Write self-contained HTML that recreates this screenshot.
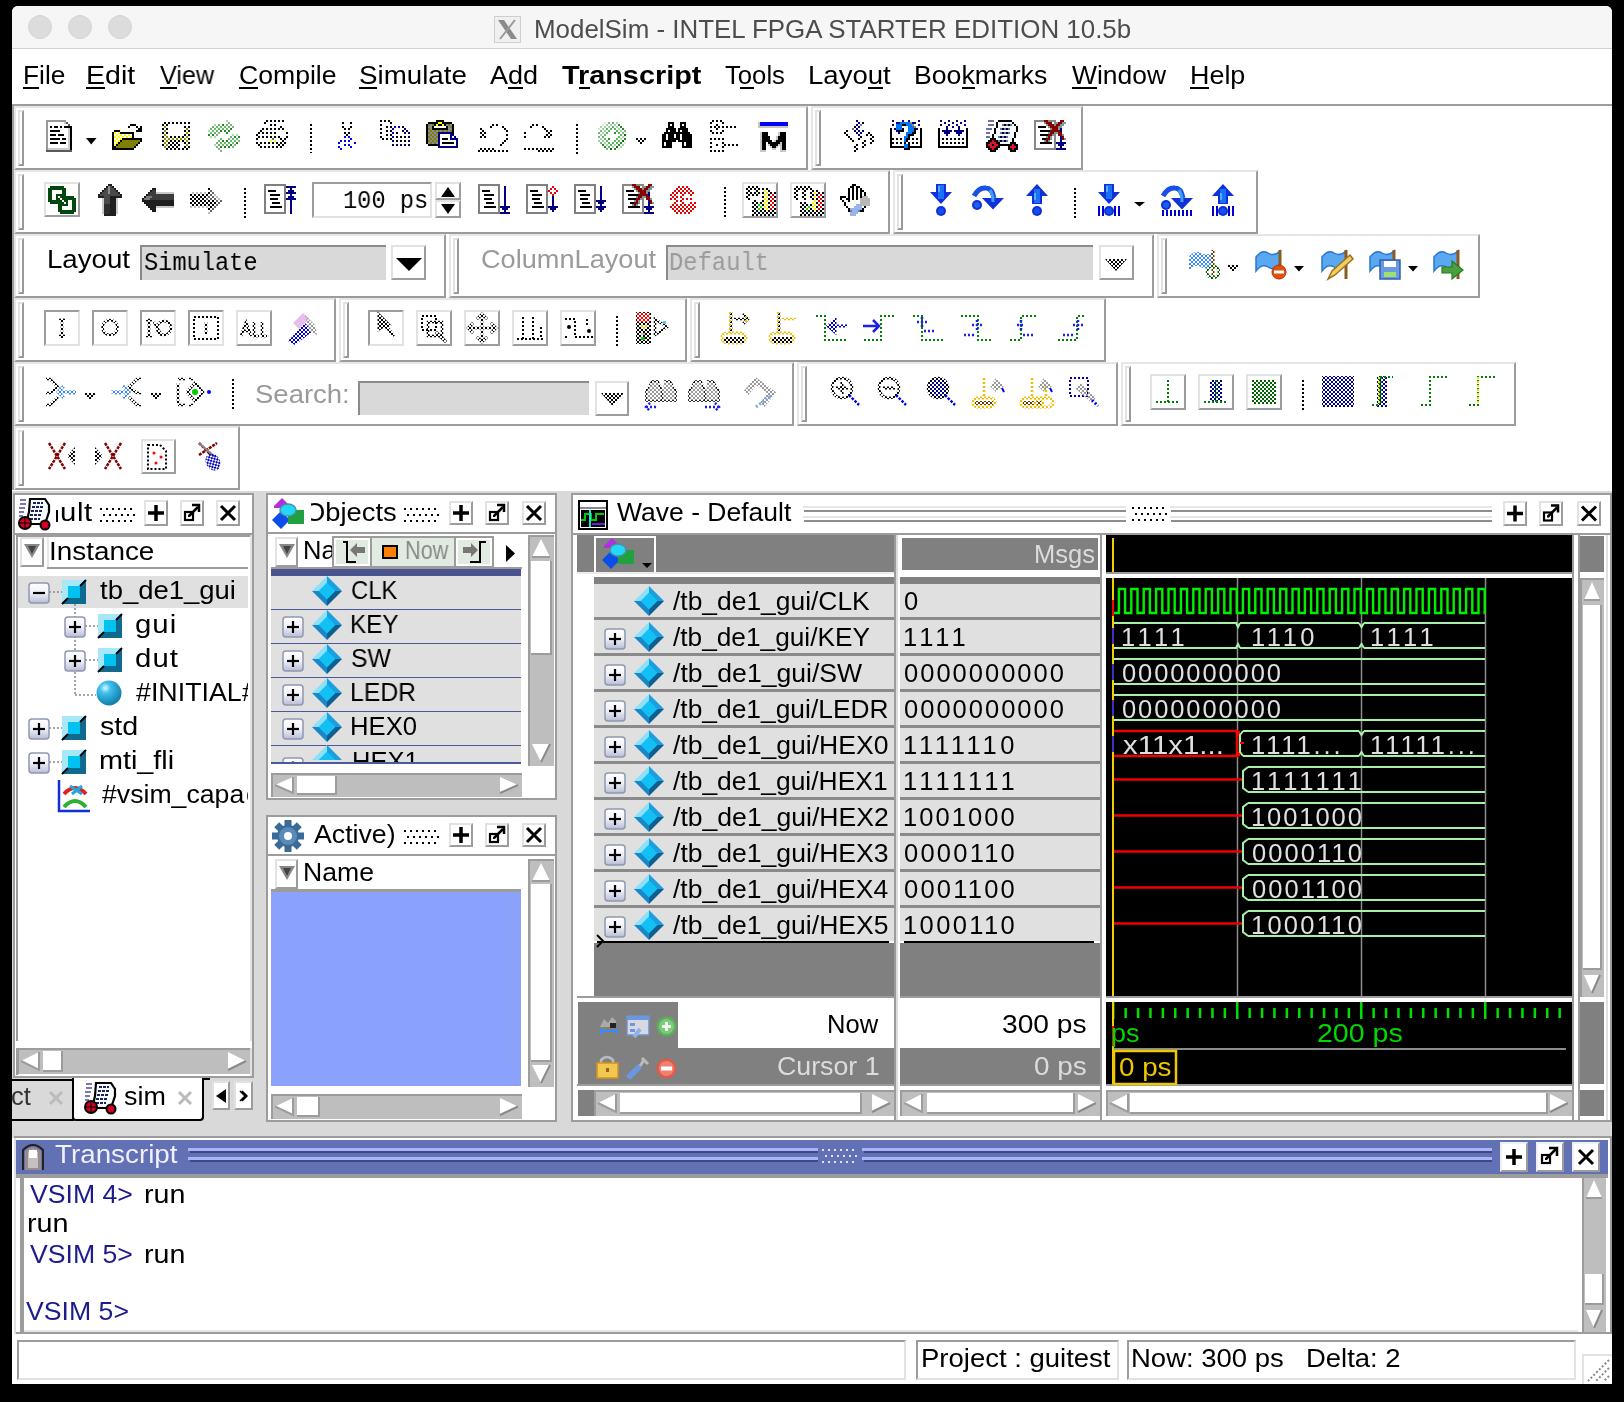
<!DOCTYPE html><html><head><meta charset="utf-8"><style>
*{margin:0;padding:0}
html,body{width:1624px;height:1402px;overflow:hidden;background:#000}
div,svg{position:absolute}
.t{white-space:pre;will-change:transform}
</style></head><body>
<div style="left:12px;top:6px;width:1600px;height:1378px;background:#fff;border-radius:6px 6px 0 0"></div>
<div style="left:12px;top:6px;width:1600px;height:42px;background:#f6f6f6;border-radius:6px 6px 0 0"></div>
<div style="left:12px;top:48px;width:1600px;height:1px;background:#d2d2d2"></div>
<div style="left:28px;top:15px;width:24px;height:24px;border-radius:50%;background:#dcdcdc;box-sizing:border-box;border:1px solid #d4d4d4"></div>
<div style="left:68px;top:15px;width:24px;height:24px;border-radius:50%;background:#dcdcdc;box-sizing:border-box;border:1px solid #d4d4d4"></div>
<div style="left:108px;top:15px;width:24px;height:24px;border-radius:50%;background:#dcdcdc;box-sizing:border-box;border:1px solid #d4d4d4"></div>
<div style="left:494px;top:16px;width:27px;height:27px;border:1px solid #cfcfcf;box-sizing:border-box;background:#f0f0f0"></div>
<svg style="left:494px;top:16px" width="27" height="27"><path d="M4 4 H10 L23 23 H17 Z" fill="#8a8a8a"/><path d="M21 4 L6 23" stroke="#999" stroke-width="2"/></svg>
<div class="t" style="left:533.87px;top:16.91px;font:25.5px/25.5px 'Liberation Sans', sans-serif;color:#4d4d4d;letter-spacing:0.000px;transform:scaleX(1.0163);transform-origin:0 0;">ModelSim - INTEL FPGA STARTER EDITION 10.5b</div>
<div style="left:22.85px;top:86.90px;width:16.04px;height:2px;background:#000"></div><div class="t" style="left:22.85px;top:62.81px;font:25.5px/25.5px 'Liberation Sans', sans-serif;color:#000;letter-spacing:0.000px;transform:scaleX(1.0299);transform-origin:0 0;">File</div>
<div style="left:85.66px;top:86.90px;width:19.02px;height:2px;background:#000"></div><div class="t" style="left:85.66px;top:62.81px;font:25.5px/25.5px 'Liberation Sans', sans-serif;color:#000;letter-spacing:-0.000px;transform:scaleX(1.1182);transform-origin:0 0;">Edit</div>
<div style="left:159.89px;top:86.90px;width:16.63px;height:2px;background:#000"></div><div class="t" style="left:159.89px;top:62.81px;font:25.5px/25.5px 'Liberation Sans', sans-serif;color:#000;letter-spacing:0.000px;transform:scaleX(0.9861);transform-origin:0 0;">View</div>
<div style="left:239.25px;top:86.90px;width:19.20px;height:2px;background:#000"></div><div class="t" style="left:239.25px;top:62.81px;font:25.5px/25.5px 'Liberation Sans', sans-serif;color:#000;letter-spacing:0.000px;transform:scaleX(1.0426);transform-origin:0 0;">Compile</div>
<div style="left:358.74px;top:86.90px;width:18.50px;height:2px;background:#000"></div><div class="t" style="left:358.74px;top:62.81px;font:25.5px/25.5px 'Liberation Sans', sans-serif;color:#000;letter-spacing:0.000px;transform:scaleX(1.0874);transform-origin:0 0;">Simulate</div>
<div style="left:507.98px;top:86.90px;width:15.03px;height:2px;background:#000"></div><div class="t" style="left:489.95px;top:62.81px;font:25.5px/25.5px 'Liberation Sans', sans-serif;color:#000;letter-spacing:0.000px;transform:scaleX(1.0599);transform-origin:0 0;">Add</div>
<div style="left:579.09px;top:86.90px;width:11.09px;height:2px;background:#000"></div><div class="t" style="left:561.68px;top:62.81px;font:bold 25.5px/25.5px 'Liberation Sans', sans-serif;color:#000;letter-spacing:0.000px;transform:scaleX(1.1303);transform-origin:0 0;">Transcript</div>
<div style="left:740.40px;top:86.90px;width:13.63px;height:2px;background:#000"></div><div class="t" style="left:725.42px;top:62.81px;font:25.5px/25.5px 'Liberation Sans', sans-serif;color:#000;letter-spacing:0.000px;transform:scaleX(1.0068);transform-origin:0 0;">Tools</div>
<div style="left:867.51px;top:86.90px;width:15.33px;height:2px;background:#000"></div><div class="t" style="left:807.74px;top:62.81px;font:25.5px/25.5px 'Liberation Sans', sans-serif;color:#000;letter-spacing:0.000px;transform:scaleX(1.0810);transform-origin:0 0;">Layout</div>
<div style="left:961.72px;top:86.90px;width:13.32px;height:2px;background:#000"></div><div class="t" style="left:914.31px;top:62.81px;font:25.5px/25.5px 'Liberation Sans', sans-serif;color:#000;letter-spacing:0.000px;transform:scaleX(1.0447);transform-origin:0 0;">Bookmarks</div>
<div style="left:1071.88px;top:86.90px;width:24.96px;height:2px;background:#000"></div><div class="t" style="left:1071.88px;top:62.81px;font:25.5px/25.5px 'Liberation Sans', sans-serif;color:#000;letter-spacing:0.000px;transform:scaleX(1.0369);transform-origin:0 0;">Window</div>
<div style="left:1189.79px;top:86.90px;width:19.43px;height:2px;background:#000"></div><div class="t" style="left:1189.79px;top:62.81px;font:25.5px/25.5px 'Liberation Sans', sans-serif;color:#000;letter-spacing:0.000px;transform:scaleX(1.0550);transform-origin:0 0;">Help</div>
<svg style="left:0;top:0" width="0" height="0"><defs>
<pattern id="pk" width="4" height="4" patternUnits="userSpaceOnUse"><rect width="2" height="2" fill="#000"/><rect x="2" y="2" width="2" height="2" fill="#000"/></pattern>
<pattern id="pg" width="4" height="4" patternUnits="userSpaceOnUse"><rect width="2" height="2" fill="#1a7a1a"/><rect x="2" y="2" width="2" height="2" fill="#8ccc8c"/></pattern>
<pattern id="pgd" width="4" height="4" patternUnits="userSpaceOnUse"><rect width="2" height="2" fill="#006400"/><rect x="2" y="2" width="2" height="2" fill="#006400"/></pattern>
<pattern id="pr" width="4" height="4" patternUnits="userSpaceOnUse"><rect width="2" height="2" fill="#f00"/><rect x="2" y="2" width="2" height="2" fill="#f00"/></pattern>
<pattern id="pb" width="4" height="4" patternUnits="userSpaceOnUse"><rect width="2" height="2" fill="#0000c0"/><rect x="2" y="2" width="2" height="2" fill="#0000c0"/></pattern>
<pattern id="pbn" width="4" height="4" patternUnits="userSpaceOnUse"><rect width="2" height="2" fill="#000080"/><rect x="2" y="2" width="2" height="2" fill="#000080"/></pattern>
<pattern id="pbl" width="4" height="4" patternUnits="userSpaceOnUse"><rect width="2" height="2" fill="#3c8cf0"/><rect x="2" y="2" width="2" height="2" fill="#3c8cf0"/></pattern>
<pattern id="py" width="4" height="4" patternUnits="userSpaceOnUse"><rect width="2" height="2" fill="#f0c000"/><rect x="2" y="2" width="2" height="2" fill="#f0c000"/></pattern>
<pattern id="pyy" width="4" height="4" patternUnits="userSpaceOnUse"><rect width="2" height="2" fill="#ff0"/><rect x="2" y="2" width="2" height="2" fill="#fff"/><rect x="2" width="2" height="2" fill="#ff0"/></pattern>
<pattern id="po" width="4" height="4" patternUnits="userSpaceOnUse"><rect width="2" height="2" fill="#7a6a00"/><rect x="2" y="2" width="2" height="2" fill="#7a6a00"/></pattern>
<pattern id="pgr" width="4" height="4" patternUnits="userSpaceOnUse"><rect width="2" height="2" fill="#999"/><rect x="2" y="2" width="2" height="2" fill="#999"/></pattern>
<pattern id="pbr" width="4" height="4" patternUnits="userSpaceOnUse"><rect width="2" height="2" fill="#6b3a00"/><rect x="2" y="2" width="2" height="2" fill="#6b3a00"/></pattern>
<pattern id="pk4" width="4" height="4" patternUnits="userSpaceOnUse"><rect width="2" height="2" fill="#000"/></pattern>
</defs></svg>
<div style="left:12px;top:104px;width:1600px;height:2px;background:#9c9c9c"></div>
<div style="left:12px;top:104px;width:2px;height:386px;background:#9c9c9c"></div>
<div style="left:14px;top:106px;width:794px;height:64px;border-style:solid;border-width:2px;border-color:#e6e6e6 #9c9c9c #9c9c9c #e6e6e6;box-sizing:border-box;"></div>
<div style="left:18px;top:110px;width:6px;height:56px;box-sizing:border-box;border:2px solid;border-color:#e2e2e2 #999 #999 #e2e2e2"></div>
<div style="left:811px;top:106px;width:272px;height:64px;border-style:solid;border-width:2px;border-color:#e6e6e6 #9c9c9c #9c9c9c #e6e6e6;box-sizing:border-box;"></div>
<div style="left:815px;top:110px;width:6px;height:56px;box-sizing:border-box;border:2px solid;border-color:#e2e2e2 #999 #999 #e2e2e2"></div>
<div style="left:14px;top:170px;width:876px;height:64px;border-style:solid;border-width:2px;border-color:#e6e6e6 #9c9c9c #9c9c9c #e6e6e6;box-sizing:border-box;"></div>
<div style="left:18px;top:174px;width:6px;height:56px;box-sizing:border-box;border:2px solid;border-color:#e2e2e2 #999 #999 #e2e2e2"></div>
<div style="left:893px;top:170px;width:365px;height:64px;border-style:solid;border-width:2px;border-color:#e6e6e6 #9c9c9c #9c9c9c #e6e6e6;box-sizing:border-box;"></div>
<div style="left:897px;top:174px;width:6px;height:56px;box-sizing:border-box;border:2px solid;border-color:#e2e2e2 #999 #999 #e2e2e2"></div>
<div style="left:14px;top:234px;width:432px;height:64px;border-style:solid;border-width:2px;border-color:#e6e6e6 #9c9c9c #9c9c9c #e6e6e6;box-sizing:border-box;"></div>
<div style="left:18px;top:238px;width:6px;height:56px;box-sizing:border-box;border:2px solid;border-color:#e2e2e2 #999 #999 #e2e2e2"></div>
<div style="left:449px;top:234px;width:705px;height:64px;border-style:solid;border-width:2px;border-color:#e6e6e6 #9c9c9c #9c9c9c #e6e6e6;box-sizing:border-box;"></div>
<div style="left:453px;top:238px;width:6px;height:56px;box-sizing:border-box;border:2px solid;border-color:#e2e2e2 #999 #999 #e2e2e2"></div>
<div style="left:1157px;top:234px;width:323px;height:64px;border-style:solid;border-width:2px;border-color:#e6e6e6 #9c9c9c #9c9c9c #e6e6e6;box-sizing:border-box;"></div>
<div style="left:1161px;top:238px;width:6px;height:56px;box-sizing:border-box;border:2px solid;border-color:#e2e2e2 #999 #999 #e2e2e2"></div>
<div style="left:14px;top:298px;width:322px;height:64px;border-style:solid;border-width:2px;border-color:#e6e6e6 #9c9c9c #9c9c9c #e6e6e6;box-sizing:border-box;"></div>
<div style="left:18px;top:302px;width:6px;height:56px;box-sizing:border-box;border:2px solid;border-color:#e2e2e2 #999 #999 #e2e2e2"></div>
<div style="left:339px;top:298px;width:348px;height:64px;border-style:solid;border-width:2px;border-color:#e6e6e6 #9c9c9c #9c9c9c #e6e6e6;box-sizing:border-box;"></div>
<div style="left:343px;top:302px;width:6px;height:56px;box-sizing:border-box;border:2px solid;border-color:#e2e2e2 #999 #999 #e2e2e2"></div>
<div style="left:690px;top:298px;width:416px;height:64px;border-style:solid;border-width:2px;border-color:#e6e6e6 #9c9c9c #9c9c9c #e6e6e6;box-sizing:border-box;"></div>
<div style="left:694px;top:302px;width:6px;height:56px;box-sizing:border-box;border:2px solid;border-color:#e2e2e2 #999 #999 #e2e2e2"></div>
<div style="left:14px;top:362px;width:780px;height:64px;border-style:solid;border-width:2px;border-color:#e6e6e6 #9c9c9c #9c9c9c #e6e6e6;box-sizing:border-box;"></div>
<div style="left:18px;top:366px;width:6px;height:56px;box-sizing:border-box;border:2px solid;border-color:#e2e2e2 #999 #999 #e2e2e2"></div>
<div style="left:797px;top:362px;width:321px;height:64px;border-style:solid;border-width:2px;border-color:#e6e6e6 #9c9c9c #9c9c9c #e6e6e6;box-sizing:border-box;"></div>
<div style="left:801px;top:366px;width:6px;height:56px;box-sizing:border-box;border:2px solid;border-color:#e2e2e2 #999 #999 #e2e2e2"></div>
<div style="left:1121px;top:362px;width:395px;height:64px;border-style:solid;border-width:2px;border-color:#e6e6e6 #9c9c9c #9c9c9c #e6e6e6;box-sizing:border-box;"></div>
<div style="left:1125px;top:366px;width:6px;height:56px;box-sizing:border-box;border:2px solid;border-color:#e2e2e2 #999 #999 #e2e2e2"></div>
<div style="left:14px;top:426px;width:226px;height:64px;border-style:solid;border-width:2px;border-color:#e6e6e6 #9c9c9c #9c9c9c #e6e6e6;box-sizing:border-box;"></div>
<div style="left:18px;top:430px;width:6px;height:56px;box-sizing:border-box;border:2px solid;border-color:#e2e2e2 #999 #999 #e2e2e2"></div>
<svg style="left:46px;top:120px;overflow:visible" width="26" height="32"><rect x="0" y="0" width="20" height="2" fill="#999"/><rect x="0" y="2" width="2" height="2" fill="#999"/><rect x="2" y="2" width="16" height="2" fill="#fff"/><rect x="18" y="2" width="2" height="2" fill="#ccc"/><rect x="20" y="2" width="2" height="2" fill="#5a5a5a"/><rect x="0" y="4" width="2" height="2" fill="#999"/><rect x="2" y="4" width="18" height="2" fill="#fff"/><rect x="22" y="4" width="2" height="2" fill="#5a5a5a"/><rect x="0" y="6" width="2" height="2" fill="#999"/><rect x="2" y="6" width="2" height="2" fill="#fff"/><rect x="4" y="6" width="2" height="2" fill="#000"/><rect x="6" y="6" width="2" height="2" fill="#fff"/><rect x="8" y="6" width="4" height="2" fill="#000"/><rect x="12" y="6" width="2" height="2" fill="#fff"/><rect x="14" y="6" width="2" height="2" fill="#000"/><rect x="16" y="6" width="2" height="2" fill="#fff"/><rect x="18" y="6" width="8" height="2" fill="#000"/><rect x="0" y="8" width="2" height="2" fill="#999"/><rect x="2" y="8" width="20" height="2" fill="#fff"/><rect x="22" y="8" width="2" height="2" fill="#ccc"/><rect x="24" y="8" width="2" height="2" fill="#000"/><rect x="0" y="10" width="2" height="2" fill="#999"/><rect x="2" y="10" width="2" height="2" fill="#fff"/><rect x="4" y="10" width="10" height="2" fill="#000"/><rect x="14" y="10" width="8" height="2" fill="#fff"/><rect x="22" y="10" width="2" height="2" fill="#ccc"/><rect x="24" y="10" width="2" height="2" fill="#000"/><rect x="0" y="12" width="2" height="2" fill="#999"/><rect x="2" y="12" width="20" height="2" fill="#fff"/><rect x="22" y="12" width="2" height="2" fill="#ccc"/><rect x="24" y="12" width="2" height="2" fill="#000"/><rect x="0" y="14" width="2" height="2" fill="#999"/><rect x="2" y="14" width="2" height="2" fill="#fff"/><rect x="4" y="14" width="6" height="2" fill="#000"/><rect x="10" y="14" width="2" height="2" fill="#fff"/><rect x="12" y="14" width="6" height="2" fill="#000"/><rect x="18" y="14" width="4" height="2" fill="#fff"/><rect x="22" y="14" width="2" height="2" fill="#ccc"/><rect x="24" y="14" width="2" height="2" fill="#000"/><rect x="0" y="16" width="2" height="2" fill="#999"/><rect x="2" y="16" width="20" height="2" fill="#fff"/><rect x="22" y="16" width="2" height="2" fill="#ccc"/><rect x="24" y="16" width="2" height="2" fill="#000"/><rect x="0" y="18" width="2" height="2" fill="#999"/><rect x="2" y="18" width="2" height="2" fill="#fff"/><rect x="4" y="18" width="10" height="2" fill="#000"/><rect x="14" y="18" width="2" height="2" fill="#fff"/><rect x="16" y="18" width="4" height="2" fill="#000"/><rect x="20" y="18" width="2" height="2" fill="#fff"/><rect x="22" y="18" width="2" height="2" fill="#ccc"/><rect x="24" y="18" width="2" height="2" fill="#000"/><rect x="0" y="20" width="2" height="2" fill="#999"/><rect x="2" y="20" width="20" height="2" fill="#fff"/><rect x="22" y="20" width="2" height="2" fill="#ccc"/><rect x="24" y="20" width="2" height="2" fill="#000"/><rect x="0" y="22" width="2" height="2" fill="#999"/><rect x="2" y="22" width="2" height="2" fill="#fff"/><rect x="4" y="22" width="8" height="2" fill="#000"/><rect x="12" y="22" width="2" height="2" fill="#fff"/><rect x="14" y="22" width="6" height="2" fill="#000"/><rect x="20" y="22" width="2" height="2" fill="#fff"/><rect x="22" y="22" width="2" height="2" fill="#ccc"/><rect x="24" y="22" width="2" height="2" fill="#000"/><rect x="0" y="24" width="2" height="2" fill="#999"/><rect x="2" y="24" width="20" height="2" fill="#fff"/><rect x="22" y="24" width="2" height="2" fill="#ccc"/><rect x="24" y="24" width="2" height="2" fill="#000"/><rect x="0" y="26" width="2" height="2" fill="#999"/><rect x="2" y="26" width="20" height="2" fill="#fff"/><rect x="22" y="26" width="2" height="2" fill="#ccc"/><rect x="24" y="26" width="2" height="2" fill="#000"/><rect x="0" y="28" width="2" height="2" fill="#999"/><rect x="2" y="28" width="22" height="2" fill="#ccc"/><rect x="24" y="28" width="2" height="2" fill="#000"/><rect x="0" y="30" width="26" height="2" fill="#5a5a5a"/></svg>
<svg style="left:85.5px;top:138px;overflow:visible" width="10.5" height="6.5"><path d="M0 0 H10.5 L5.25 6.5 Z" fill="#000"/></svg>
<svg style="left:112px;top:124px;overflow:visible" width="30" height="26"><rect x="18" y="0" width="6" height="2" fill="#000"/><rect x="16" y="2" width="2" height="2" fill="#000"/><rect x="24" y="2" width="2" height="2" fill="#000"/><rect x="28" y="2" width="2" height="2" fill="#000"/><rect x="26" y="4" width="4" height="2" fill="#000"/><rect x="2" y="6" width="6" height="2" fill="#000"/><rect x="24" y="6" width="6" height="2" fill="#000"/><rect x="0" y="8" width="2" height="2" fill="#000"/><rect x="2" y="8" width="2" height="2" fill="#ffff00"/><rect x="4" y="8" width="2" height="2" fill="#fff"/><rect x="6" y="8" width="2" height="2" fill="#ffff00"/><rect x="8" y="8" width="14" height="2" fill="#000"/><rect x="0" y="10" width="2" height="2" fill="#000"/><rect x="2" y="10" width="2" height="2" fill="#fff"/><rect x="4" y="10" width="2" height="2" fill="#ffff00"/><rect x="6" y="10" width="2" height="2" fill="#fff"/><rect x="8" y="10" width="2" height="2" fill="#ffff00"/><rect x="10" y="10" width="2" height="2" fill="#fff"/><rect x="12" y="10" width="2" height="2" fill="#ffff00"/><rect x="14" y="10" width="2" height="2" fill="#fff"/><rect x="16" y="10" width="2" height="2" fill="#ffff00"/><rect x="18" y="10" width="2" height="2" fill="#fff"/><rect x="20" y="10" width="2" height="2" fill="#000"/><rect x="0" y="12" width="2" height="2" fill="#000"/><rect x="2" y="12" width="2" height="2" fill="#ffff00"/><rect x="4" y="12" width="2" height="2" fill="#fff"/><rect x="6" y="12" width="2" height="2" fill="#ffff00"/><rect x="8" y="12" width="2" height="2" fill="#fff"/><rect x="10" y="12" width="2" height="2" fill="#ffff00"/><rect x="12" y="12" width="2" height="2" fill="#fff"/><rect x="14" y="12" width="2" height="2" fill="#ffff00"/><rect x="16" y="12" width="2" height="2" fill="#fff"/><rect x="18" y="12" width="2" height="2" fill="#ffff00"/><rect x="20" y="12" width="2" height="2" fill="#000"/><rect x="0" y="14" width="2" height="2" fill="#000"/><rect x="2" y="14" width="2" height="2" fill="#fff"/><rect x="4" y="14" width="2" height="2" fill="#ffff00"/><rect x="6" y="14" width="2" height="2" fill="#fff"/><rect x="8" y="14" width="2" height="2" fill="#ffff00"/><rect x="10" y="14" width="20" height="2" fill="#000"/><rect x="0" y="16" width="2" height="2" fill="#000"/><rect x="2" y="16" width="2" height="2" fill="#ffff00"/><rect x="4" y="16" width="2" height="2" fill="#fff"/><rect x="6" y="16" width="2" height="2" fill="#ffff00"/><rect x="8" y="16" width="2" height="2" fill="#000"/><rect x="10" y="16" width="18" height="2" fill="#808000"/><rect x="28" y="16" width="2" height="2" fill="#000"/><rect x="0" y="18" width="2" height="2" fill="#000"/><rect x="2" y="18" width="2" height="2" fill="#fff"/><rect x="4" y="18" width="2" height="2" fill="#ffff00"/><rect x="6" y="18" width="2" height="2" fill="#000"/><rect x="8" y="18" width="18" height="2" fill="#808000"/><rect x="26" y="18" width="2" height="2" fill="#000"/><rect x="0" y="20" width="2" height="2" fill="#000"/><rect x="2" y="20" width="2" height="2" fill="#ffff00"/><rect x="4" y="20" width="2" height="2" fill="#000"/><rect x="6" y="20" width="18" height="2" fill="#808000"/><rect x="24" y="20" width="2" height="2" fill="#000"/><rect x="0" y="22" width="4" height="2" fill="#000"/><rect x="4" y="22" width="18" height="2" fill="#808000"/><rect x="22" y="22" width="2" height="2" fill="#000"/><rect x="0" y="24" width="22" height="2" fill="#000"/></svg>
<svg style="left:162px;top:122px;overflow:visible" width="28" height="28"><rect x="2" y="0" width="2" height="2" fill="#000"/><rect x="6" y="0" width="2" height="2" fill="#000"/><rect x="10" y="0" width="2" height="2" fill="#000"/><rect x="14" y="0" width="2" height="2" fill="#000"/><rect x="18" y="0" width="2" height="2" fill="#000"/><rect x="22" y="0" width="2" height="2" fill="#000"/><rect x="26" y="0" width="2" height="2" fill="#000"/><rect x="0" y="2" width="2" height="2" fill="#000"/><rect x="4" y="2" width="2" height="2" fill="#000"/><rect x="2" y="4" width="2" height="2" fill="#8a8a00"/><rect x="22" y="4" width="2" height="2" fill="#000"/><rect x="26" y="4" width="2" height="2" fill="#000"/><rect x="0" y="6" width="2" height="2" fill="#000"/><rect x="4" y="6" width="2" height="2" fill="#000"/><rect x="24" y="6" width="2" height="2" fill="#8a8a00"/><rect x="2" y="8" width="2" height="2" fill="#8a8a00"/><rect x="22" y="8" width="2" height="2" fill="#000"/><rect x="26" y="8" width="2" height="2" fill="#000"/><rect x="0" y="10" width="2" height="2" fill="#000"/><rect x="4" y="10" width="2" height="2" fill="#000"/><rect x="24" y="10" width="2" height="2" fill="#8a8a00"/><rect x="2" y="12" width="2" height="2" fill="#8a8a00"/><rect x="22" y="12" width="2" height="2" fill="#000"/><rect x="26" y="12" width="2" height="2" fill="#000"/><rect x="0" y="14" width="2" height="2" fill="#000"/><rect x="4" y="14" width="2" height="2" fill="#8a8a00"/><rect x="8" y="14" width="2" height="2" fill="#000"/><rect x="12" y="14" width="2" height="2" fill="#000"/><rect x="16" y="14" width="2" height="2" fill="#000"/><rect x="20" y="14" width="2" height="2" fill="#000"/><rect x="24" y="14" width="2" height="2" fill="#8a8a00"/><rect x="2" y="16" width="2" height="2" fill="#8a8a00"/><rect x="6" y="16" width="2" height="2" fill="#8a8a00"/><rect x="10" y="16" width="2" height="2" fill="#8a8a00"/><rect x="14" y="16" width="2" height="2" fill="#8a8a00"/><rect x="18" y="16" width="2" height="2" fill="#8a8a00"/><rect x="22" y="16" width="2" height="2" fill="#8a8a00"/><rect x="26" y="16" width="2" height="2" fill="#000"/><rect x="0" y="18" width="2" height="2" fill="#000"/><rect x="4" y="18" width="2" height="2" fill="#8a8a00"/><rect x="8" y="18" width="2" height="2" fill="#000"/><rect x="12" y="18" width="2" height="2" fill="#000"/><rect x="16" y="18" width="2" height="2" fill="#000"/><rect x="20" y="18" width="2" height="2" fill="#000"/><rect x="24" y="18" width="2" height="2" fill="#8a8a00"/><rect x="2" y="20" width="2" height="2" fill="#8a8a00"/><rect x="6" y="20" width="2" height="2" fill="#000"/><rect x="10" y="20" width="2" height="2" fill="#000"/><rect x="14" y="20" width="2" height="2" fill="#000"/><rect x="22" y="20" width="2" height="2" fill="#000"/><rect x="26" y="20" width="2" height="2" fill="#000"/><rect x="0" y="22" width="2" height="2" fill="#000"/><rect x="4" y="22" width="2" height="2" fill="#8a8a00"/><rect x="8" y="22" width="2" height="2" fill="#000"/><rect x="12" y="22" width="2" height="2" fill="#000"/><rect x="16" y="22" width="2" height="2" fill="#000"/><rect x="24" y="22" width="2" height="2" fill="#8a8a00"/><rect x="2" y="24" width="2" height="2" fill="#8a8a00"/><rect x="6" y="24" width="2" height="2" fill="#000"/><rect x="10" y="24" width="2" height="2" fill="#000"/><rect x="14" y="24" width="2" height="2" fill="#000"/><rect x="22" y="24" width="2" height="2" fill="#000"/><rect x="26" y="24" width="2" height="2" fill="#000"/><rect x="4" y="26" width="2" height="2" fill="#000"/><rect x="8" y="26" width="2" height="2" fill="#000"/><rect x="12" y="26" width="2" height="2" fill="#000"/><rect x="16" y="26" width="2" height="2" fill="#000"/><rect x="20" y="26" width="2" height="2" fill="#000"/><rect x="24" y="26" width="2" height="2" fill="#000"/></svg>
<svg style="left:208px;top:120px;overflow:visible" width="32" height="32"><rect x="18" y="0" width="2" height="2" fill="#a8d8a8"/><rect x="20" y="2" width="2" height="2" fill="#88b088"/><rect x="6" y="4" width="2" height="2" fill="#a8d8a8"/><rect x="10" y="4" width="2" height="2" fill="#66bb66"/><rect x="14" y="4" width="2" height="2" fill="#1e8a1e"/><rect x="18" y="4" width="2" height="2" fill="#66bb66"/><rect x="22" y="4" width="2" height="2" fill="#88b088"/><rect x="4" y="6" width="2" height="2" fill="#66bb66"/><rect x="8" y="6" width="2" height="2" fill="#66bb66"/><rect x="12" y="6" width="2" height="2" fill="#66bb66"/><rect x="16" y="6" width="2" height="2" fill="#66bb66"/><rect x="20" y="6" width="2" height="2" fill="#66bb66"/><rect x="24" y="6" width="2" height="2" fill="#88b088"/><rect x="2" y="8" width="2" height="2" fill="#66bb66"/><rect x="6" y="8" width="2" height="2" fill="#66bb66"/><rect x="10" y="8" width="2" height="2" fill="#66bb66"/><rect x="14" y="8" width="2" height="2" fill="#66bb66"/><rect x="18" y="8" width="2" height="2" fill="#66bb66"/><rect x="22" y="8" width="2" height="2" fill="#1e8a1e"/><rect x="0" y="10" width="2" height="2" fill="#a8d8a8"/><rect x="4" y="10" width="2" height="2" fill="#66bb66"/><rect x="8" y="10" width="2" height="2" fill="#66bb66"/><rect x="12" y="10" width="2" height="2" fill="#1e8a1e"/><rect x="16" y="10" width="2" height="2" fill="#1e8a1e"/><rect x="20" y="10" width="2" height="2" fill="#1e8a1e"/><rect x="2" y="12" width="2" height="2" fill="#66bb66"/><rect x="6" y="12" width="2" height="2" fill="#66bb66"/><rect x="10" y="12" width="2" height="2" fill="#88b088"/><rect x="18" y="12" width="2" height="2" fill="#1e8a1e"/><rect x="0" y="14" width="2" height="2" fill="#1e8a1e"/><rect x="4" y="14" width="2" height="2" fill="#1e8a1e"/><rect x="8" y="14" width="2" height="2" fill="#88b088"/><rect x="24" y="14" width="2" height="2" fill="#a8d8a8"/><rect x="28" y="14" width="2" height="2" fill="#a8d8a8"/><rect x="2" y="16" width="2" height="2" fill="#a8d8a8"/><rect x="6" y="16" width="2" height="2" fill="#a8d8a8"/><rect x="22" y="16" width="2" height="2" fill="#66bb66"/><rect x="26" y="16" width="2" height="2" fill="#1e8a1e"/><rect x="30" y="16" width="2" height="2" fill="#1e8a1e"/><rect x="12" y="18" width="2" height="2" fill="#66bb66"/><rect x="20" y="18" width="2" height="2" fill="#88b088"/><rect x="24" y="18" width="2" height="2" fill="#66bb66"/><rect x="28" y="18" width="2" height="2" fill="#66bb66"/><rect x="10" y="20" width="2" height="2" fill="#66bb66"/><rect x="14" y="20" width="2" height="2" fill="#1e8a1e"/><rect x="18" y="20" width="2" height="2" fill="#1e8a1e"/><rect x="22" y="20" width="2" height="2" fill="#66bb66"/><rect x="26" y="20" width="2" height="2" fill="#66bb66"/><rect x="30" y="20" width="2" height="2" fill="#88b088"/><rect x="8" y="22" width="2" height="2" fill="#66bb66"/><rect x="12" y="22" width="2" height="2" fill="#66bb66"/><rect x="16" y="22" width="2" height="2" fill="#66bb66"/><rect x="20" y="22" width="2" height="2" fill="#66bb66"/><rect x="24" y="22" width="2" height="2" fill="#66bb66"/><rect x="28" y="22" width="2" height="2" fill="#1e8a1e"/><rect x="6" y="24" width="2" height="2" fill="#a8d8a8"/><rect x="10" y="24" width="2" height="2" fill="#66bb66"/><rect x="14" y="24" width="2" height="2" fill="#66bb66"/><rect x="18" y="24" width="2" height="2" fill="#66bb66"/><rect x="22" y="24" width="2" height="2" fill="#1e8a1e"/><rect x="26" y="24" width="2" height="2" fill="#88b088"/><rect x="8" y="26" width="2" height="2" fill="#88b088"/><rect x="12" y="26" width="2" height="2" fill="#1e8a1e"/><rect x="16" y="26" width="2" height="2" fill="#1e8a1e"/><rect x="20" y="26" width="2" height="2" fill="#1e8a1e"/><rect x="24" y="26" width="2" height="2" fill="#88b088"/><rect x="10" y="28" width="2" height="2" fill="#88b088"/><rect x="12" y="30" width="2" height="2" fill="#88b088"/></svg>
<svg style="left:256px;top:120px;overflow:visible" width="32" height="28"><rect x="10" y="0" width="2" height="2" fill="#000"/><rect x="14" y="0" width="2" height="2" fill="#000"/><rect x="18" y="0" width="2" height="2" fill="#000"/><rect x="22" y="0" width="2" height="2" fill="#000"/><rect x="26" y="0" width="2" height="2" fill="#000"/><rect x="8" y="2" width="2" height="2" fill="#000"/><rect x="14" y="4" width="2" height="2" fill="#000"/><rect x="18" y="4" width="2" height="2" fill="#000"/><rect x="24" y="6" width="2" height="2" fill="#000"/><rect x="6" y="8" width="2" height="2" fill="#000"/><rect x="10" y="8" width="2" height="2" fill="#000"/><rect x="14" y="8" width="2" height="2" fill="#000"/><rect x="18" y="8" width="2" height="2" fill="#000"/><rect x="22" y="8" width="2" height="2" fill="#000"/><rect x="26" y="8" width="2" height="2" fill="#000"/><rect x="4" y="10" width="2" height="2" fill="#000"/><rect x="2" y="12" width="2" height="2" fill="#000"/><rect x="6" y="12" width="2" height="2" fill="#000"/><rect x="10" y="12" width="2" height="2" fill="#000"/><rect x="14" y="12" width="2" height="2" fill="#000"/><rect x="18" y="12" width="2" height="2" fill="#000"/><rect x="30" y="12" width="2" height="2" fill="#000"/><rect x="0" y="14" width="2" height="2" fill="#000"/><rect x="2" y="16" width="2" height="2" fill="#000"/><rect x="6" y="16" width="2" height="2" fill="#000"/><rect x="10" y="16" width="2" height="2" fill="#000"/><rect x="14" y="16" width="2" height="2" fill="#000"/><rect x="18" y="16" width="2" height="2" fill="#000"/><rect x="22" y="16" width="2" height="2" fill="#000"/><rect x="30" y="16" width="2" height="2" fill="#000"/><rect x="0" y="18" width="2" height="2" fill="#000"/><rect x="16" y="18" width="2" height="2" fill="#707040"/><rect x="24" y="18" width="2" height="2" fill="#000"/><rect x="28" y="18" width="2" height="2" fill="#000"/><rect x="14" y="20" width="2" height="2" fill="#ffff00"/><rect x="18" y="20" width="2" height="2" fill="#ffff00"/><rect x="26" y="20" width="2" height="2" fill="#000"/><rect x="0" y="22" width="2" height="2" fill="#000"/><rect x="4" y="22" width="2" height="2" fill="#000"/><rect x="8" y="22" width="2" height="2" fill="#000"/><rect x="12" y="22" width="2" height="2" fill="#000"/><rect x="16" y="22" width="2" height="2" fill="#000"/><rect x="20" y="22" width="2" height="2" fill="#000"/><rect x="24" y="22" width="2" height="2" fill="#000"/><rect x="28" y="22" width="2" height="2" fill="#000"/><rect x="2" y="24" width="2" height="2" fill="#000"/><rect x="22" y="24" width="2" height="2" fill="#000"/><rect x="26" y="24" width="2" height="2" fill="#000"/><rect x="4" y="26" width="2" height="2" fill="#000"/><rect x="8" y="26" width="2" height="2" fill="#000"/><rect x="12" y="26" width="2" height="2" fill="#000"/><rect x="16" y="26" width="2" height="2" fill="#000"/><rect x="20" y="26" width="2" height="2" fill="#000"/><rect x="24" y="26" width="2" height="2" fill="#000"/></svg>
<svg style="left:310px;top:124px;overflow:visible" width="2" height="29"><line x1="1" y1="0" x2="1" y2="29" stroke="#000" stroke-width="2" stroke-dasharray="2 2"/></svg>
<svg style="left:338px;top:122px;overflow:visible" width="18" height="28"><rect x="4" y="0" width="2" height="2" fill="#000"/><rect x="12" y="0" width="2" height="2" fill="#000"/><rect x="4" y="4" width="2" height="2" fill="#000"/><rect x="12" y="4" width="2" height="2" fill="#000"/><rect x="6" y="6" width="2" height="2" fill="#000"/><rect x="10" y="6" width="2" height="2" fill="#000"/><rect x="6" y="10" width="2" height="2" fill="#000"/><rect x="10" y="10" width="2" height="2" fill="#000"/><rect x="8" y="12" width="2" height="2" fill="#000"/><rect x="6" y="14" width="2" height="2" fill="#0000f0"/><rect x="10" y="14" width="2" height="2" fill="#0000f0"/><rect x="12" y="16" width="2" height="2" fill="#0000f0"/><rect x="2" y="18" width="2" height="2" fill="#0000f0"/><rect x="6" y="18" width="2" height="2" fill="#0000f0"/><rect x="10" y="18" width="2" height="2" fill="#0000f0"/><rect x="0" y="20" width="2" height="2" fill="#0000f0"/><rect x="16" y="20" width="2" height="2" fill="#0000f0"/><rect x="6" y="22" width="2" height="2" fill="#0000f0"/><rect x="10" y="22" width="2" height="2" fill="#0000f0"/><rect x="0" y="24" width="2" height="2" fill="#0000f0"/><rect x="12" y="24" width="2" height="2" fill="#0000f0"/><rect x="2" y="26" width="2" height="2" fill="#0000f0"/></svg>
<svg style="left:380px;top:120px;overflow:visible" width="30" height="26"><rect x="0" y="0" width="2" height="2" fill="#000"/><rect x="4" y="0" width="2" height="2" fill="#000"/><rect x="8" y="0" width="2" height="2" fill="#000"/><rect x="10" y="2" width="2" height="2" fill="#000"/><rect x="0" y="4" width="2" height="2" fill="#000"/><rect x="6" y="6" width="2" height="2" fill="#000"/><rect x="10" y="6" width="2" height="2" fill="#000"/><rect x="14" y="6" width="2" height="2" fill="#0000c0"/><rect x="18" y="6" width="2" height="2" fill="#0000c0"/><rect x="22" y="6" width="2" height="2" fill="#000060"/><rect x="0" y="8" width="2" height="2" fill="#000"/><rect x="12" y="8" width="2" height="2" fill="#0000c0"/><rect x="24" y="8" width="2" height="2" fill="#000060"/><rect x="6" y="10" width="2" height="2" fill="#000"/><rect x="10" y="10" width="2" height="2" fill="#000"/><rect x="22" y="10" width="2" height="2" fill="#000060"/><rect x="26" y="10" width="2" height="2" fill="#000060"/><rect x="0" y="12" width="2" height="2" fill="#000"/><rect x="12" y="12" width="2" height="2" fill="#0000c0"/><rect x="16" y="12" width="2" height="2" fill="#000"/><rect x="24" y="12" width="2" height="2" fill="#000060"/><rect x="28" y="12" width="2" height="2" fill="#000060"/><rect x="6" y="14" width="2" height="2" fill="#000"/><rect x="10" y="14" width="2" height="2" fill="#000"/><rect x="0" y="16" width="2" height="2" fill="#000"/><rect x="12" y="16" width="2" height="2" fill="#0000c0"/><rect x="16" y="16" width="2" height="2" fill="#000"/><rect x="20" y="16" width="2" height="2" fill="#000"/><rect x="24" y="16" width="2" height="2" fill="#000"/><rect x="28" y="16" width="2" height="2" fill="#000060"/><rect x="2" y="18" width="2" height="2" fill="#000"/><rect x="6" y="18" width="2" height="2" fill="#000"/><rect x="10" y="18" width="2" height="2" fill="#000"/><rect x="12" y="20" width="2" height="2" fill="#000060"/><rect x="16" y="20" width="2" height="2" fill="#000"/><rect x="20" y="20" width="2" height="2" fill="#000"/><rect x="24" y="20" width="2" height="2" fill="#000"/><rect x="28" y="20" width="2" height="2" fill="#000060"/><rect x="12" y="24" width="2" height="2" fill="#000060"/><rect x="16" y="24" width="2" height="2" fill="#000060"/><rect x="20" y="24" width="2" height="2" fill="#000060"/><rect x="24" y="24" width="2" height="2" fill="#000060"/><rect x="28" y="24" width="2" height="2" fill="#000060"/></svg>
<svg style="left:426px;top:120px;overflow:visible" width="32" height="28"><rect x="10" y="0" width="8" height="2" fill="#000"/><rect x="2" y="2" width="10" height="2" fill="#000"/><rect x="12" y="2" width="4" height="2" fill="#ffff00"/><rect x="16" y="2" width="10" height="2" fill="#000"/><rect x="0" y="4" width="2" height="2" fill="#000"/><rect x="2" y="4" width="2" height="2" fill="#808000"/><rect x="4" y="4" width="2" height="2" fill="#8a8a9a"/><rect x="6" y="4" width="2" height="2" fill="#808000"/><rect x="8" y="4" width="2" height="2" fill="#000"/><rect x="10" y="4" width="2" height="2" fill="#ffff00"/><rect x="12" y="4" width="4" height="2" fill="#000"/><rect x="16" y="4" width="2" height="2" fill="#ffff00"/><rect x="18" y="4" width="2" height="2" fill="#000"/><rect x="20" y="4" width="2" height="2" fill="#8a8a9a"/><rect x="22" y="4" width="2" height="2" fill="#808000"/><rect x="24" y="4" width="2" height="2" fill="#8a8a9a"/><rect x="26" y="4" width="2" height="2" fill="#000"/><rect x="0" y="6" width="2" height="2" fill="#000"/><rect x="2" y="6" width="4" height="2" fill="#8a8a9a"/><rect x="6" y="6" width="2" height="2" fill="#000"/><rect x="8" y="6" width="12" height="2" fill="#fff"/><rect x="20" y="6" width="2" height="2" fill="#000"/><rect x="22" y="6" width="2" height="2" fill="#8a8a9a"/><rect x="24" y="6" width="2" height="2" fill="#808000"/><rect x="26" y="6" width="2" height="2" fill="#000"/><rect x="0" y="8" width="2" height="2" fill="#000"/><rect x="2" y="8" width="2" height="2" fill="#808000"/><rect x="4" y="8" width="2" height="2" fill="#8a8a9a"/><rect x="6" y="8" width="16" height="2" fill="#000"/><rect x="22" y="8" width="4" height="2" fill="#8a8a9a"/><rect x="26" y="8" width="2" height="2" fill="#000"/><rect x="0" y="10" width="2" height="2" fill="#000"/><rect x="2" y="10" width="2" height="2" fill="#8a8a9a"/><rect x="4" y="10" width="2" height="2" fill="#808000"/><rect x="6" y="10" width="2" height="2" fill="#8a8a9a"/><rect x="8" y="10" width="2" height="2" fill="#808000"/><rect x="10" y="10" width="2" height="2" fill="#8a8a9a"/><rect x="12" y="10" width="2" height="2" fill="#808000"/><rect x="14" y="10" width="2" height="2" fill="#8a8a9a"/><rect x="16" y="10" width="2" height="2" fill="#808000"/><rect x="18" y="10" width="2" height="2" fill="#8a8a9a"/><rect x="20" y="10" width="2" height="2" fill="#808000"/><rect x="22" y="10" width="2" height="2" fill="#8a8a9a"/><rect x="24" y="10" width="2" height="2" fill="#808000"/><rect x="26" y="10" width="2" height="2" fill="#000"/><rect x="0" y="12" width="2" height="2" fill="#000"/><rect x="2" y="12" width="2" height="2" fill="#808000"/><rect x="4" y="12" width="2" height="2" fill="#8a8a9a"/><rect x="6" y="12" width="2" height="2" fill="#808000"/><rect x="8" y="12" width="2" height="2" fill="#8a8a9a"/><rect x="10" y="12" width="2" height="2" fill="#808000"/><rect x="12" y="12" width="14" height="2" fill="#000080"/><rect x="26" y="12" width="2" height="2" fill="#000"/><rect x="0" y="14" width="2" height="2" fill="#000"/><rect x="2" y="14" width="2" height="2" fill="#8a8a9a"/><rect x="4" y="14" width="2" height="2" fill="#808000"/><rect x="6" y="14" width="2" height="2" fill="#8a8a9a"/><rect x="8" y="14" width="2" height="2" fill="#808000"/><rect x="10" y="14" width="2" height="2" fill="#8a8a9a"/><rect x="12" y="14" width="2" height="2" fill="#000080"/><rect x="14" y="14" width="10" height="2" fill="#fff"/><rect x="24" y="14" width="4" height="2" fill="#000080"/><rect x="0" y="16" width="2" height="2" fill="#000"/><rect x="2" y="16" width="2" height="2" fill="#808000"/><rect x="4" y="16" width="2" height="2" fill="#8a8a9a"/><rect x="6" y="16" width="2" height="2" fill="#808000"/><rect x="8" y="16" width="2" height="2" fill="#8a8a9a"/><rect x="10" y="16" width="2" height="2" fill="#808000"/><rect x="12" y="16" width="2" height="2" fill="#000080"/><rect x="14" y="16" width="10" height="2" fill="#fff"/><rect x="24" y="16" width="2" height="2" fill="#000080"/><rect x="26" y="16" width="2" height="2" fill="#fff"/><rect x="28" y="16" width="2" height="2" fill="#000080"/><rect x="0" y="18" width="2" height="2" fill="#000"/><rect x="2" y="18" width="2" height="2" fill="#8a8a9a"/><rect x="4" y="18" width="2" height="2" fill="#808000"/><rect x="6" y="18" width="2" height="2" fill="#8a8a9a"/><rect x="8" y="18" width="2" height="2" fill="#808000"/><rect x="10" y="18" width="2" height="2" fill="#8a8a9a"/><rect x="12" y="18" width="2" height="2" fill="#000080"/><rect x="14" y="18" width="2" height="2" fill="#fff"/><rect x="16" y="18" width="6" height="2" fill="#000"/><rect x="22" y="18" width="2" height="2" fill="#fff"/><rect x="24" y="18" width="8" height="2" fill="#000080"/><rect x="0" y="20" width="2" height="2" fill="#000"/><rect x="2" y="20" width="2" height="2" fill="#808000"/><rect x="4" y="20" width="2" height="2" fill="#8a8a9a"/><rect x="6" y="20" width="2" height="2" fill="#808000"/><rect x="8" y="20" width="2" height="2" fill="#8a8a9a"/><rect x="10" y="20" width="2" height="2" fill="#808000"/><rect x="12" y="20" width="2" height="2" fill="#000080"/><rect x="14" y="20" width="16" height="2" fill="#fff"/><rect x="30" y="20" width="2" height="2" fill="#000080"/><rect x="0" y="22" width="2" height="2" fill="#000"/><rect x="2" y="22" width="2" height="2" fill="#8a8a9a"/><rect x="4" y="22" width="2" height="2" fill="#808000"/><rect x="6" y="22" width="2" height="2" fill="#8a8a9a"/><rect x="8" y="22" width="2" height="2" fill="#808000"/><rect x="10" y="22" width="2" height="2" fill="#8a8a9a"/><rect x="12" y="22" width="2" height="2" fill="#000080"/><rect x="14" y="22" width="2" height="2" fill="#fff"/><rect x="16" y="22" width="12" height="2" fill="#000"/><rect x="28" y="22" width="2" height="2" fill="#fff"/><rect x="30" y="22" width="2" height="2" fill="#000080"/><rect x="2" y="24" width="10" height="2" fill="#000"/><rect x="12" y="24" width="2" height="2" fill="#000080"/><rect x="14" y="24" width="16" height="2" fill="#fff"/><rect x="30" y="24" width="2" height="2" fill="#000080"/><rect x="12" y="26" width="20" height="2" fill="#000080"/></svg>
<svg style="left:478px;top:124px;overflow:visible" width="30" height="28"><rect x="14" y="0" width="2" height="2" fill="#000"/><rect x="18" y="0" width="2" height="2" fill="#000"/><rect x="12" y="2" width="2" height="2" fill="#000"/><rect x="24" y="2" width="2" height="2" fill="#000"/><rect x="2" y="4" width="2" height="2" fill="#000"/><rect x="26" y="4" width="2" height="2" fill="#000"/><rect x="4" y="6" width="2" height="2" fill="#000"/><rect x="28" y="6" width="2" height="2" fill="#000"/><rect x="2" y="8" width="2" height="2" fill="#000"/><rect x="6" y="8" width="2" height="2" fill="#000"/><rect x="4" y="10" width="2" height="2" fill="#000"/><rect x="28" y="10" width="2" height="2" fill="#000"/><rect x="2" y="12" width="2" height="2" fill="#000"/><rect x="6" y="12" width="2" height="2" fill="#000"/><rect x="28" y="14" width="2" height="2" fill="#000"/><rect x="26" y="16" width="2" height="2" fill="#000"/><rect x="24" y="18" width="2" height="2" fill="#000"/><rect x="22" y="20" width="2" height="2" fill="#000"/><rect x="2" y="24" width="2" height="2" fill="#000"/><rect x="6" y="24" width="2" height="2" fill="#000"/><rect x="10" y="24" width="2" height="2" fill="#000"/><rect x="14" y="24" width="2" height="2" fill="#000"/><rect x="0" y="26" width="2" height="2" fill="#000"/><rect x="4" y="26" width="2" height="2" fill="#000"/><rect x="8" y="26" width="2" height="2" fill="#000"/><rect x="12" y="26" width="2" height="2" fill="#000"/><rect x="16" y="26" width="2" height="2" fill="#000"/><rect x="20" y="26" width="2" height="2" fill="#000"/><rect x="24" y="26" width="2" height="2" fill="#000"/><rect x="28" y="26" width="2" height="2" fill="#000"/></svg>
<svg style="left:524px;top:124px;overflow:visible" width="30" height="28"><rect x="8" y="0" width="2" height="2" fill="#000"/><rect x="12" y="0" width="2" height="2" fill="#000"/><rect x="6" y="2" width="2" height="2" fill="#000"/><rect x="18" y="2" width="2" height="2" fill="#000"/><rect x="20" y="4" width="2" height="2" fill="#000"/><rect x="22" y="6" width="2" height="2" fill="#000"/><rect x="26" y="6" width="2" height="2" fill="#000"/><rect x="0" y="8" width="2" height="2" fill="#000"/><rect x="24" y="8" width="2" height="2" fill="#000"/><rect x="22" y="10" width="2" height="2" fill="#000"/><rect x="26" y="10" width="2" height="2" fill="#000"/><rect x="0" y="12" width="2" height="2" fill="#000"/><rect x="20" y="12" width="2" height="2" fill="#000"/><rect x="24" y="12" width="2" height="2" fill="#000"/><rect x="0" y="24" width="2" height="2" fill="#000"/><rect x="4" y="24" width="2" height="2" fill="#000"/><rect x="8" y="24" width="2" height="2" fill="#000"/><rect x="12" y="24" width="2" height="2" fill="#000"/><rect x="16" y="24" width="2" height="2" fill="#000"/><rect x="20" y="24" width="2" height="2" fill="#000"/><rect x="24" y="24" width="2" height="2" fill="#000"/><rect x="28" y="24" width="2" height="2" fill="#000"/><rect x="14" y="26" width="2" height="2" fill="#000"/><rect x="18" y="26" width="2" height="2" fill="#000"/><rect x="22" y="26" width="2" height="2" fill="#000"/><rect x="26" y="26" width="2" height="2" fill="#000"/></svg>
<svg style="left:576px;top:124px;overflow:visible" width="2" height="30"><line x1="1" y1="0" x2="1" y2="30" stroke="#000" stroke-width="2" stroke-dasharray="2 2"/></svg>
<svg style="left:598px;top:122px;overflow:visible" width="28" height="28"><rect x="6" y="0" width="2" height="2" fill="#dcecdc"/><rect x="10" y="0" width="2" height="2" fill="#80b080"/><rect x="14" y="0" width="2" height="2" fill="#80b080"/><rect x="18" y="0" width="2" height="2" fill="#a4d4a4"/><rect x="4" y="2" width="2" height="2" fill="#dcecdc"/><rect x="8" y="2" width="2" height="2" fill="#a4d4a4"/><rect x="12" y="2" width="2" height="2" fill="#a4d4a4"/><rect x="16" y="2" width="2" height="2" fill="#a4d4a4"/><rect x="20" y="2" width="2" height="2" fill="#2a8a2a"/><rect x="2" y="4" width="2" height="2" fill="#a4d4a4"/><rect x="6" y="4" width="2" height="2" fill="#a4d4a4"/><rect x="10" y="4" width="2" height="2" fill="#a4d4a4"/><rect x="14" y="4" width="2" height="2" fill="#5cb85c"/><rect x="18" y="4" width="2" height="2" fill="#a4d4a4"/><rect x="22" y="4" width="2" height="2" fill="#2a8a2a"/><rect x="0" y="6" width="2" height="2" fill="#dcecdc"/><rect x="4" y="6" width="2" height="2" fill="#a4d4a4"/><rect x="8" y="6" width="2" height="2" fill="#5cb85c"/><rect x="12" y="6" width="2" height="2" fill="#5cb85c"/><rect x="16" y="6" width="2" height="2" fill="#5cb85c"/><rect x="20" y="6" width="2" height="2" fill="#a4d4a4"/><rect x="24" y="6" width="2" height="2" fill="#2a8a2a"/><rect x="2" y="8" width="2" height="2" fill="#80b080"/><rect x="6" y="8" width="2" height="2" fill="#a4d4a4"/><rect x="10" y="8" width="2" height="2" fill="#5cb85c"/><rect x="18" y="8" width="2" height="2" fill="#5cb85c"/><rect x="22" y="8" width="2" height="2" fill="#a4d4a4"/><rect x="26" y="8" width="2" height="2" fill="#80b080"/><rect x="0" y="10" width="2" height="2" fill="#80b080"/><rect x="4" y="10" width="2" height="2" fill="#a4d4a4"/><rect x="8" y="10" width="2" height="2" fill="#5cb85c"/><rect x="16" y="10" width="2" height="2" fill="#2a8a2a"/><rect x="20" y="10" width="2" height="2" fill="#5cb85c"/><rect x="24" y="10" width="2" height="2" fill="#80b080"/><rect x="2" y="12" width="2" height="2" fill="#a4d4a4"/><rect x="6" y="12" width="2" height="2" fill="#5cb85c"/><rect x="22" y="12" width="2" height="2" fill="#5cb85c"/><rect x="26" y="12" width="2" height="2" fill="#0a6a0a"/><rect x="0" y="14" width="2" height="2" fill="#80b080"/><rect x="4" y="14" width="2" height="2" fill="#5cb85c"/><rect x="20" y="14" width="2" height="2" fill="#5cb85c"/><rect x="24" y="14" width="2" height="2" fill="#a4d4a4"/><rect x="2" y="16" width="2" height="2" fill="#a4d4a4"/><rect x="6" y="16" width="2" height="2" fill="#5cb85c"/><rect x="10" y="16" width="2" height="2" fill="#2a8a2a"/><rect x="18" y="16" width="2" height="2" fill="#5cb85c"/><rect x="22" y="16" width="2" height="2" fill="#a4d4a4"/><rect x="26" y="16" width="2" height="2" fill="#2a8a2a"/><rect x="0" y="18" width="2" height="2" fill="#a4d4a4"/><rect x="4" y="18" width="2" height="2" fill="#a4d4a4"/><rect x="8" y="18" width="2" height="2" fill="#5cb85c"/><rect x="16" y="18" width="2" height="2" fill="#5cb85c"/><rect x="20" y="18" width="2" height="2" fill="#5cb85c"/><rect x="24" y="18" width="2" height="2" fill="#0a6a0a"/><rect x="2" y="20" width="2" height="2" fill="#80b080"/><rect x="6" y="20" width="2" height="2" fill="#a4d4a4"/><rect x="10" y="20" width="2" height="2" fill="#5cb85c"/><rect x="14" y="20" width="2" height="2" fill="#5cb85c"/><rect x="18" y="20" width="2" height="2" fill="#5cb85c"/><rect x="22" y="20" width="2" height="2" fill="#2a8a2a"/><rect x="26" y="20" width="2" height="2" fill="#dcecdc"/><rect x="4" y="22" width="2" height="2" fill="#2a8a2a"/><rect x="8" y="22" width="2" height="2" fill="#a4d4a4"/><rect x="12" y="22" width="2" height="2" fill="#5cb85c"/><rect x="16" y="22" width="2" height="2" fill="#a4d4a4"/><rect x="20" y="22" width="2" height="2" fill="#2a8a2a"/><rect x="24" y="22" width="2" height="2" fill="#a4d4a4"/><rect x="6" y="24" width="2" height="2" fill="#2a8a2a"/><rect x="10" y="24" width="2" height="2" fill="#5cb85c"/><rect x="14" y="24" width="2" height="2" fill="#a4d4a4"/><rect x="18" y="24" width="2" height="2" fill="#0a6a0a"/><rect x="22" y="24" width="2" height="2" fill="#a4d4a4"/><rect x="8" y="26" width="2" height="2" fill="#80b080"/><rect x="12" y="26" width="2" height="2" fill="#0a6a0a"/><rect x="16" y="26" width="2" height="2" fill="#2a8a2a"/><rect x="20" y="26" width="2" height="2" fill="#dcecdc"/></svg>
<svg style="left:636px;top:138px;overflow:visible" width="10" height="6"><rect x="0" y="0" width="2" height="2"/><rect x="4" y="0" width="2" height="2"/><rect x="8" y="0" width="2" height="2"/><rect x="2" y="2" width="2" height="2"/><rect x="6" y="2" width="2" height="2"/><rect x="4" y="4" width="2" height="2"/></svg>
<svg style="left:662px;top:122px;overflow:visible" width="30" height="26"><rect x="6" y="0" width="6" height="2" fill="#000"/><rect x="18" y="0" width="6" height="2" fill="#000"/><rect x="6" y="2" width="2" height="2" fill="#000"/><rect x="8" y="2" width="2" height="2" fill="#fff"/><rect x="10" y="2" width="2" height="2" fill="#000"/><rect x="18" y="2" width="2" height="2" fill="#000"/><rect x="20" y="2" width="2" height="2" fill="#fff"/><rect x="22" y="2" width="2" height="2" fill="#000"/><rect x="6" y="4" width="6" height="2" fill="#000"/><rect x="18" y="4" width="6" height="2" fill="#000"/><rect x="4" y="6" width="10" height="2" fill="#000"/><rect x="16" y="6" width="10" height="2" fill="#000"/><rect x="4" y="8" width="2" height="2" fill="#000"/><rect x="6" y="8" width="2" height="2" fill="#fff"/><rect x="8" y="8" width="6" height="2" fill="#000"/><rect x="16" y="8" width="2" height="2" fill="#000"/><rect x="18" y="8" width="2" height="2" fill="#fff"/><rect x="20" y="8" width="6" height="2" fill="#000"/><rect x="2" y="10" width="26" height="2" fill="#000"/><rect x="0" y="12" width="4" height="2" fill="#000"/><rect x="4" y="12" width="2" height="2" fill="#fff"/><rect x="6" y="12" width="6" height="2" fill="#000"/><rect x="12" y="12" width="2" height="2" fill="#fff"/><rect x="14" y="12" width="4" height="2" fill="#000"/><rect x="18" y="12" width="2" height="2" fill="#fff"/><rect x="20" y="12" width="10" height="2" fill="#000"/><rect x="0" y="14" width="4" height="2" fill="#000"/><rect x="4" y="14" width="2" height="2" fill="#fff"/><rect x="6" y="14" width="6" height="2" fill="#000"/><rect x="12" y="14" width="2" height="2" fill="#fff"/><rect x="14" y="14" width="4" height="2" fill="#000"/><rect x="18" y="14" width="2" height="2" fill="#fff"/><rect x="20" y="14" width="10" height="2" fill="#000"/><rect x="0" y="16" width="4" height="2" fill="#000"/><rect x="4" y="16" width="2" height="2" fill="#fff"/><rect x="6" y="16" width="12" height="2" fill="#000"/><rect x="18" y="16" width="2" height="2" fill="#fff"/><rect x="20" y="16" width="10" height="2" fill="#000"/><rect x="0" y="18" width="14" height="2" fill="#000"/><rect x="14" y="18" width="2" height="2" fill="#fff"/><rect x="16" y="18" width="14" height="2" fill="#000"/><rect x="0" y="20" width="2" height="2" fill="#000"/><rect x="2" y="20" width="2" height="2" fill="#fff"/><rect x="4" y="20" width="6" height="2" fill="#000"/><rect x="20" y="20" width="2" height="2" fill="#000"/><rect x="22" y="20" width="2" height="2" fill="#fff"/><rect x="24" y="20" width="6" height="2" fill="#000"/><rect x="0" y="22" width="2" height="2" fill="#000"/><rect x="2" y="22" width="2" height="2" fill="#fff"/><rect x="4" y="22" width="6" height="2" fill="#000"/><rect x="20" y="22" width="2" height="2" fill="#000"/><rect x="22" y="22" width="2" height="2" fill="#fff"/><rect x="24" y="22" width="6" height="2" fill="#000"/><rect x="0" y="24" width="10" height="2" fill="#000"/><rect x="20" y="24" width="10" height="2" fill="#000"/></svg>
<svg style="left:710px;top:120px;overflow:visible" width="28" height="32"><rect x="2" y="0" width="2" height="2" fill="#000"/><rect x="6" y="0" width="2" height="2" fill="#000"/><rect x="10" y="0" width="2" height="2" fill="#000"/><rect x="0" y="2" width="2" height="2" fill="#000"/><rect x="12" y="2" width="2" height="2" fill="#000"/><rect x="6" y="4" width="2" height="2" fill="#000"/><rect x="0" y="6" width="2" height="2" fill="#000"/><rect x="4" y="6" width="2" height="2" fill="#000"/><rect x="8" y="6" width="2" height="2" fill="#000"/><rect x="12" y="6" width="2" height="2" fill="#000"/><rect x="16" y="6" width="2" height="2" fill="#000"/><rect x="20" y="6" width="2" height="2" fill="#000"/><rect x="24" y="6" width="2" height="2" fill="#000"/><rect x="6" y="8" width="2" height="2" fill="#000"/><rect x="0" y="10" width="2" height="2" fill="#000"/><rect x="12" y="10" width="2" height="2" fill="#000"/><rect x="2" y="12" width="2" height="2" fill="#000"/><rect x="6" y="12" width="2" height="2" fill="#000"/><rect x="10" y="12" width="2" height="2" fill="#000"/><rect x="0" y="18" width="2" height="2" fill="#000"/><rect x="4" y="18" width="2" height="2" fill="#000"/><rect x="8" y="18" width="2" height="2" fill="#000"/><rect x="12" y="18" width="2" height="2" fill="#000"/><rect x="0" y="22" width="2" height="2" fill="#000"/><rect x="12" y="22" width="2" height="2" fill="#000"/><rect x="6" y="24" width="2" height="2" fill="#000"/><rect x="14" y="24" width="2" height="2" fill="#000"/><rect x="18" y="24" width="2" height="2" fill="#000"/><rect x="22" y="24" width="2" height="2" fill="#000"/><rect x="26" y="24" width="2" height="2" fill="#000"/><rect x="0" y="26" width="2" height="2" fill="#000"/><rect x="12" y="26" width="2" height="2" fill="#000"/><rect x="0" y="30" width="2" height="2" fill="#000"/><rect x="4" y="30" width="2" height="2" fill="#000"/><rect x="8" y="30" width="2" height="2" fill="#000"/><rect x="12" y="30" width="2" height="2" fill="#000"/></svg>
<svg style="left:758px;top:122px;overflow:visible" width="30" height="30"><rect x="0" y="0" width="2" height="2" fill="#c8c8b4"/><rect x="2" y="0" width="28" height="2" fill="#0000ff"/><rect x="0" y="2" width="2" height="2" fill="#c8c8b4"/><rect x="2" y="2" width="28" height="2" fill="#0000ff"/><rect x="0" y="4" width="30" height="2" fill="#c8c8b4"/><rect x="2" y="10" width="2" height="2" fill="#c8c8c8"/><rect x="4" y="10" width="6" height="2" fill="#000"/><rect x="20" y="10" width="2" height="2" fill="#c8c8c8"/><rect x="22" y="10" width="6" height="2" fill="#000"/><rect x="2" y="12" width="2" height="2" fill="#c8c8c8"/><rect x="4" y="12" width="6" height="2" fill="#000"/><rect x="20" y="12" width="2" height="2" fill="#c8c8c8"/><rect x="22" y="12" width="6" height="2" fill="#000"/><rect x="2" y="14" width="2" height="2" fill="#c8c8c8"/><rect x="4" y="14" width="8" height="2" fill="#000"/><rect x="18" y="14" width="2" height="2" fill="#c8c8c8"/><rect x="20" y="14" width="8" height="2" fill="#000"/><rect x="2" y="16" width="2" height="2" fill="#c8c8c8"/><rect x="4" y="16" width="8" height="2" fill="#000"/><rect x="18" y="16" width="2" height="2" fill="#c8c8c8"/><rect x="20" y="16" width="8" height="2" fill="#000"/><rect x="2" y="18" width="2" height="2" fill="#c8c8c8"/><rect x="4" y="18" width="10" height="2" fill="#000"/><rect x="16" y="18" width="2" height="2" fill="#c8c8c8"/><rect x="18" y="18" width="10" height="2" fill="#000"/><rect x="2" y="20" width="2" height="2" fill="#c8c8c8"/><rect x="4" y="20" width="4" height="2" fill="#000"/><rect x="10" y="20" width="12" height="2" fill="#000"/><rect x="22" y="20" width="2" height="2" fill="#c8c8c8"/><rect x="24" y="20" width="4" height="2" fill="#000"/><rect x="2" y="22" width="2" height="2" fill="#c8c8c8"/><rect x="4" y="22" width="4" height="2" fill="#000"/><rect x="10" y="22" width="2" height="2" fill="#c8c8c8"/><rect x="12" y="22" width="8" height="2" fill="#000"/><rect x="20" y="22" width="4" height="2" fill="#c8c8c8"/><rect x="24" y="22" width="4" height="2" fill="#000"/><rect x="2" y="24" width="2" height="2" fill="#c8c8c8"/><rect x="4" y="24" width="4" height="2" fill="#000"/><rect x="12" y="24" width="2" height="2" fill="#c8c8c8"/><rect x="14" y="24" width="4" height="2" fill="#000"/><rect x="18" y="24" width="2" height="2" fill="#c8c8c8"/><rect x="22" y="24" width="2" height="2" fill="#c8c8c8"/><rect x="24" y="24" width="4" height="2" fill="#000"/><rect x="2" y="26" width="2" height="2" fill="#c8c8c8"/><rect x="4" y="26" width="4" height="2" fill="#000"/><rect x="14" y="26" width="4" height="2" fill="#c8c8c8"/><rect x="22" y="26" width="2" height="2" fill="#c8c8c8"/><rect x="24" y="26" width="4" height="2" fill="#000"/><rect x="2" y="28" width="6" height="2" fill="#c8c8c8"/><rect x="22" y="28" width="6" height="2" fill="#c8c8c8"/></svg>
<svg style="left:844px;top:120px;overflow:visible" width="30" height="32"><rect x="12" y="0" width="2" height="2" fill="#000080"/><rect x="14" y="2" width="2" height="2" fill="#000080"/><rect x="18" y="2" width="2" height="2" fill="#000"/><rect x="12" y="4" width="2" height="2" fill="#000080"/><rect x="16" y="4" width="2" height="2" fill="#777"/><rect x="10" y="6" width="2" height="2" fill="#000"/><rect x="14" y="6" width="2" height="2" fill="#000080"/><rect x="8" y="8" width="2" height="2" fill="#777"/><rect x="12" y="8" width="2" height="2" fill="#000080"/><rect x="2" y="10" width="2" height="2" fill="#000"/><rect x="10" y="10" width="2" height="2" fill="#000080"/><rect x="14" y="10" width="2" height="2" fill="#000080"/><rect x="18" y="10" width="2" height="2" fill="#000080"/><rect x="0" y="12" width="2" height="2" fill="#000"/><rect x="12" y="12" width="2" height="2" fill="#000080"/><rect x="16" y="12" width="2" height="2" fill="#000080"/><rect x="24" y="12" width="2" height="2" fill="#000"/><rect x="2" y="14" width="2" height="2" fill="#000"/><rect x="14" y="14" width="2" height="2" fill="#000080"/><rect x="22" y="14" width="2" height="2" fill="#000"/><rect x="26" y="14" width="2" height="2" fill="#000"/><rect x="4" y="16" width="2" height="2" fill="#000"/><rect x="16" y="16" width="2" height="2" fill="#000"/><rect x="28" y="16" width="2" height="2" fill="#000"/><rect x="6" y="18" width="2" height="2" fill="#000"/><rect x="14" y="18" width="2" height="2" fill="#000"/><rect x="26" y="18" width="2" height="2" fill="#000"/><rect x="8" y="20" width="2" height="2" fill="#000"/><rect x="20" y="20" width="2" height="2" fill="#000"/><rect x="28" y="20" width="2" height="2" fill="#000"/><rect x="18" y="22" width="2" height="2" fill="#000"/><rect x="26" y="22" width="2" height="2" fill="#000"/><rect x="12" y="24" width="2" height="2" fill="#000"/><rect x="20" y="24" width="2" height="2" fill="#000"/><rect x="10" y="26" width="2" height="2" fill="#000"/><rect x="18" y="26" width="2" height="2" fill="#000"/><rect x="12" y="28" width="2" height="2" fill="#000"/><rect x="10" y="30" width="2" height="2" fill="#000"/></svg>
<svg style="left:890px;top:120px;overflow:visible" width="32" height="30"><rect x="2" y="0" width="2" height="2" fill="#000080"/><rect x="12" y="0" width="2" height="2" fill="#000080"/><rect x="18" y="0" width="2" height="2" fill="#000080"/><rect x="28" y="0" width="2" height="2" fill="#000080"/><rect x="6" y="2" width="4" height="2" fill="#000080"/><rect x="10" y="2" width="10" height="2" fill="#0078f8"/><rect x="20" y="2" width="2" height="2" fill="#a08850"/><rect x="22" y="2" width="4" height="2" fill="#000080"/><rect x="2" y="4" width="2" height="2" fill="#000080"/><rect x="6" y="4" width="6" height="2" fill="#0078f8"/><rect x="12" y="4" width="4" height="2" fill="#000"/><rect x="16" y="4" width="6" height="2" fill="#0078f8"/><rect x="22" y="4" width="2" height="2" fill="#a08850"/><rect x="28" y="4" width="2" height="2" fill="#000080"/><rect x="6" y="6" width="6" height="2" fill="#0078f8"/><rect x="18" y="6" width="6" height="2" fill="#0078f8"/><rect x="24" y="6" width="2" height="2" fill="#a08850"/><rect x="0" y="8" width="2" height="2" fill="#000"/><rect x="4" y="8" width="2" height="2" fill="#000080"/><rect x="6" y="8" width="6" height="2" fill="#0078f8"/><rect x="12" y="8" width="2" height="2" fill="#000"/><rect x="18" y="8" width="6" height="2" fill="#0078f8"/><rect x="24" y="8" width="2" height="2" fill="#000"/><rect x="26" y="8" width="2" height="2" fill="#000080"/><rect x="30" y="8" width="2" height="2" fill="#000"/><rect x="0" y="10" width="2" height="2" fill="#000"/><rect x="6" y="10" width="2" height="2" fill="#000080"/><rect x="8" y="10" width="6" height="2" fill="#000"/><rect x="18" y="10" width="6" height="2" fill="#0078f8"/><rect x="24" y="10" width="2" height="2" fill="#000"/><rect x="30" y="10" width="2" height="2" fill="#000"/><rect x="0" y="12" width="2" height="2" fill="#000"/><rect x="8" y="12" width="2" height="2" fill="#000080"/><rect x="16" y="12" width="6" height="2" fill="#0078f8"/><rect x="22" y="12" width="4" height="2" fill="#000"/><rect x="30" y="12" width="2" height="2" fill="#000"/><rect x="0" y="14" width="2" height="2" fill="#000"/><rect x="16" y="14" width="2" height="2" fill="#0078f8"/><rect x="18" y="14" width="6" height="2" fill="#000"/><rect x="30" y="14" width="2" height="2" fill="#000"/><rect x="0" y="16" width="2" height="2" fill="#000"/><rect x="14" y="16" width="4" height="2" fill="#0078f8"/><rect x="18" y="16" width="2" height="2" fill="#000"/><rect x="30" y="16" width="2" height="2" fill="#000"/><rect x="0" y="18" width="4" height="2" fill="#000"/><rect x="6" y="18" width="2" height="2" fill="#000"/><rect x="10" y="18" width="2" height="2" fill="#000"/><rect x="14" y="18" width="2" height="2" fill="#0078f8"/><rect x="16" y="18" width="4" height="2" fill="#000"/><rect x="22" y="18" width="2" height="2" fill="#000"/><rect x="26" y="18" width="2" height="2" fill="#000"/><rect x="30" y="18" width="2" height="2" fill="#000"/><rect x="0" y="20" width="2" height="2" fill="#000"/><rect x="14" y="20" width="2" height="2" fill="#0078f8"/><rect x="16" y="20" width="2" height="2" fill="#000"/><rect x="30" y="20" width="2" height="2" fill="#000"/><rect x="0" y="22" width="4" height="2" fill="#000"/><rect x="6" y="22" width="2" height="2" fill="#000"/><rect x="10" y="22" width="2" height="2" fill="#000"/><rect x="14" y="22" width="2" height="2" fill="#000"/><rect x="16" y="22" width="2" height="2" fill="#fff"/><rect x="18" y="22" width="2" height="2" fill="#000"/><rect x="22" y="22" width="2" height="2" fill="#000"/><rect x="26" y="22" width="2" height="2" fill="#000"/><rect x="30" y="22" width="2" height="2" fill="#000"/><rect x="0" y="24" width="2" height="2" fill="#000"/><rect x="14" y="24" width="4" height="2" fill="#0078f8"/><rect x="18" y="24" width="2" height="2" fill="#000"/><rect x="30" y="24" width="2" height="2" fill="#000"/><rect x="0" y="26" width="14" height="2" fill="#000"/><rect x="14" y="26" width="4" height="2" fill="#0078f8"/><rect x="18" y="26" width="14" height="2" fill="#000"/><rect x="14" y="28" width="6" height="2" fill="#000"/></svg>
<svg style="left:938px;top:120px;overflow:visible" width="30" height="28"><rect x="2" y="0" width="2" height="2" fill="#000080"/><rect x="10" y="0" width="2" height="2" fill="#000080"/><rect x="18" y="0" width="2" height="2" fill="#000080"/><rect x="26" y="0" width="2" height="2" fill="#000080"/><rect x="6" y="2" width="2" height="2" fill="#000080"/><rect x="14" y="2" width="2" height="2" fill="#000080"/><rect x="22" y="2" width="2" height="2" fill="#000080"/><rect x="2" y="4" width="2" height="2" fill="#000080"/><rect x="10" y="4" width="2" height="2" fill="#000080"/><rect x="18" y="4" width="2" height="2" fill="#000080"/><rect x="26" y="4" width="2" height="2" fill="#000080"/><rect x="8" y="6" width="2" height="2" fill="#000080"/><rect x="14" y="6" width="2" height="2" fill="#000080"/><rect x="20" y="6" width="2" height="2" fill="#000080"/><rect x="0" y="8" width="2" height="2" fill="#000"/><rect x="8" y="8" width="2" height="2" fill="#000080"/><rect x="20" y="8" width="2" height="2" fill="#000080"/><rect x="28" y="8" width="2" height="2" fill="#000"/><rect x="0" y="10" width="2" height="2" fill="#000"/><rect x="4" y="10" width="10" height="2" fill="#000080"/><rect x="16" y="10" width="10" height="2" fill="#000080"/><rect x="28" y="10" width="2" height="2" fill="#000"/><rect x="0" y="12" width="2" height="2" fill="#000"/><rect x="6" y="12" width="6" height="2" fill="#000080"/><rect x="18" y="12" width="6" height="2" fill="#000080"/><rect x="28" y="12" width="2" height="2" fill="#000"/><rect x="0" y="14" width="2" height="2" fill="#000"/><rect x="8" y="14" width="2" height="2" fill="#000080"/><rect x="20" y="14" width="2" height="2" fill="#000080"/><rect x="28" y="14" width="2" height="2" fill="#000"/><rect x="0" y="16" width="2" height="2" fill="#000"/><rect x="28" y="16" width="2" height="2" fill="#000"/><rect x="0" y="18" width="2" height="2" fill="#000"/><rect x="4" y="18" width="2" height="2" fill="#000"/><rect x="8" y="18" width="2" height="2" fill="#000"/><rect x="12" y="18" width="2" height="2" fill="#000"/><rect x="16" y="18" width="2" height="2" fill="#000"/><rect x="20" y="18" width="2" height="2" fill="#000"/><rect x="24" y="18" width="2" height="2" fill="#000"/><rect x="28" y="18" width="2" height="2" fill="#000"/><rect x="0" y="20" width="2" height="2" fill="#000"/><rect x="28" y="20" width="2" height="2" fill="#000"/><rect x="0" y="22" width="2" height="2" fill="#000"/><rect x="4" y="22" width="2" height="2" fill="#000"/><rect x="8" y="22" width="2" height="2" fill="#000"/><rect x="12" y="22" width="2" height="2" fill="#000"/><rect x="16" y="22" width="2" height="2" fill="#000"/><rect x="20" y="22" width="2" height="2" fill="#000"/><rect x="24" y="22" width="2" height="2" fill="#000"/><rect x="28" y="22" width="2" height="2" fill="#000"/><rect x="0" y="24" width="2" height="2" fill="#000"/><rect x="28" y="24" width="2" height="2" fill="#000"/><rect x="0" y="26" width="30" height="2" fill="#000"/></svg>
<svg style="left:986px;top:120px;overflow:visible" width="32" height="32"><rect x="2" y="0" width="6" height="2" fill="#7070a8"/><rect x="12" y="0" width="14" height="2" fill="#000"/><rect x="10" y="2" width="2" height="2" fill="#000"/><rect x="12" y="2" width="14" height="2" fill="#f4fcfc"/><rect x="26" y="2" width="2" height="2" fill="#000"/><rect x="2" y="4" width="6" height="2" fill="#7070a8"/><rect x="10" y="4" width="2" height="2" fill="#000"/><rect x="12" y="4" width="4" height="2" fill="#f4fcfc"/><rect x="16" y="4" width="2" height="2" fill="#7070a8"/><rect x="18" y="4" width="2" height="2" fill="#000030"/><rect x="20" y="4" width="2" height="2" fill="#7070a8"/><rect x="22" y="4" width="2" height="2" fill="#000030"/><rect x="24" y="4" width="2" height="2" fill="#7070a8"/><rect x="26" y="4" width="2" height="2" fill="#f4fcfc"/><rect x="28" y="4" width="2" height="2" fill="#000"/><rect x="10" y="6" width="2" height="2" fill="#000"/><rect x="12" y="6" width="18" height="2" fill="#f4fcfc"/><rect x="30" y="6" width="2" height="2" fill="#000"/><rect x="0" y="8" width="6" height="2" fill="#7070a8"/><rect x="8" y="8" width="2" height="2" fill="#000"/><rect x="10" y="8" width="4" height="2" fill="#f4fcfc"/><rect x="14" y="8" width="2" height="2" fill="#7070a8"/><rect x="16" y="8" width="2" height="2" fill="#000030"/><rect x="18" y="8" width="2" height="2" fill="#7070a8"/><rect x="20" y="8" width="2" height="2" fill="#000030"/><rect x="22" y="8" width="2" height="2" fill="#7070a8"/><rect x="24" y="8" width="6" height="2" fill="#f4fcfc"/><rect x="30" y="8" width="2" height="2" fill="#000"/><rect x="8" y="10" width="2" height="2" fill="#000"/><rect x="10" y="10" width="20" height="2" fill="#f4fcfc"/><rect x="30" y="10" width="2" height="2" fill="#000"/><rect x="0" y="12" width="4" height="2" fill="#7070a8"/><rect x="8" y="12" width="2" height="2" fill="#000"/><rect x="10" y="12" width="4" height="2" fill="#f4fcfc"/><rect x="14" y="12" width="2" height="2" fill="#7070a8"/><rect x="16" y="12" width="2" height="2" fill="#000030"/><rect x="18" y="12" width="2" height="2" fill="#7070a8"/><rect x="20" y="12" width="2" height="2" fill="#000030"/><rect x="22" y="12" width="2" height="2" fill="#7070a8"/><rect x="24" y="12" width="4" height="2" fill="#f4fcfc"/><rect x="28" y="12" width="2" height="2" fill="#000"/><rect x="6" y="14" width="2" height="2" fill="#000"/><rect x="8" y="14" width="20" height="2" fill="#f4fcfc"/><rect x="28" y="14" width="2" height="2" fill="#000"/><rect x="0" y="16" width="4" height="2" fill="#7070a8"/><rect x="6" y="16" width="2" height="2" fill="#000"/><rect x="8" y="16" width="4" height="2" fill="#f4fcfc"/><rect x="12" y="16" width="2" height="2" fill="#7070a8"/><rect x="14" y="16" width="2" height="2" fill="#000030"/><rect x="16" y="16" width="2" height="2" fill="#7070a8"/><rect x="18" y="16" width="2" height="2" fill="#000030"/><rect x="20" y="16" width="2" height="2" fill="#7070a8"/><rect x="22" y="16" width="6" height="2" fill="#f4fcfc"/><rect x="28" y="16" width="2" height="2" fill="#000"/><rect x="4" y="18" width="6" height="2" fill="#000"/><rect x="10" y="18" width="16" height="2" fill="#f4fcfc"/><rect x="26" y="18" width="2" height="2" fill="#000"/><rect x="2" y="20" width="4" height="2" fill="#000"/><rect x="6" y="20" width="2" height="2" fill="#e01030"/><rect x="8" y="20" width="4" height="2" fill="#000"/><rect x="12" y="20" width="2" height="2" fill="#7070a8"/><rect x="14" y="20" width="2" height="2" fill="#000030"/><rect x="16" y="20" width="2" height="2" fill="#7070a8"/><rect x="18" y="20" width="2" height="2" fill="#000030"/><rect x="20" y="20" width="2" height="2" fill="#7070a8"/><rect x="22" y="20" width="4" height="2" fill="#f4fcfc"/><rect x="26" y="20" width="2" height="2" fill="#000"/><rect x="0" y="22" width="4" height="2" fill="#000"/><rect x="4" y="22" width="6" height="2" fill="#e01030"/><rect x="10" y="22" width="4" height="2" fill="#000"/><rect x="14" y="22" width="10" height="2" fill="#f4fcfc"/><rect x="24" y="22" width="6" height="2" fill="#000"/><rect x="0" y="24" width="2" height="2" fill="#000"/><rect x="2" y="24" width="4" height="2" fill="#e01030"/><rect x="6" y="24" width="2" height="2" fill="#000"/><rect x="8" y="24" width="4" height="2" fill="#e01030"/><rect x="12" y="24" width="14" height="2" fill="#000"/><rect x="26" y="24" width="2" height="2" fill="#e01030"/><rect x="28" y="24" width="4" height="2" fill="#000"/><rect x="0" y="26" width="4" height="2" fill="#000"/><rect x="4" y="26" width="6" height="2" fill="#e01030"/><rect x="10" y="26" width="4" height="2" fill="#000"/><rect x="22" y="26" width="2" height="2" fill="#000"/><rect x="24" y="26" width="6" height="2" fill="#e01030"/><rect x="30" y="26" width="2" height="2" fill="#000"/><rect x="2" y="28" width="4" height="2" fill="#000"/><rect x="6" y="28" width="2" height="2" fill="#e01030"/><rect x="8" y="28" width="4" height="2" fill="#000"/><rect x="22" y="28" width="4" height="2" fill="#000"/><rect x="26" y="28" width="2" height="2" fill="#e01030"/><rect x="28" y="28" width="4" height="2" fill="#000"/><rect x="4" y="30" width="6" height="2" fill="#000"/><rect x="24" y="30" width="6" height="2" fill="#000"/></svg>
<svg style="left:1034px;top:120px;overflow:visible" width="32" height="30"><rect x="0" y="0" width="10" height="2" fill="#888"/><rect x="10" y="0" width="4" height="2" fill="#880000"/><rect x="14" y="0" width="8" height="2" fill="#888"/><rect x="26" y="0" width="4" height="2" fill="#880000"/><rect x="0" y="2" width="2" height="2" fill="#888"/><rect x="2" y="2" width="8" height="2" fill="#fff"/><rect x="10" y="2" width="2" height="2" fill="#7a9a9a"/><rect x="12" y="2" width="6" height="2" fill="#880000"/><rect x="18" y="2" width="2" height="2" fill="#fff"/><rect x="20" y="2" width="2" height="2" fill="#888"/><rect x="22" y="2" width="2" height="2" fill="#7a9a9a"/><rect x="24" y="2" width="4" height="2" fill="#880000"/><rect x="28" y="2" width="4" height="2" fill="#7a9a9a"/><rect x="0" y="4" width="2" height="2" fill="#888"/><rect x="2" y="4" width="10" height="2" fill="#fff"/><rect x="12" y="4" width="2" height="2" fill="#7a9a9a"/><rect x="14" y="4" width="6" height="2" fill="#880000"/><rect x="20" y="4" width="2" height="2" fill="#7a9a9a"/><rect x="22" y="4" width="4" height="2" fill="#880000"/><rect x="26" y="4" width="4" height="2" fill="#7a9a9a"/><rect x="0" y="6" width="2" height="2" fill="#888"/><rect x="2" y="6" width="2" height="2" fill="#fff"/><rect x="4" y="6" width="8" height="2" fill="#000"/><rect x="12" y="6" width="2" height="2" fill="#fff"/><rect x="14" y="6" width="2" height="2" fill="#7a9a9a"/><rect x="16" y="6" width="8" height="2" fill="#880000"/><rect x="24" y="6" width="4" height="2" fill="#7a9a9a"/><rect x="0" y="8" width="2" height="2" fill="#888"/><rect x="2" y="8" width="14" height="2" fill="#fff"/><rect x="16" y="8" width="2" height="2" fill="#7a9a9a"/><rect x="18" y="8" width="6" height="2" fill="#880000"/><rect x="24" y="8" width="2" height="2" fill="#7a9a9a"/><rect x="26" y="8" width="2" height="2" fill="#000080"/><rect x="0" y="10" width="2" height="2" fill="#888"/><rect x="2" y="10" width="4" height="2" fill="#fff"/><rect x="6" y="10" width="10" height="2" fill="#000"/><rect x="16" y="10" width="10" height="2" fill="#880000"/><rect x="26" y="10" width="2" height="2" fill="#000080"/><rect x="0" y="12" width="2" height="2" fill="#888"/><rect x="2" y="12" width="12" height="2" fill="#fff"/><rect x="14" y="12" width="2" height="2" fill="#7a9a9a"/><rect x="16" y="12" width="4" height="2" fill="#880000"/><rect x="20" y="12" width="4" height="2" fill="#7a9a9a"/><rect x="24" y="12" width="4" height="2" fill="#880000"/><rect x="0" y="14" width="2" height="2" fill="#888"/><rect x="2" y="14" width="4" height="2" fill="#fff"/><rect x="6" y="14" width="8" height="2" fill="#000"/><rect x="14" y="14" width="4" height="2" fill="#880000"/><rect x="18" y="14" width="2" height="2" fill="#7a9a9a"/><rect x="20" y="14" width="2" height="2" fill="#888"/><rect x="22" y="14" width="2" height="2" fill="#fff"/><rect x="24" y="14" width="4" height="2" fill="#880000"/><rect x="28" y="14" width="2" height="2" fill="#7a9a9a"/><rect x="0" y="16" width="2" height="2" fill="#888"/><rect x="2" y="16" width="10" height="2" fill="#fff"/><rect x="12" y="16" width="2" height="2" fill="#7a9a9a"/><rect x="14" y="16" width="2" height="2" fill="#880000"/><rect x="16" y="16" width="2" height="2" fill="#7a9a9a"/><rect x="18" y="16" width="2" height="2" fill="#fff"/><rect x="20" y="16" width="2" height="2" fill="#888"/><rect x="22" y="16" width="4" height="2" fill="#fff"/><rect x="26" y="16" width="2" height="2" fill="#000080"/><rect x="28" y="16" width="2" height="2" fill="#880000"/><rect x="0" y="18" width="2" height="2" fill="#888"/><rect x="2" y="18" width="6" height="2" fill="#fff"/><rect x="8" y="18" width="4" height="2" fill="#000"/><rect x="12" y="18" width="4" height="2" fill="#880000"/><rect x="16" y="18" width="2" height="2" fill="#7a9a9a"/><rect x="18" y="18" width="2" height="2" fill="#fff"/><rect x="20" y="18" width="2" height="2" fill="#888"/><rect x="22" y="18" width="4" height="2" fill="#fff"/><rect x="26" y="18" width="2" height="2" fill="#000080"/><rect x="28" y="18" width="2" height="2" fill="#880000"/><rect x="30" y="18" width="2" height="2" fill="#7a9a9a"/><rect x="0" y="20" width="2" height="2" fill="#888"/><rect x="2" y="20" width="8" height="2" fill="#fff"/><rect x="10" y="20" width="2" height="2" fill="#7a9a9a"/><rect x="12" y="20" width="2" height="2" fill="#880000"/><rect x="14" y="20" width="2" height="2" fill="#7a9a9a"/><rect x="16" y="20" width="4" height="2" fill="#fff"/><rect x="20" y="20" width="2" height="2" fill="#888"/><rect x="26" y="20" width="2" height="2" fill="#000080"/><rect x="0" y="22" width="2" height="2" fill="#888"/><rect x="2" y="22" width="4" height="2" fill="#fff"/><rect x="6" y="22" width="12" height="2" fill="#000"/><rect x="18" y="22" width="2" height="2" fill="#fff"/><rect x="20" y="22" width="2" height="2" fill="#888"/><rect x="22" y="22" width="10" height="2" fill="#000080"/><rect x="0" y="24" width="2" height="2" fill="#888"/><rect x="2" y="24" width="18" height="2" fill="#fff"/><rect x="20" y="24" width="2" height="2" fill="#888"/><rect x="24" y="24" width="6" height="2" fill="#000080"/><rect x="0" y="26" width="2" height="2" fill="#888"/><rect x="2" y="26" width="18" height="2" fill="#fff"/><rect x="20" y="26" width="2" height="2" fill="#888"/><rect x="26" y="26" width="2" height="2" fill="#000080"/><rect x="0" y="28" width="22" height="2" fill="#888"/><rect x="22" y="28" width="10" height="2" fill="#000080"/></svg>
<div style="left:44px;top:182px;width:36px;height:35px;box-sizing:border-box;border:2px solid;border-color:#e2e2e2 #9c9c9c #9c9c9c #e2e2e2"></div>
<svg style="left:48px;top:186px;overflow:visible" width="28" height="28"><rect x="2" y="0" width="14" height="2" fill="#004810"/><rect x="0" y="2" width="18" height="2" fill="#004810"/><rect x="0" y="4" width="4" height="2" fill="#004810"/><rect x="14" y="4" width="4" height="2" fill="#004810"/><rect x="0" y="6" width="4" height="2" fill="#004810"/><rect x="14" y="6" width="4" height="2" fill="#004810"/><rect x="0" y="8" width="4" height="2" fill="#004810"/><rect x="8" y="8" width="10" height="2" fill="#004810"/><rect x="0" y="10" width="4" height="2" fill="#004810"/><rect x="8" y="10" width="2" height="2" fill="#004810"/><rect x="12" y="10" width="14" height="2" fill="#004810"/><rect x="0" y="12" width="4" height="2" fill="#004810"/><rect x="8" y="12" width="4" height="2" fill="#004810"/><rect x="14" y="12" width="14" height="2" fill="#004810"/><rect x="0" y="14" width="14" height="2" fill="#004810"/><rect x="16" y="14" width="4" height="2" fill="#004810"/><rect x="24" y="14" width="4" height="2" fill="#004810"/><rect x="2" y="16" width="14" height="2" fill="#004810"/><rect x="18" y="16" width="2" height="2" fill="#004810"/><rect x="24" y="16" width="4" height="2" fill="#004810"/><rect x="10" y="18" width="10" height="2" fill="#004810"/><rect x="24" y="18" width="4" height="2" fill="#004810"/><rect x="10" y="20" width="4" height="2" fill="#004810"/><rect x="24" y="20" width="4" height="2" fill="#004810"/><rect x="10" y="22" width="4" height="2" fill="#004810"/><rect x="24" y="22" width="4" height="2" fill="#004810"/><rect x="10" y="24" width="18" height="2" fill="#004810"/><rect x="12" y="26" width="14" height="2" fill="#004810"/></svg>
<svg style="left:98px;top:184px;overflow:visible" width="24" height="32"><rect x="10" y="0" width="4" height="2" fill="#1e1e1e"/><rect x="8" y="2" width="2" height="2" fill="#1e1e1e"/><rect x="10" y="2" width="2" height="2" fill="#909090"/><rect x="12" y="2" width="2" height="2" fill="#4a4a4a"/><rect x="14" y="2" width="2" height="2" fill="#1e1e1e"/><rect x="6" y="4" width="2" height="2" fill="#1e1e1e"/><rect x="8" y="4" width="2" height="2" fill="#4a4a4a"/><rect x="10" y="4" width="2" height="2" fill="#909090"/><rect x="12" y="4" width="4" height="2" fill="#4a4a4a"/><rect x="16" y="4" width="2" height="2" fill="#1e1e1e"/><rect x="4" y="6" width="2" height="2" fill="#1e1e1e"/><rect x="6" y="6" width="4" height="2" fill="#4a4a4a"/><rect x="10" y="6" width="2" height="2" fill="#909090"/><rect x="12" y="6" width="6" height="2" fill="#4a4a4a"/><rect x="18" y="6" width="2" height="2" fill="#1e1e1e"/><rect x="2" y="8" width="2" height="2" fill="#1e1e1e"/><rect x="4" y="8" width="6" height="2" fill="#4a4a4a"/><rect x="10" y="8" width="2" height="2" fill="#909090"/><rect x="12" y="8" width="8" height="2" fill="#4a4a4a"/><rect x="20" y="8" width="2" height="2" fill="#1e1e1e"/><rect x="0" y="10" width="2" height="2" fill="#1e1e1e"/><rect x="2" y="10" width="20" height="2" fill="#4a4a4a"/><rect x="22" y="10" width="2" height="2" fill="#1e1e1e"/><rect x="0" y="12" width="6" height="2" fill="#1e1e1e"/><rect x="6" y="12" width="6" height="2" fill="#4a4a4a"/><rect x="12" y="12" width="12" height="2" fill="#1e1e1e"/><rect x="4" y="14" width="2" height="2" fill="#cccccc"/><rect x="6" y="14" width="6" height="2" fill="#4a4a4a"/><rect x="12" y="14" width="6" height="2" fill="#1e1e1e"/><rect x="18" y="14" width="2" height="2" fill="#cccccc"/><rect x="4" y="16" width="2" height="2" fill="#cccccc"/><rect x="6" y="16" width="6" height="2" fill="#4a4a4a"/><rect x="12" y="16" width="6" height="2" fill="#1e1e1e"/><rect x="18" y="16" width="2" height="2" fill="#cccccc"/><rect x="4" y="18" width="2" height="2" fill="#cccccc"/><rect x="6" y="18" width="6" height="2" fill="#4a4a4a"/><rect x="12" y="18" width="6" height="2" fill="#1e1e1e"/><rect x="18" y="18" width="2" height="2" fill="#cccccc"/><rect x="4" y="20" width="2" height="2" fill="#cccccc"/><rect x="6" y="20" width="6" height="2" fill="#2e2e2e"/><rect x="12" y="20" width="6" height="2" fill="#1e1e1e"/><rect x="18" y="20" width="2" height="2" fill="#cccccc"/><rect x="4" y="22" width="2" height="2" fill="#cccccc"/><rect x="6" y="22" width="6" height="2" fill="#2e2e2e"/><rect x="12" y="22" width="6" height="2" fill="#1e1e1e"/><rect x="18" y="22" width="2" height="2" fill="#cccccc"/><rect x="4" y="24" width="2" height="2" fill="#cccccc"/><rect x="6" y="24" width="6" height="2" fill="#2e2e2e"/><rect x="12" y="24" width="6" height="2" fill="#1e1e1e"/><rect x="18" y="24" width="2" height="2" fill="#cccccc"/><rect x="4" y="26" width="2" height="2" fill="#cccccc"/><rect x="6" y="26" width="6" height="2" fill="#2e2e2e"/><rect x="12" y="26" width="6" height="2" fill="#1e1e1e"/><rect x="18" y="26" width="2" height="2" fill="#cccccc"/><rect x="4" y="28" width="2" height="2" fill="#cccccc"/><rect x="6" y="28" width="6" height="2" fill="#2e2e2e"/><rect x="12" y="28" width="6" height="2" fill="#1e1e1e"/><rect x="18" y="28" width="2" height="2" fill="#cccccc"/><rect x="6" y="30" width="12" height="2" fill="#1e1e1e"/></svg>
<svg style="left:142px;top:188px;overflow:visible" width="32" height="24"><rect x="10" y="0" width="4" height="2" fill="#1a1a1a"/><rect x="8" y="2" width="2" height="2" fill="#1a1a1a"/><rect x="10" y="2" width="4" height="2" fill="#3c3c3c"/><rect x="6" y="4" width="2" height="2" fill="#1a1a1a"/><rect x="8" y="4" width="6" height="2" fill="#3c3c3c"/><rect x="14" y="4" width="18" height="2" fill="#c8c8c8"/><rect x="4" y="6" width="2" height="2" fill="#1a1a1a"/><rect x="6" y="6" width="26" height="2" fill="#3c3c3c"/><rect x="2" y="8" width="2" height="2" fill="#1a1a1a"/><rect x="4" y="8" width="6" height="2" fill="#7a7a7a"/><rect x="10" y="8" width="22" height="2" fill="#3c3c3c"/><rect x="0" y="10" width="2" height="2" fill="#1a1a1a"/><rect x="2" y="10" width="6" height="2" fill="#7a7a7a"/><rect x="8" y="10" width="24" height="2" fill="#3c3c3c"/><rect x="0" y="12" width="2" height="2" fill="#1a1a1a"/><rect x="2" y="12" width="30" height="2" fill="#1e1e1e"/><rect x="2" y="14" width="2" height="2" fill="#1a1a1a"/><rect x="4" y="14" width="28" height="2" fill="#1e1e1e"/><rect x="4" y="16" width="2" height="2" fill="#1a1a1a"/><rect x="6" y="16" width="26" height="2" fill="#1e1e1e"/><rect x="6" y="18" width="2" height="2" fill="#1a1a1a"/><rect x="8" y="18" width="6" height="2" fill="#1e1e1e"/><rect x="14" y="18" width="18" height="2" fill="#c8c8c8"/><rect x="8" y="20" width="2" height="2" fill="#1a1a1a"/><rect x="10" y="20" width="4" height="2" fill="#1e1e1e"/><rect x="10" y="22" width="4" height="2" fill="#1a1a1a"/></svg>
<svg style="left:190px;top:188px;overflow:visible" width="32" height="26"><rect x="18" y="0" width="2" height="2" fill="#000"/><rect x="20" y="2" width="2" height="2" fill="#666"/><rect x="2" y="4" width="2" height="2" fill="#bbb"/><rect x="6" y="4" width="2" height="2" fill="#bbb"/><rect x="10" y="4" width="2" height="2" fill="#bbb"/><rect x="14" y="4" width="2" height="2" fill="#bbb"/><rect x="18" y="4" width="2" height="2" fill="#000"/><rect x="22" y="4" width="2" height="2" fill="#666"/><rect x="0" y="6" width="2" height="2" fill="#000"/><rect x="4" y="6" width="2" height="2" fill="#000"/><rect x="8" y="6" width="2" height="2" fill="#000"/><rect x="12" y="6" width="2" height="2" fill="#000"/><rect x="16" y="6" width="2" height="2" fill="#000"/><rect x="20" y="6" width="2" height="2" fill="#666"/><rect x="24" y="6" width="2" height="2" fill="#bbb"/><rect x="2" y="8" width="2" height="2" fill="#000"/><rect x="6" y="8" width="2" height="2" fill="#000"/><rect x="10" y="8" width="2" height="2" fill="#000"/><rect x="14" y="8" width="2" height="2" fill="#000"/><rect x="18" y="8" width="2" height="2" fill="#666"/><rect x="22" y="8" width="2" height="2" fill="#666"/><rect x="26" y="8" width="2" height="2" fill="#bbb"/><rect x="0" y="10" width="2" height="2" fill="#000"/><rect x="4" y="10" width="2" height="2" fill="#000"/><rect x="8" y="10" width="2" height="2" fill="#000"/><rect x="12" y="10" width="2" height="2" fill="#000"/><rect x="16" y="10" width="2" height="2" fill="#666"/><rect x="20" y="10" width="2" height="2" fill="#666"/><rect x="24" y="10" width="2" height="2" fill="#666"/><rect x="28" y="10" width="2" height="2" fill="#bbb"/><rect x="2" y="12" width="2" height="2" fill="#000"/><rect x="6" y="12" width="2" height="2" fill="#000"/><rect x="10" y="12" width="2" height="2" fill="#000"/><rect x="14" y="12" width="2" height="2" fill="#000"/><rect x="18" y="12" width="2" height="2" fill="#000"/><rect x="22" y="12" width="2" height="2" fill="#000"/><rect x="26" y="12" width="2" height="2" fill="#666"/><rect x="30" y="12" width="2" height="2" fill="#666"/><rect x="0" y="14" width="2" height="2" fill="#000"/><rect x="4" y="14" width="2" height="2" fill="#000"/><rect x="8" y="14" width="2" height="2" fill="#000"/><rect x="12" y="14" width="2" height="2" fill="#000"/><rect x="16" y="14" width="2" height="2" fill="#000"/><rect x="20" y="14" width="2" height="2" fill="#000"/><rect x="24" y="14" width="2" height="2" fill="#000"/><rect x="28" y="14" width="2" height="2" fill="#666"/><rect x="2" y="16" width="2" height="2" fill="#000"/><rect x="6" y="16" width="2" height="2" fill="#000"/><rect x="10" y="16" width="2" height="2" fill="#000"/><rect x="14" y="16" width="2" height="2" fill="#000"/><rect x="18" y="16" width="2" height="2" fill="#000"/><rect x="22" y="16" width="2" height="2" fill="#000"/><rect x="26" y="16" width="2" height="2" fill="#666"/><rect x="0" y="18" width="2" height="2" fill="#bbb"/><rect x="4" y="18" width="2" height="2" fill="#bbb"/><rect x="8" y="18" width="2" height="2" fill="#bbb"/><rect x="12" y="18" width="2" height="2" fill="#bbb"/><rect x="16" y="18" width="2" height="2" fill="#bbb"/><rect x="20" y="18" width="2" height="2" fill="#000"/><rect x="24" y="18" width="2" height="2" fill="#666"/><rect x="18" y="20" width="2" height="2" fill="#000"/><rect x="22" y="20" width="2" height="2" fill="#666"/><rect x="20" y="22" width="2" height="2" fill="#666"/><rect x="18" y="24" width="2" height="2" fill="#bbb"/></svg>
<svg style="left:244px;top:188px;overflow:visible" width="2" height="30"><line x1="1" y1="0" x2="1" y2="30" stroke="#000" stroke-width="2" stroke-dasharray="2 2"/></svg>
<svg style="left:264px;top:184px;overflow:visible" width="32" height="30"><rect x="0" y="0" width="22" height="2" fill="#808080"/><rect x="0" y="2" width="2" height="2" fill="#808080"/><rect x="20" y="2" width="2" height="2" fill="#808080"/><rect x="22" y="2" width="10" height="2" fill="#000080"/><rect x="0" y="4" width="2" height="2" fill="#808080"/><rect x="20" y="4" width="2" height="2" fill="#808080"/><rect x="26" y="4" width="2" height="2" fill="#000080"/><rect x="0" y="6" width="2" height="2" fill="#808080"/><rect x="4" y="6" width="8" height="2" fill="#000"/><rect x="20" y="6" width="2" height="2" fill="#808080"/><rect x="24" y="6" width="6" height="2" fill="#000080"/><rect x="0" y="8" width="2" height="2" fill="#808080"/><rect x="20" y="8" width="2" height="2" fill="#808080"/><rect x="22" y="8" width="10" height="2" fill="#000080"/><rect x="0" y="10" width="2" height="2" fill="#808080"/><rect x="6" y="10" width="10" height="2" fill="#000"/><rect x="20" y="10" width="2" height="2" fill="#808080"/><rect x="26" y="10" width="2" height="2" fill="#000080"/><rect x="0" y="12" width="2" height="2" fill="#808080"/><rect x="20" y="12" width="2" height="2" fill="#808080"/><rect x="24" y="12" width="6" height="2" fill="#000080"/><rect x="0" y="14" width="2" height="2" fill="#808080"/><rect x="6" y="14" width="8" height="2" fill="#000"/><rect x="20" y="14" width="2" height="2" fill="#808080"/><rect x="22" y="14" width="10" height="2" fill="#000080"/><rect x="0" y="16" width="2" height="2" fill="#808080"/><rect x="20" y="16" width="2" height="2" fill="#808080"/><rect x="26" y="16" width="2" height="2" fill="#000080"/><rect x="0" y="18" width="2" height="2" fill="#808080"/><rect x="8" y="18" width="8" height="2" fill="#000"/><rect x="20" y="18" width="2" height="2" fill="#808080"/><rect x="26" y="18" width="2" height="2" fill="#000080"/><rect x="0" y="20" width="2" height="2" fill="#808080"/><rect x="20" y="20" width="2" height="2" fill="#808080"/><rect x="26" y="20" width="2" height="2" fill="#000080"/><rect x="0" y="22" width="2" height="2" fill="#808080"/><rect x="6" y="22" width="12" height="2" fill="#000"/><rect x="20" y="22" width="2" height="2" fill="#808080"/><rect x="26" y="22" width="2" height="2" fill="#000080"/><rect x="0" y="24" width="2" height="2" fill="#808080"/><rect x="20" y="24" width="2" height="2" fill="#808080"/><rect x="26" y="24" width="2" height="2" fill="#000080"/><rect x="0" y="26" width="2" height="2" fill="#808080"/><rect x="20" y="26" width="2" height="2" fill="#808080"/><rect x="26" y="26" width="2" height="2" fill="#000080"/><rect x="0" y="28" width="22" height="2" fill="#808080"/><rect x="26" y="28" width="2" height="2" fill="#000080"/></svg>
<div style="left:312px;top:182px;width:120px;height:36px;box-sizing:border-box;border:2px solid;border-color:#9c9c9c #e2e2e2 #e2e2e2 #9c9c9c;background:#fff"></div>
<div class="t" style="left:343.29px;top:187.58px;font:26px/26px 'Liberation Mono', monospace;color:#000;letter-spacing:0.000px;transform:scaleX(0.9096);transform-origin:0 0;">100 ps</div>
<div style="left:435px;top:182px;width:26px;height:18px;box-sizing:border-box;border:2px solid;border-color:#e2e2e2 #9c9c9c #9c9c9c #e2e2e2"></div>
<div style="left:435px;top:200px;width:26px;height:18px;box-sizing:border-box;border:2px solid;border-color:#e2e2e2 #9c9c9c #9c9c9c #e2e2e2"></div>
<svg style="left:441px;top:187px;overflow:visible" width="14" height="10"><path d="M0 10 L7 0 L14 10 Z" fill="#000"/></svg>
<svg style="left:441px;top:204px;overflow:visible" width="14" height="10"><path d="M0 0 L7 10 L14 0 Z" fill="#000"/></svg>
<svg style="left:478px;top:184px;overflow:visible" width="32" height="30"><rect x="0" y="0" width="22" height="2" fill="#808080"/><rect x="0" y="2" width="2" height="2" fill="#808080"/><rect x="20" y="2" width="2" height="2" fill="#808080"/><rect x="26" y="2" width="2" height="2" fill="#000080"/><rect x="0" y="4" width="2" height="2" fill="#808080"/><rect x="20" y="4" width="2" height="2" fill="#808080"/><rect x="26" y="4" width="2" height="2" fill="#000080"/><rect x="0" y="6" width="2" height="2" fill="#808080"/><rect x="4" y="6" width="8" height="2" fill="#000"/><rect x="20" y="6" width="2" height="2" fill="#808080"/><rect x="26" y="6" width="2" height="2" fill="#000080"/><rect x="0" y="8" width="2" height="2" fill="#808080"/><rect x="20" y="8" width="2" height="2" fill="#808080"/><rect x="26" y="8" width="2" height="2" fill="#000080"/><rect x="0" y="10" width="2" height="2" fill="#808080"/><rect x="6" y="10" width="10" height="2" fill="#000"/><rect x="20" y="10" width="2" height="2" fill="#808080"/><rect x="26" y="10" width="2" height="2" fill="#000080"/><rect x="0" y="12" width="2" height="2" fill="#808080"/><rect x="20" y="12" width="2" height="2" fill="#808080"/><rect x="26" y="12" width="2" height="2" fill="#000080"/><rect x="0" y="14" width="2" height="2" fill="#808080"/><rect x="6" y="14" width="8" height="2" fill="#000"/><rect x="20" y="14" width="2" height="2" fill="#808080"/><rect x="26" y="14" width="2" height="2" fill="#000080"/><rect x="0" y="16" width="2" height="2" fill="#808080"/><rect x="20" y="16" width="2" height="2" fill="#808080"/><rect x="26" y="16" width="2" height="2" fill="#000080"/><rect x="0" y="18" width="2" height="2" fill="#808080"/><rect x="8" y="18" width="8" height="2" fill="#000"/><rect x="20" y="18" width="2" height="2" fill="#808080"/><rect x="26" y="18" width="2" height="2" fill="#000080"/><rect x="0" y="20" width="2" height="2" fill="#808080"/><rect x="20" y="20" width="2" height="2" fill="#808080"/><rect x="26" y="20" width="2" height="2" fill="#000080"/><rect x="0" y="22" width="2" height="2" fill="#808080"/><rect x="6" y="22" width="12" height="2" fill="#000"/><rect x="20" y="22" width="2" height="2" fill="#808080"/><rect x="22" y="22" width="10" height="2" fill="#000080"/><rect x="0" y="24" width="2" height="2" fill="#808080"/><rect x="20" y="24" width="2" height="2" fill="#808080"/><rect x="24" y="24" width="6" height="2" fill="#000080"/><rect x="0" y="26" width="2" height="2" fill="#808080"/><rect x="20" y="26" width="2" height="2" fill="#808080"/><rect x="26" y="26" width="2" height="2" fill="#000080"/><rect x="0" y="28" width="22" height="2" fill="#808080"/><rect x="22" y="28" width="10" height="2" fill="#000080"/></svg>
<svg style="left:526px;top:184px;overflow:visible" width="32" height="30"><rect x="0" y="0" width="22" height="2" fill="#808080"/><rect x="0" y="2" width="2" height="2" fill="#808080"/><rect x="20" y="2" width="2" height="2" fill="#808080"/><rect x="26" y="2" width="2" height="2" fill="#f00000"/><rect x="0" y="4" width="2" height="2" fill="#808080"/><rect x="20" y="4" width="2" height="2" fill="#808080"/><rect x="24" y="4" width="2" height="2" fill="#f00000"/><rect x="28" y="4" width="2" height="2" fill="#f00000"/><rect x="0" y="6" width="2" height="2" fill="#808080"/><rect x="4" y="6" width="8" height="2" fill="#000"/><rect x="20" y="6" width="2" height="2" fill="#808080"/><rect x="22" y="6" width="2" height="2" fill="#f00000"/><rect x="30" y="6" width="2" height="2" fill="#f00000"/><rect x="0" y="8" width="2" height="2" fill="#808080"/><rect x="20" y="8" width="2" height="2" fill="#808080"/><rect x="24" y="8" width="2" height="2" fill="#f00000"/><rect x="28" y="8" width="2" height="2" fill="#f00000"/><rect x="0" y="10" width="2" height="2" fill="#808080"/><rect x="6" y="10" width="10" height="2" fill="#000"/><rect x="20" y="10" width="2" height="2" fill="#808080"/><rect x="26" y="10" width="2" height="2" fill="#f00000"/><rect x="0" y="12" width="2" height="2" fill="#808080"/><rect x="20" y="12" width="2" height="2" fill="#808080"/><rect x="26" y="12" width="2" height="2" fill="#000080"/><rect x="0" y="14" width="2" height="2" fill="#808080"/><rect x="6" y="14" width="8" height="2" fill="#000"/><rect x="20" y="14" width="2" height="2" fill="#808080"/><rect x="26" y="14" width="2" height="2" fill="#000080"/><rect x="0" y="16" width="2" height="2" fill="#808080"/><rect x="20" y="16" width="2" height="2" fill="#808080"/><rect x="26" y="16" width="2" height="2" fill="#000080"/><rect x="0" y="18" width="2" height="2" fill="#808080"/><rect x="8" y="18" width="8" height="2" fill="#000"/><rect x="20" y="18" width="2" height="2" fill="#808080"/><rect x="26" y="18" width="2" height="2" fill="#000080"/><rect x="0" y="20" width="2" height="2" fill="#808080"/><rect x="20" y="20" width="2" height="2" fill="#808080"/><rect x="26" y="20" width="2" height="2" fill="#000080"/><rect x="0" y="22" width="2" height="2" fill="#808080"/><rect x="6" y="22" width="12" height="2" fill="#000"/><rect x="20" y="22" width="2" height="2" fill="#808080"/><rect x="22" y="22" width="10" height="2" fill="#000080"/><rect x="0" y="24" width="2" height="2" fill="#808080"/><rect x="20" y="24" width="2" height="2" fill="#808080"/><rect x="24" y="24" width="6" height="2" fill="#000080"/><rect x="0" y="26" width="2" height="2" fill="#808080"/><rect x="20" y="26" width="2" height="2" fill="#808080"/><rect x="26" y="26" width="2" height="2" fill="#000080"/><rect x="0" y="28" width="22" height="2" fill="#808080"/></svg>
<svg style="left:574px;top:184px;overflow:visible" width="32" height="30"><rect x="0" y="0" width="22" height="2" fill="#808080"/><rect x="0" y="2" width="2" height="2" fill="#808080"/><rect x="20" y="2" width="2" height="2" fill="#808080"/><rect x="26" y="2" width="2" height="2" fill="#000080"/><rect x="0" y="4" width="2" height="2" fill="#808080"/><rect x="20" y="4" width="2" height="2" fill="#808080"/><rect x="26" y="4" width="2" height="2" fill="#000080"/><rect x="0" y="6" width="2" height="2" fill="#808080"/><rect x="4" y="6" width="8" height="2" fill="#000"/><rect x="20" y="6" width="2" height="2" fill="#808080"/><rect x="26" y="6" width="2" height="2" fill="#000080"/><rect x="0" y="8" width="2" height="2" fill="#808080"/><rect x="20" y="8" width="2" height="2" fill="#808080"/><rect x="26" y="8" width="2" height="2" fill="#000080"/><rect x="0" y="10" width="2" height="2" fill="#808080"/><rect x="6" y="10" width="10" height="2" fill="#000"/><rect x="20" y="10" width="2" height="2" fill="#808080"/><rect x="26" y="10" width="2" height="2" fill="#000080"/><rect x="0" y="12" width="2" height="2" fill="#808080"/><rect x="20" y="12" width="2" height="2" fill="#808080"/><rect x="26" y="12" width="2" height="2" fill="#000080"/><rect x="0" y="14" width="2" height="2" fill="#808080"/><rect x="6" y="14" width="8" height="2" fill="#000"/><rect x="20" y="14" width="2" height="2" fill="#808080"/><rect x="26" y="14" width="2" height="2" fill="#000080"/><rect x="0" y="16" width="2" height="2" fill="#808080"/><rect x="20" y="16" width="2" height="2" fill="#808080"/><rect x="22" y="16" width="10" height="2" fill="#000080"/><rect x="0" y="18" width="2" height="2" fill="#808080"/><rect x="8" y="18" width="8" height="2" fill="#000"/><rect x="20" y="18" width="2" height="2" fill="#808080"/><rect x="24" y="18" width="6" height="2" fill="#000080"/><rect x="0" y="20" width="2" height="2" fill="#808080"/><rect x="20" y="20" width="2" height="2" fill="#808080"/><rect x="26" y="20" width="2" height="2" fill="#000080"/><rect x="0" y="22" width="2" height="2" fill="#808080"/><rect x="6" y="22" width="12" height="2" fill="#000"/><rect x="20" y="22" width="2" height="2" fill="#808080"/><rect x="22" y="22" width="10" height="2" fill="#000080"/><rect x="0" y="24" width="2" height="2" fill="#808080"/><rect x="20" y="24" width="2" height="2" fill="#808080"/><rect x="24" y="24" width="6" height="2" fill="#000080"/><rect x="0" y="26" width="2" height="2" fill="#808080"/><rect x="20" y="26" width="2" height="2" fill="#808080"/><rect x="26" y="26" width="2" height="2" fill="#000080"/><rect x="0" y="28" width="22" height="2" fill="#808080"/></svg>
<svg style="left:622px;top:184px;overflow:visible" width="32" height="30"><rect x="0" y="0" width="10" height="2" fill="#888"/><rect x="10" y="0" width="4" height="2" fill="#880000"/><rect x="14" y="0" width="8" height="2" fill="#888"/><rect x="26" y="0" width="4" height="2" fill="#880000"/><rect x="0" y="2" width="2" height="2" fill="#888"/><rect x="10" y="2" width="2" height="2" fill="#7a9a9a"/><rect x="12" y="2" width="6" height="2" fill="#880000"/><rect x="20" y="2" width="2" height="2" fill="#888"/><rect x="22" y="2" width="2" height="2" fill="#7a9a9a"/><rect x="24" y="2" width="4" height="2" fill="#880000"/><rect x="28" y="2" width="4" height="2" fill="#7a9a9a"/><rect x="0" y="4" width="2" height="2" fill="#888"/><rect x="12" y="4" width="2" height="2" fill="#7a9a9a"/><rect x="14" y="4" width="6" height="2" fill="#880000"/><rect x="20" y="4" width="2" height="2" fill="#7a9a9a"/><rect x="22" y="4" width="4" height="2" fill="#880000"/><rect x="26" y="4" width="4" height="2" fill="#7a9a9a"/><rect x="0" y="6" width="2" height="2" fill="#888"/><rect x="4" y="6" width="8" height="2" fill="#000"/><rect x="14" y="6" width="2" height="2" fill="#7a9a9a"/><rect x="16" y="6" width="8" height="2" fill="#880000"/><rect x="24" y="6" width="4" height="2" fill="#7a9a9a"/><rect x="0" y="8" width="2" height="2" fill="#888"/><rect x="16" y="8" width="2" height="2" fill="#7a9a9a"/><rect x="18" y="8" width="6" height="2" fill="#880000"/><rect x="24" y="8" width="2" height="2" fill="#7a9a9a"/><rect x="26" y="8" width="2" height="2" fill="#000080"/><rect x="0" y="10" width="2" height="2" fill="#888"/><rect x="6" y="10" width="10" height="2" fill="#000"/><rect x="16" y="10" width="10" height="2" fill="#880000"/><rect x="26" y="10" width="2" height="2" fill="#000080"/><rect x="0" y="12" width="2" height="2" fill="#888"/><rect x="14" y="12" width="2" height="2" fill="#7a9a9a"/><rect x="16" y="12" width="4" height="2" fill="#880000"/><rect x="20" y="12" width="4" height="2" fill="#7a9a9a"/><rect x="24" y="12" width="4" height="2" fill="#880000"/><rect x="0" y="14" width="2" height="2" fill="#888"/><rect x="6" y="14" width="8" height="2" fill="#000"/><rect x="14" y="14" width="4" height="2" fill="#880000"/><rect x="18" y="14" width="2" height="2" fill="#7a9a9a"/><rect x="20" y="14" width="2" height="2" fill="#888"/><rect x="24" y="14" width="4" height="2" fill="#880000"/><rect x="28" y="14" width="2" height="2" fill="#7a9a9a"/><rect x="0" y="16" width="2" height="2" fill="#888"/><rect x="12" y="16" width="2" height="2" fill="#7a9a9a"/><rect x="14" y="16" width="2" height="2" fill="#880000"/><rect x="16" y="16" width="2" height="2" fill="#7a9a9a"/><rect x="20" y="16" width="2" height="2" fill="#888"/><rect x="26" y="16" width="2" height="2" fill="#000080"/><rect x="28" y="16" width="2" height="2" fill="#880000"/><rect x="0" y="18" width="2" height="2" fill="#888"/><rect x="8" y="18" width="4" height="2" fill="#000"/><rect x="12" y="18" width="4" height="2" fill="#880000"/><rect x="16" y="18" width="2" height="2" fill="#7a9a9a"/><rect x="20" y="18" width="2" height="2" fill="#888"/><rect x="26" y="18" width="2" height="2" fill="#000080"/><rect x="28" y="18" width="2" height="2" fill="#880000"/><rect x="30" y="18" width="2" height="2" fill="#7a9a9a"/><rect x="0" y="20" width="2" height="2" fill="#888"/><rect x="10" y="20" width="2" height="2" fill="#7a9a9a"/><rect x="12" y="20" width="2" height="2" fill="#880000"/><rect x="14" y="20" width="2" height="2" fill="#7a9a9a"/><rect x="20" y="20" width="2" height="2" fill="#888"/><rect x="26" y="20" width="2" height="2" fill="#000080"/><rect x="0" y="22" width="2" height="2" fill="#888"/><rect x="6" y="22" width="12" height="2" fill="#000"/><rect x="20" y="22" width="2" height="2" fill="#888"/><rect x="22" y="22" width="10" height="2" fill="#000080"/><rect x="0" y="24" width="2" height="2" fill="#888"/><rect x="20" y="24" width="2" height="2" fill="#888"/><rect x="24" y="24" width="6" height="2" fill="#000080"/><rect x="0" y="26" width="2" height="2" fill="#888"/><rect x="20" y="26" width="2" height="2" fill="#888"/><rect x="26" y="26" width="2" height="2" fill="#000080"/><rect x="0" y="28" width="22" height="2" fill="#888"/><rect x="22" y="28" width="10" height="2" fill="#000080"/></svg>
<svg style="left:670px;top:186px;overflow:visible" width="28" height="28"><rect x="8" y="0" width="2" height="2" fill="#e00000"/><rect x="12" y="0" width="2" height="2" fill="#e00000"/><rect x="16" y="0" width="2" height="2" fill="#e00000"/><rect x="6" y="2" width="2" height="2" fill="#e00000"/><rect x="10" y="2" width="2" height="2" fill="#e00000"/><rect x="14" y="2" width="2" height="2" fill="#e00000"/><rect x="18" y="2" width="2" height="2" fill="#e00000"/><rect x="4" y="4" width="2" height="2" fill="#e00000"/><rect x="8" y="4" width="2" height="2" fill="#e00000"/><rect x="12" y="4" width="2" height="2" fill="#e00000"/><rect x="16" y="4" width="2" height="2" fill="#e00000"/><rect x="20" y="4" width="2" height="2" fill="#e00000"/><rect x="2" y="6" width="2" height="2" fill="#e00000"/><rect x="6" y="6" width="2" height="2" fill="#e00000"/><rect x="10" y="6" width="2" height="2" fill="#e00000"/><rect x="14" y="6" width="2" height="2" fill="#e00000"/><rect x="18" y="6" width="2" height="2" fill="#e00000"/><rect x="22" y="6" width="2" height="2" fill="#e00000"/><rect x="0" y="8" width="2" height="2" fill="#e00000"/><rect x="4" y="8" width="2" height="2" fill="#e00000"/><rect x="12" y="8" width="2" height="2" fill="#e00000"/><rect x="20" y="8" width="2" height="2" fill="#e00000"/><rect x="2" y="10" width="2" height="2" fill="#e00000"/><rect x="6" y="10" width="2" height="2" fill="#e00000"/><rect x="10" y="10" width="2" height="2" fill="#e00000"/><rect x="0" y="12" width="2" height="2" fill="#e00000"/><rect x="4" y="12" width="2" height="2" fill="#e00000"/><rect x="12" y="12" width="2" height="2" fill="#e00000"/><rect x="16" y="12" width="2" height="2" fill="#e00000"/><rect x="20" y="12" width="2" height="2" fill="#e00000"/><rect x="6" y="14" width="2" height="2" fill="#e00000"/><rect x="10" y="14" width="2" height="2" fill="#e00000"/><rect x="4" y="16" width="2" height="2" fill="#e00000"/><rect x="12" y="16" width="2" height="2" fill="#e00000"/><rect x="20" y="16" width="2" height="2" fill="#e00000"/><rect x="24" y="16" width="2" height="2" fill="#e00000"/><rect x="2" y="18" width="2" height="2" fill="#e00000"/><rect x="6" y="18" width="2" height="2" fill="#e00000"/><rect x="10" y="18" width="2" height="2" fill="#e00000"/><rect x="14" y="18" width="2" height="2" fill="#e00000"/><rect x="18" y="18" width="2" height="2" fill="#e00000"/><rect x="22" y="18" width="2" height="2" fill="#e00000"/><rect x="0" y="20" width="2" height="2" fill="#e00000"/><rect x="4" y="20" width="2" height="2" fill="#e00000"/><rect x="8" y="20" width="2" height="2" fill="#e00000"/><rect x="12" y="20" width="2" height="2" fill="#e00000"/><rect x="16" y="20" width="2" height="2" fill="#e00000"/><rect x="20" y="20" width="2" height="2" fill="#e00000"/><rect x="24" y="20" width="2" height="2" fill="#e00000"/><rect x="2" y="22" width="2" height="2" fill="#e00000"/><rect x="6" y="22" width="2" height="2" fill="#e00000"/><rect x="10" y="22" width="2" height="2" fill="#e00000"/><rect x="14" y="22" width="2" height="2" fill="#e00000"/><rect x="18" y="22" width="2" height="2" fill="#e00000"/><rect x="22" y="22" width="2" height="2" fill="#e00000"/><rect x="4" y="24" width="2" height="2" fill="#e00000"/><rect x="8" y="24" width="2" height="2" fill="#e00000"/><rect x="12" y="24" width="2" height="2" fill="#e00000"/><rect x="16" y="24" width="2" height="2" fill="#e00000"/><rect x="20" y="24" width="2" height="2" fill="#e00000"/><rect x="6" y="26" width="2" height="2" fill="#e00000"/><rect x="10" y="26" width="2" height="2" fill="#e00000"/><rect x="14" y="26" width="2" height="2" fill="#e00000"/><rect x="18" y="26" width="2" height="2" fill="#e00000"/></svg>
<svg style="left:724px;top:187px;overflow:visible" width="2" height="31"><line x1="1" y1="0" x2="1" y2="31" stroke="#000" stroke-width="2" stroke-dasharray="2 2"/></svg>
<div style="left:742px;top:182px;width:36px;height:36px;box-sizing:border-box;border:2px solid;border-color:#e2e2e2 #9c9c9c #9c9c9c #e2e2e2"></div>
<div style="left:790px;top:182px;width:36px;height:36px;box-sizing:border-box;border:2px solid;border-color:#e2e2e2 #9c9c9c #9c9c9c #e2e2e2"></div>
<svg style="left:746px;top:186px;overflow:visible" width="30" height="30"><rect x="2" y="0" width="2" height="2" fill="#000"/><rect x="6" y="0" width="2" height="2" fill="#000"/><rect x="10" y="0" width="2" height="2" fill="#000"/><rect x="0" y="2" width="2" height="2" fill="#000"/><rect x="4" y="2" width="2" height="2" fill="#000"/><rect x="8" y="2" width="2" height="2" fill="#000"/><rect x="12" y="2" width="2" height="2" fill="#000"/><rect x="16" y="2" width="2" height="2" fill="#000"/><rect x="20" y="2" width="2" height="2" fill="#000"/><rect x="2" y="4" width="2" height="2" fill="#000"/><rect x="10" y="4" width="2" height="2" fill="#000"/><rect x="18" y="4" width="2" height="2" fill="#f0f000"/><rect x="22" y="4" width="2" height="2" fill="#000"/><rect x="0" y="6" width="2" height="2" fill="#000"/><rect x="4" y="6" width="2" height="2" fill="#000"/><rect x="8" y="6" width="2" height="2" fill="#000"/><rect x="12" y="6" width="2" height="2" fill="#000"/><rect x="16" y="6" width="2" height="2" fill="#000"/><rect x="20" y="6" width="2" height="2" fill="#f0f000"/><rect x="24" y="6" width="2" height="2" fill="#000"/><rect x="28" y="6" width="2" height="2" fill="#000"/><rect x="2" y="8" width="2" height="2" fill="#000"/><rect x="6" y="8" width="2" height="2" fill="#000"/><rect x="10" y="8" width="2" height="2" fill="#000"/><rect x="18" y="8" width="2" height="2" fill="#f0f000"/><rect x="22" y="8" width="2" height="2" fill="#000"/><rect x="26" y="8" width="2" height="2" fill="#f00000"/><rect x="0" y="10" width="2" height="2" fill="#000"/><rect x="16" y="10" width="2" height="2" fill="#000"/><rect x="20" y="10" width="2" height="2" fill="#f0f000"/><rect x="24" y="10" width="2" height="2" fill="#f00000"/><rect x="28" y="10" width="2" height="2" fill="#000"/><rect x="2" y="12" width="2" height="2" fill="#000"/><rect x="18" y="12" width="2" height="2" fill="#f0f000"/><rect x="22" y="12" width="2" height="2" fill="#000"/><rect x="26" y="12" width="2" height="2" fill="#f00000"/><rect x="8" y="14" width="2" height="2" fill="#000"/><rect x="16" y="14" width="2" height="2" fill="#000"/><rect x="20" y="14" width="2" height="2" fill="#f0f000"/><rect x="24" y="14" width="2" height="2" fill="#f00000"/><rect x="28" y="14" width="2" height="2" fill="#000"/><rect x="6" y="16" width="2" height="2" fill="#000"/><rect x="10" y="16" width="2" height="2" fill="#000"/><rect x="14" y="16" width="2" height="2" fill="#000"/><rect x="18" y="16" width="2" height="2" fill="#f0f000"/><rect x="22" y="16" width="2" height="2" fill="#000"/><rect x="26" y="16" width="2" height="2" fill="#f00000"/><rect x="8" y="18" width="2" height="2" fill="#000"/><rect x="12" y="18" width="2" height="2" fill="#00e000"/><rect x="16" y="18" width="2" height="2" fill="#000"/><rect x="20" y="18" width="2" height="2" fill="#f0f000"/><rect x="24" y="18" width="2" height="2" fill="#f00000"/><rect x="28" y="18" width="2" height="2" fill="#000"/><rect x="6" y="20" width="2" height="2" fill="#000"/><rect x="10" y="20" width="2" height="2" fill="#000"/><rect x="14" y="20" width="2" height="2" fill="#00e000"/><rect x="18" y="20" width="2" height="2" fill="#f0f000"/><rect x="22" y="20" width="2" height="2" fill="#000"/><rect x="26" y="20" width="2" height="2" fill="#f00000"/><rect x="8" y="22" width="2" height="2" fill="#000"/><rect x="12" y="22" width="2" height="2" fill="#00e000"/><rect x="16" y="22" width="2" height="2" fill="#000"/><rect x="20" y="22" width="2" height="2" fill="#f0f000"/><rect x="24" y="22" width="2" height="2" fill="#f00000"/><rect x="28" y="22" width="2" height="2" fill="#000"/><rect x="6" y="24" width="2" height="2" fill="#000"/><rect x="10" y="24" width="2" height="2" fill="#000"/><rect x="14" y="24" width="2" height="2" fill="#000"/><rect x="18" y="24" width="2" height="2" fill="#000"/><rect x="22" y="24" width="2" height="2" fill="#000"/><rect x="26" y="24" width="2" height="2" fill="#000"/><rect x="8" y="26" width="2" height="2" fill="#000"/><rect x="12" y="26" width="2" height="2" fill="#000"/><rect x="16" y="26" width="2" height="2" fill="#000"/><rect x="20" y="26" width="2" height="2" fill="#000"/><rect x="24" y="26" width="2" height="2" fill="#000"/><rect x="28" y="26" width="2" height="2" fill="#000"/><rect x="6" y="28" width="2" height="2" fill="#000"/><rect x="10" y="28" width="2" height="2" fill="#000"/><rect x="14" y="28" width="2" height="2" fill="#000"/><rect x="18" y="28" width="2" height="2" fill="#000"/><rect x="22" y="28" width="2" height="2" fill="#000"/><rect x="26" y="28" width="2" height="2" fill="#000"/></svg>
<svg style="left:794px;top:186px;overflow:visible" width="30" height="30"><rect x="2" y="0" width="2" height="2" fill="#000"/><rect x="6" y="0" width="2" height="2" fill="#000"/><rect x="10" y="0" width="2" height="2" fill="#000"/><rect x="14" y="0" width="2" height="2" fill="#000"/><rect x="0" y="2" width="2" height="2" fill="#000"/><rect x="4" y="2" width="2" height="2" fill="#000"/><rect x="8" y="2" width="2" height="2" fill="#000"/><rect x="12" y="2" width="2" height="2" fill="#000"/><rect x="16" y="2" width="2" height="2" fill="#000"/><rect x="2" y="4" width="2" height="2" fill="#000"/><rect x="10" y="4" width="2" height="2" fill="#000"/><rect x="18" y="4" width="2" height="2" fill="#000"/><rect x="22" y="4" width="2" height="2" fill="#000"/><rect x="0" y="6" width="2" height="2" fill="#000"/><rect x="8" y="6" width="2" height="2" fill="#000"/><rect x="16" y="6" width="2" height="2" fill="#000"/><rect x="20" y="6" width="2" height="2" fill="#f0f000"/><rect x="24" y="6" width="2" height="2" fill="#000"/><rect x="28" y="6" width="2" height="2" fill="#000"/><rect x="2" y="8" width="2" height="2" fill="#000"/><rect x="10" y="8" width="2" height="2" fill="#000"/><rect x="18" y="8" width="2" height="2" fill="#000"/><rect x="22" y="8" width="2" height="2" fill="#000"/><rect x="26" y="8" width="2" height="2" fill="#f00000"/><rect x="0" y="10" width="2" height="2" fill="#000"/><rect x="8" y="10" width="2" height="2" fill="#000"/><rect x="16" y="10" width="2" height="2" fill="#000"/><rect x="20" y="10" width="2" height="2" fill="#f0f000"/><rect x="24" y="10" width="2" height="2" fill="#f00000"/><rect x="28" y="10" width="2" height="2" fill="#000"/><rect x="2" y="12" width="2" height="2" fill="#000"/><rect x="10" y="12" width="2" height="2" fill="#000"/><rect x="18" y="12" width="2" height="2" fill="#000"/><rect x="22" y="12" width="2" height="2" fill="#000"/><rect x="26" y="12" width="2" height="2" fill="#f00000"/><rect x="20" y="14" width="2" height="2" fill="#f0f000"/><rect x="24" y="14" width="2" height="2" fill="#f00000"/><rect x="28" y="14" width="2" height="2" fill="#000"/><rect x="6" y="16" width="2" height="2" fill="#000"/><rect x="10" y="16" width="2" height="2" fill="#000"/><rect x="18" y="16" width="2" height="2" fill="#f0f000"/><rect x="22" y="16" width="2" height="2" fill="#000"/><rect x="26" y="16" width="2" height="2" fill="#f00000"/><rect x="8" y="18" width="2" height="2" fill="#000"/><rect x="12" y="18" width="2" height="2" fill="#000"/><rect x="16" y="18" width="2" height="2" fill="#000"/><rect x="20" y="18" width="2" height="2" fill="#f0f000"/><rect x="24" y="18" width="2" height="2" fill="#f00000"/><rect x="28" y="18" width="2" height="2" fill="#000"/><rect x="6" y="20" width="2" height="2" fill="#000"/><rect x="10" y="20" width="2" height="2" fill="#000"/><rect x="14" y="20" width="2" height="2" fill="#00e000"/><rect x="18" y="20" width="2" height="2" fill="#f0f000"/><rect x="22" y="20" width="2" height="2" fill="#000"/><rect x="26" y="20" width="2" height="2" fill="#f00000"/><rect x="8" y="22" width="2" height="2" fill="#000"/><rect x="12" y="22" width="2" height="2" fill="#00e000"/><rect x="16" y="22" width="2" height="2" fill="#000"/><rect x="20" y="22" width="2" height="2" fill="#f0f000"/><rect x="24" y="22" width="2" height="2" fill="#f00000"/><rect x="28" y="22" width="2" height="2" fill="#000"/><rect x="6" y="24" width="2" height="2" fill="#000"/><rect x="10" y="24" width="2" height="2" fill="#000"/><rect x="14" y="24" width="2" height="2" fill="#000"/><rect x="18" y="24" width="2" height="2" fill="#000"/><rect x="22" y="24" width="2" height="2" fill="#000"/><rect x="26" y="24" width="2" height="2" fill="#000"/><rect x="8" y="26" width="2" height="2" fill="#000"/><rect x="12" y="26" width="2" height="2" fill="#000"/><rect x="16" y="26" width="2" height="2" fill="#000"/><rect x="20" y="26" width="2" height="2" fill="#000"/><rect x="24" y="26" width="2" height="2" fill="#000"/><rect x="28" y="26" width="2" height="2" fill="#000"/><rect x="6" y="28" width="2" height="2" fill="#000"/><rect x="10" y="28" width="2" height="2" fill="#000"/><rect x="14" y="28" width="2" height="2" fill="#000"/><rect x="18" y="28" width="2" height="2" fill="#000"/><rect x="22" y="28" width="2" height="2" fill="#000"/><rect x="26" y="28" width="2" height="2" fill="#000"/></svg>
<svg style="left:840px;top:184px;overflow:visible" width="30" height="32"><rect x="12" y="0" width="4" height="2" fill="#000"/><rect x="10" y="2" width="4" height="2" fill="#000"/><rect x="16" y="2" width="4" height="2" fill="#000"/><rect x="8" y="4" width="2" height="2" fill="#000"/><rect x="12" y="4" width="2" height="2" fill="#000"/><rect x="16" y="4" width="2" height="2" fill="#000"/><rect x="20" y="4" width="2" height="2" fill="#000"/><rect x="8" y="6" width="2" height="2" fill="#000"/><rect x="12" y="6" width="2" height="2" fill="#000"/><rect x="16" y="6" width="2" height="2" fill="#000"/><rect x="20" y="6" width="4" height="2" fill="#000"/><rect x="8" y="8" width="2" height="2" fill="#000"/><rect x="12" y="8" width="2" height="2" fill="#000"/><rect x="16" y="8" width="2" height="2" fill="#000"/><rect x="20" y="8" width="2" height="2" fill="#000"/><rect x="24" y="8" width="2" height="2" fill="#000"/><rect x="8" y="10" width="2" height="2" fill="#000"/><rect x="12" y="10" width="2" height="2" fill="#000"/><rect x="16" y="10" width="2" height="2" fill="#000"/><rect x="20" y="10" width="2" height="2" fill="#000"/><rect x="24" y="10" width="2" height="2" fill="#000"/><rect x="0" y="12" width="6" height="2" fill="#000"/><rect x="8" y="12" width="2" height="2" fill="#000"/><rect x="12" y="12" width="2" height="2" fill="#000"/><rect x="16" y="12" width="2" height="2" fill="#000"/><rect x="20" y="12" width="2" height="2" fill="#000"/><rect x="22" y="12" width="6" height="2" fill="#b8b8b8"/><rect x="0" y="14" width="2" height="2" fill="#000"/><rect x="6" y="14" width="4" height="2" fill="#000"/><rect x="12" y="14" width="2" height="2" fill="#000"/><rect x="16" y="14" width="2" height="2" fill="#000"/><rect x="20" y="14" width="10" height="2" fill="#b8b8b8"/><rect x="2" y="16" width="2" height="2" fill="#000"/><rect x="8" y="16" width="2" height="2" fill="#000"/><rect x="20" y="16" width="10" height="2" fill="#b8b8b8"/><rect x="4" y="18" width="2" height="2" fill="#000"/><rect x="20" y="18" width="10" height="2" fill="#b8b8b8"/><rect x="4" y="20" width="2" height="2" fill="#000"/><rect x="16" y="20" width="4" height="2" fill="#98b4e8"/><rect x="20" y="20" width="10" height="2" fill="#b8b8b8"/><rect x="6" y="22" width="2" height="2" fill="#000"/><rect x="14" y="22" width="8" height="2" fill="#98b4e8"/><rect x="24" y="22" width="2" height="2" fill="#000"/><rect x="8" y="24" width="2" height="2" fill="#000"/><rect x="10" y="24" width="12" height="2" fill="#98b4e8"/><rect x="22" y="24" width="2" height="2" fill="#000"/><rect x="8" y="26" width="2" height="2" fill="#000"/><rect x="10" y="26" width="2" height="2" fill="#6080c0"/><rect x="12" y="26" width="6" height="2" fill="#98b4e8"/><rect x="18" y="26" width="2" height="2" fill="#6080c0"/><rect x="20" y="26" width="4" height="2" fill="#000"/><rect x="10" y="28" width="8" height="2" fill="#98b4e8"/><rect x="10" y="30" width="6" height="2" fill="#98b4e8"/></svg>
<svg style="left:930px;top:184px;overflow:visible" width="28" height="33"><path d="M11 0 V10" stroke="#1030d8" stroke-width="10"/><path d="M0 8 H22 L11 20 Z" fill="#1030d8"/><path d="M11 1 V15" stroke="#1a70f8" stroke-width="6"/><path d="M9 2 V8" stroke="#50b0f8" stroke-width="2"/><circle cx="11" cy="27" r="5" fill="#1030d8"/><circle cx="11" cy="27" r="3" fill="#1050f0"/></svg>
<svg style="left:971px;top:186px;overflow:visible" width="34" height="25"><path d="M3 10 Q8 1 15 2 Q21 2 23 12" fill="none" stroke="#1a50e8" stroke-width="5"/><path d="M11 12 H33 L22 23.5 Z" fill="#1030d8"/><path d="M19 4 Q22 8 22 16" stroke="#40a0f8" stroke-width="3" fill="none"/><circle cx="6" cy="19" r="5" fill="#1030d8"/><circle cx="6" cy="19" r="3" fill="#1a60f0"/></svg>
<svg style="left:1026px;top:184px;overflow:visible" width="28" height="33"><path d="M11 10 V20" stroke="#1030d8" stroke-width="10"/><path d="M0 12 H22 L11 0 Z" fill="#1030d8"/><path d="M11 5 V19" stroke="#1a70f8" stroke-width="6"/><path d="M9 9 V16" stroke="#50b0f8" stroke-width="2"/><circle cx="11" cy="27" r="5" fill="#1030d8"/><circle cx="11" cy="27" r="3" fill="#1050f0"/></svg>
<svg style="left:1074px;top:188px;overflow:visible" width="2" height="30"><line x1="1" y1="0" x2="1" y2="30" stroke="#000" stroke-width="2" stroke-dasharray="2 2"/></svg>
<svg style="left:1098px;top:184px;overflow:visible" width="28" height="33"><path d="M11 0 V10" stroke="#1030d8" stroke-width="10"/><path d="M0 8 H22 L11 20 Z" fill="#1030d8"/><path d="M11 1 V15" stroke="#1a70f8" stroke-width="6"/><path d="M9 2 V8" stroke="#50b0f8" stroke-width="2"/><circle cx="11" cy="27" r="5" fill="#1030d8"/><circle cx="11" cy="27" r="3" fill="#1050f0"/><path d="M1 22 V32 M5 22 V32 M17 22 V32 M21 22 V32" stroke="#0000d0" stroke-width="2"/></svg>
<svg style="left:1134px;top:201.5px;overflow:visible" width="11" height="4.5"><path d="M0 0 H11 L5.5 4.5 Z" fill="#000"/></svg>
<svg style="left:1160px;top:186px;overflow:visible" width="34" height="31"><path d="M3 10 Q8 1 15 2 Q21 2 23 12" fill="none" stroke="#1a50e8" stroke-width="5"/><path d="M11 12 H33 L22 23.5 Z" fill="#1030d8"/><path d="M19 4 Q22 8 22 16" stroke="#40a0f8" stroke-width="3" fill="none"/><circle cx="6" cy="19" r="5" fill="#1030d8"/><circle cx="6" cy="19" r="3" fill="#1a60f0"/><path d="M3 24 V30 M7 24 V30 M11 24 V30 M15 24 V30 M19 24 V30 M23 24 V30 M27 24 V30 M31 24 V30" stroke="#0000d0" stroke-width="2"/></svg>
<svg style="left:1212px;top:184px;overflow:visible" width="28" height="33"><path d="M11 10 V20" stroke="#1030d8" stroke-width="10"/><path d="M0 12 H22 L11 0 Z" fill="#1030d8"/><path d="M11 5 V19" stroke="#1a70f8" stroke-width="6"/><path d="M9 9 V16" stroke="#50b0f8" stroke-width="2"/><circle cx="11" cy="27" r="5" fill="#1030d8"/><circle cx="11" cy="27" r="3" fill="#1050f0"/><path d="M1 22 V32 M5 22 V32 M17 22 V32 M21 22 V32" stroke="#0000d0" stroke-width="2"/></svg>
<div class="t" style="left:47.03px;top:246.91px;font:25.5px/25.5px 'Liberation Sans', sans-serif;color:#000;letter-spacing:0.000px;transform:scaleX(1.0837);transform-origin:0 0;">Layout</div>
<div style="left:140px;top:245px;width:246px;height:35px;box-sizing:border-box;border-style:solid;border-width:2px 0 0 2px;border-color:#8a8a8a;background:#d9d9d9"></div>
<div class="t" style="left:143.79px;top:249.58px;font:26px/26px 'Liberation Mono', monospace;color:#000;letter-spacing:0.000px;transform:scaleX(0.9098);transform-origin:0 0;">Simulate</div>
<div style="left:391px;top:245px;width:35px;height:35px;box-sizing:border-box;border:2px solid;border-color:#e2e2e2 #9c9c9c #9c9c9c #e2e2e2"></div>
<svg style="left:396px;top:258px;overflow:visible" width="26" height="13"><path d="M0 0 H26 L13.0 13 Z" fill="#000"/></svg>
<div class="t" style="left:481.12px;top:246.91px;font:25.5px/25.5px 'Liberation Sans', sans-serif;color:#9a9a9a;letter-spacing:0.000px;transform:scaleX(1.0647);transform-origin:0 0;">ColumnLayout</div>
<div style="left:666px;top:245px;width:427px;height:35px;box-sizing:border-box;border-style:solid;border-width:2px 0 0 2px;border-color:#8a8a8a;background:#d9d9d9"></div>
<div class="t" style="left:669.02px;top:249.58px;font:26px/26px 'Liberation Mono', monospace;color:#9a9a9a;letter-spacing:0.000px;transform:scaleX(0.9151);transform-origin:0 0;">Default</div>
<div style="left:1099px;top:245px;width:35px;height:35px;box-sizing:border-box;border:2px solid;border-color:#e2e2e2 #9c9c9c #9c9c9c #e2e2e2"></div>
<svg style="left:1105px;top:259px;overflow:visible" width="22" height="12"><path d="M0 0 H22 L11 12 Z" fill="url(#pk)"/></svg>
<svg style="left:1187px;top:249px;overflow:visible" width="32" height="31"><path d="M2 8 Q8 0 14 4 Q20 8 26 2 V16 Q20 22 14 18 Q8 14 2 22 Z" fill="url(#pbl)" stroke="none" stroke-width="1.5"/><path d="M26 1 V30" stroke="url(#pbr)" stroke-width="3"/><circle cx="26" cy="23" r="6" fill="none" stroke="url(#pgd)" stroke-width="2.5"/></svg>
<svg style="left:1228px;top:265px;overflow:visible" width="10" height="6"><rect x="0" y="0" width="2" height="2"/><rect x="4" y="0" width="2" height="2"/><rect x="8" y="0" width="2" height="2"/><rect x="2" y="2" width="2" height="2"/><rect x="6" y="2" width="2" height="2"/><rect x="4" y="4" width="2" height="2"/></svg>
<svg style="left:1254px;top:249px;overflow:visible" width="32" height="31"><path d="M2 8 Q8 0 14 4 Q20 8 26 2 V16 Q20 22 14 18 Q8 14 2 22 Z" fill="#5aa8f0" stroke="#2a78d0" stroke-width="1.5"/><path d="M26 1 V30" stroke="#8a5a20" stroke-width="3"/><circle cx="25" cy="23" r="7" fill="#e05010" stroke="#c03000" stroke-width="1"/><rect x="20" y="21.5" width="10" height="3" fill="#fff"/></svg>
<svg style="left:1294px;top:266px;overflow:visible" width="10" height="5.5"><path d="M0 0 H10 L5.0 5.5 Z" fill="#000"/></svg>
<svg style="left:1320px;top:249px;overflow:visible" width="32" height="31"><path d="M2 8 Q8 0 14 4 Q20 8 26 2 V16 Q20 22 14 18 Q8 14 2 22 Z" fill="#5aa8f0" stroke="#2a78d0" stroke-width="1.5"/><path d="M26 1 V30" stroke="#8a5a20" stroke-width="3"/><path d="M8 30 L12 22 L30 6 L33 10 L15 26 Z" fill="#f0d060" stroke="#a07020" stroke-width="1.5"/></svg>
<svg style="left:1368px;top:249px;overflow:visible" width="32" height="31"><path d="M2 8 Q8 0 14 4 Q20 8 26 2 V16 Q20 22 14 18 Q8 14 2 22 Z" fill="#5aa8f0" stroke="#2a78d0" stroke-width="1.5"/><path d="M26 1 V30" stroke="#8a5a20" stroke-width="3"/><rect x="12" y="11" width="20" height="19" fill="#6a9ae0" stroke="#3060b0" stroke-width="1.5"/><rect x="16" y="12" width="12" height="6" fill="#fff"/><rect x="16" y="23" width="12" height="5" fill="#a0e070"/></svg>
<svg style="left:1408px;top:266px;overflow:visible" width="10" height="5.5"><path d="M0 0 H10 L5.0 5.5 Z" fill="#000"/></svg>
<svg style="left:1432px;top:249px;overflow:visible" width="32" height="31"><path d="M2 8 Q8 0 14 4 Q20 8 26 2 V16 Q20 22 14 18 Q8 14 2 22 Z" fill="#5aa8f0" stroke="#2a78d0" stroke-width="1.5"/><path d="M26 1 V30" stroke="#8a5a20" stroke-width="3"/><path d="M10 18 H20 V12 L31 21 L20 30 V24 H10 Z" fill="#4aa040" stroke="#2a7a20" stroke-width="1.2"/></svg>
<div style="left:44px;top:310px;width:36px;height:36px;border-style:solid;border-width:2px;border-color:#9c9c9c #e2e2e2 #e2e2e2 #9c9c9c;box-sizing:border-box;"></div>
<div style="left:92px;top:310px;width:36px;height:36px;border-style:solid;border-width:2px;border-color:#9c9c9c #e2e2e2 #e2e2e2 #9c9c9c;box-sizing:border-box;"></div>
<div style="left:140px;top:310px;width:36px;height:36px;border-style:solid;border-width:2px;border-color:#9c9c9c #e2e2e2 #e2e2e2 #9c9c9c;box-sizing:border-box;"></div>
<div style="left:188px;top:310px;width:36px;height:36px;border-style:solid;border-width:2px;border-color:#9c9c9c #e2e2e2 #e2e2e2 #9c9c9c;box-sizing:border-box;"></div>
<div style="left:236px;top:310px;width:36px;height:36px;box-sizing:border-box;border:2px solid;border-color:#e2e2e2 #9c9c9c #9c9c9c #e2e2e2"></div>
<svg style="left:59px;top:318px;overflow:visible" width="6" height="20"><path d="M3 0 V20 M0 2 H6 M0 18 H6" stroke="url(#pk)" stroke-width="2.5"/></svg>
<svg style="left:101px;top:318px;overflow:visible" width="18" height="19"><circle cx="9" cy="9.5" r="7.5" fill="none" stroke="url(#pk)" stroke-width="2.5"/></svg>
<svg style="left:144px;top:318px;overflow:visible" width="29" height="19"><path d="M2 2 H8 M5 2 V18 M2 18 H8 M18 18 L10 4" stroke="url(#pk)" stroke-width="2.5"/><circle cx="20" cy="10" r="7" fill="none" stroke="url(#pk)" stroke-width="2.5"/></svg>
<svg style="left:193px;top:316px;overflow:visible" width="27" height="25"><rect x="1" y="1" width="24" height="22" fill="none" stroke="#000" stroke-width="2" stroke-dasharray="2 2"/><path d="M13 6 V18" stroke="url(#pk)" stroke-width="2.5"/></svg>
<svg style="left:240px;top:321px;overflow:visible" width="28" height="16"><path d="M1 15 L6 1 L11 15 M3 10 H9 M14 1 V15 H19 M22 1 V15 H27" fill="none" stroke="url(#pk)" stroke-width="2.5"/></svg>
<svg style="left:285px;top:311px;overflow:visible" width="34" height="34"><path d="M3 30 L20 12 L28 20 L10 34 Z" fill="url(#pb)"/><path d="M8 12 L18 2 L24 8 L14 18 Z" fill="#e0b0e8" opacity="0.8"/><path d="M20 4 L30 14 L32 24 L24 20 Z" fill="url(#pgr)"/></svg>
<div style="left:368px;top:310px;width:36px;height:36px;border-style:solid;border-width:2px;border-color:#9c9c9c #e2e2e2 #e2e2e2 #9c9c9c;box-sizing:border-box;"></div>
<div style="left:416px;top:310px;width:36px;height:36px;box-sizing:border-box;border:2px solid;border-color:#e2e2e2 #9c9c9c #9c9c9c #e2e2e2"></div>
<div style="left:464px;top:310px;width:36px;height:36px;box-sizing:border-box;border:2px solid;border-color:#e2e2e2 #9c9c9c #9c9c9c #e2e2e2"></div>
<div style="left:512px;top:310px;width:36px;height:36px;box-sizing:border-box;border:2px solid;border-color:#e2e2e2 #9c9c9c #9c9c9c #e2e2e2"></div>
<div style="left:560px;top:310px;width:36px;height:36px;box-sizing:border-box;border:2px solid;border-color:#e2e2e2 #9c9c9c #9c9c9c #e2e2e2"></div>
<svg style="left:377px;top:315px;overflow:visible" width="22" height="24"><path d="M2 0 L10 8 L8 10 L2 14 Z M2 0 L12 10 L8 12 Z" fill="url(#pk)" stroke="url(#pk)" stroke-width="3"/><path d="M8 10 L17 21" stroke="url(#pk)" stroke-width="3"/></svg>
<svg style="left:420px;top:314px;overflow:visible" width="28" height="30"><rect x="2" y="2" width="14" height="14" fill="none" stroke="#000" stroke-width="2" stroke-dasharray="2 2"/><rect x="8" y="8" width="14" height="14" fill="none" stroke="url(#pk)" stroke-width="2.5"/><path d="M16 18 L26 28" stroke="url(#pk)" stroke-width="3"/></svg>
<svg style="left:467px;top:313px;overflow:visible" width="30" height="30"><path d="M15 1 V29 M1 15 H29 M10 6 L15 1 L20 6 M10 24 L15 29 L20 24 M6 10 L1 15 L6 20 M24 10 L29 15 L24 20" stroke="url(#pk)" stroke-width="2.5" fill="none"/></svg>
<svg style="left:515px;top:315px;overflow:visible" width="30" height="28"><path d="M8 2 V24 M18 2 V24 M26 12 V24 M2 24 H30" stroke="#000" stroke-width="2" stroke-dasharray="2 2" fill="none"/></svg>
<svg style="left:563px;top:315px;overflow:visible" width="30" height="28"><path d="M2 4 H12 V22 H30 M2 22 H6 M24 4 V12" stroke="#000" stroke-width="2" stroke-dasharray="2 2" fill="none"/><circle cx="6" cy="12" r="2" fill="#000"/><circle cx="26" cy="16" r="2" fill="#000"/></svg>
<svg style="left:616px;top:316px;overflow:visible" width="2" height="30"><line x1="1" y1="0" x2="1" y2="30" stroke="#000" stroke-width="2" stroke-dasharray="2 2"/></svg>
<svg style="left:635px;top:311px;overflow:visible" width="34" height="34"><rect x="1" y="1" width="15" height="32" fill="url(#pk)"/><rect x="2" y="2" width="13" height="9" fill="url(#pr)"/><rect x="6" y="14" width="6" height="4" fill="url(#py)"/><rect x="6" y="26" width="4" height="3" fill="#0c0"/><rect x="6" y="22" width="4" height="2" fill="#bbb"/><path d="M20 8 L32 16 L20 24 Z" fill="none" stroke="url(#pk)" stroke-width="2.5"/><rect x="28" y="10" width="3" height="3" fill="#60c0f0"/></svg>
<svg style="left:720px;top:311px;overflow:visible" width="30" height="34"><path d="M11 1 V22" stroke="url(#pk)" stroke-width="2.5"/><path d="M10 1 V22" stroke="#f0c000" stroke-width="2" stroke-dasharray="2 2"/><rect x="2" y="22" width="24" height="10" rx="5" fill="none" stroke="url(#py)" stroke-width="3"/><rect x="4" y="26" width="20" height="6" fill="url(#pk)"/><path d="M14 8 H28 M23 3 L28 8 L23 13" fill="none" stroke="url(#pk)" stroke-width="2.5"/><path d="M26 5 V11" stroke="#f0c000" stroke-width="2" stroke-dasharray="2 2"/></svg>
<svg style="left:768px;top:311px;overflow:visible" width="30" height="34"><path d="M11 1 V22" stroke="url(#pk)" stroke-width="2.5"/><path d="M10 1 V22" stroke="#f0c000" stroke-width="2" stroke-dasharray="2 2"/><rect x="2" y="22" width="24" height="10" rx="5" fill="none" stroke="url(#py)" stroke-width="3"/><rect x="4" y="26" width="20" height="6" fill="url(#pk)"/><path d="M14 8 H28" fill="none" stroke="url(#py)" stroke-width="2.5"/></svg>
<svg style="left:815px;top:314px;overflow:visible" width="32" height="28"><path d="M1 2 H10 V26 H32" fill="none" stroke="#008000" stroke-width="2" stroke-dasharray="2 2"/><path d="M13 12 L20 6 L20 18 Z M20 12 H32" stroke="url(#pb)" stroke-width="3" fill="url(#pb)"/></svg>
<svg style="left:863px;top:314px;overflow:visible" width="32" height="28"><path d="M1 26 H18 V2 H32" fill="none" stroke="#008000" stroke-width="2" stroke-dasharray="2 2"/><path d="M0 12 H16 M10 6 L16 12 L10 18" stroke="#2020e0" stroke-width="2.5" fill="none"/></svg>
<svg style="left:912px;top:314px;overflow:visible" width="32" height="28"><path d="M1 2 H10 V26 H32" fill="none" stroke="#008000" stroke-width="2" stroke-dasharray="2 2"/><path d="M5 8 H15 M10 3 V13 M12 17 H22" stroke="#2020e0" stroke-width="2.5" stroke-dasharray="2 2"/></svg>
<svg style="left:960px;top:314px;overflow:visible" width="32" height="28"><path d="M1 2 H18 V26 H32" fill="none" stroke="#008000" stroke-width="2" stroke-dasharray="2 2"/><path d="M12 11 H22 M17 6 V16 M4 21 H14" stroke="#2020e0" stroke-width="2.5" stroke-dasharray="2 2"/></svg>
<svg style="left:1009px;top:314px;overflow:visible" width="32" height="28"><path d="M1 26 H12 V2 H28" fill="none" stroke="#008000" stroke-width="2" stroke-dasharray="2 2"/><path d="M8 11 H16 M12 6 V16 M14 21 H24" stroke="#2020e0" stroke-width="2.5" stroke-dasharray="2 2"/></svg>
<svg style="left:1057px;top:314px;overflow:visible" width="32" height="28"><path d="M1 26 H20 V2 H28" fill="none" stroke="#008000" stroke-width="2" stroke-dasharray="2 2"/><path d="M16 11 H26 M21 6 V16 M6 21 H16" stroke="#2020e0" stroke-width="2.5" stroke-dasharray="2 2"/></svg>
<svg style="left:45px;top:377px;overflow:visible" width="32" height="30"><path d="M1 2 H5 L13 10 L5 16 H1 M1 28 H5 L13 20" fill="none" stroke="url(#pk)" stroke-width="2.5"/><path d="M13 15 H31 M19 9 L13 15 L19 21 M22 13 L26 17 M26 13 L30 17" stroke="url(#pbl)" stroke-width="3" fill="none"/></svg>
<svg style="left:85px;top:393px;overflow:visible" width="10" height="6"><rect x="0" y="0" width="2" height="2"/><rect x="4" y="0" width="2" height="2"/><rect x="8" y="0" width="2" height="2"/><rect x="2" y="2" width="2" height="2"/><rect x="6" y="2" width="2" height="2"/><rect x="4" y="4" width="2" height="2"/></svg>
<svg style="left:111px;top:377px;overflow:visible" width="32" height="30"><path d="M30 2 H26 L18 10 L26 16 H30 M30 28 H26 L18 20" fill="none" stroke="url(#pk)" stroke-width="2.5"/><path d="M0 15 H18 M12 9 L18 15 L12 21 M2 13 L6 17 M6 13 L10 17" stroke="url(#pbl)" stroke-width="3" fill="none"/></svg>
<svg style="left:151px;top:393px;overflow:visible" width="10" height="6"><rect x="0" y="0" width="2" height="2"/><rect x="4" y="0" width="2" height="2"/><rect x="8" y="0" width="2" height="2"/><rect x="2" y="2" width="2" height="2"/><rect x="6" y="2" width="2" height="2"/><rect x="4" y="4" width="2" height="2"/></svg>
<svg style="left:177px;top:377px;overflow:visible" width="34" height="30"><path d="M1 2 H8 M1 6 V26 M1 28 H8 M12 2 H16 M12 28 H16" stroke="url(#pk)" stroke-width="2.5" fill="none"/><path d="M18 6 L26 15 L18 24 L10 15 Z" fill="none" stroke="url(#pk)" stroke-width="2.5"/><circle cx="18" cy="15" r="3" fill="#0c0"/><circle cx="32" cy="15" r="2" fill="#00f"/></svg>
<svg style="left:232px;top:379px;overflow:visible" width="2" height="31"><line x1="1" y1="0" x2="1" y2="31" stroke="#000" stroke-width="2" stroke-dasharray="2 2"/></svg>
<div class="t" style="left:254.75px;top:382.41px;font:25.5px/25.5px 'Liberation Sans', sans-serif;color:#9a9a9a;letter-spacing:0.000px;transform:scaleX(1.0781);transform-origin:0 0;">Search:</div>
<div style="left:358px;top:381px;width:231px;height:34px;box-sizing:border-box;border-style:solid;border-width:2px 0 0 2px;border-color:#8a8a8a;background:#d9d9d9"></div>
<div style="left:595px;top:381px;width:34px;height:35px;box-sizing:border-box;border:2px solid;border-color:#e2e2e2 #9c9c9c #9c9c9c #e2e2e2"></div>
<svg style="left:601px;top:393px;overflow:visible" width="23" height="13"><path d="M0 0 H23 L11.5 13 Z" fill="url(#pk)"/></svg>
<svg style="left:644px;top:379px;overflow:visible" width="34" height="33"><path d="M8 2 L14 2 L18 12 V22 H2 V12 Z M20 2 H26 L32 12 V22 H18" fill="url(#pgr)" stroke="url(#pk)" stroke-width="1.5"/><path d="M2 28 H14 M6 24 L2 28 L6 32" stroke="#2020e0" stroke-width="2.5" stroke-dasharray="2 2" fill="none"/></svg>
<svg style="left:687px;top:379px;overflow:visible" width="34" height="33"><path d="M8 2 L14 2 L18 12 V22 H2 V12 Z M20 2 H26 L32 12 V22 H18" fill="url(#pgr)" stroke="url(#pk)" stroke-width="1.5"/><path d="M18 28 H32 M28 24 L32 28 L28 32" stroke="#2020e0" stroke-width="2.5" stroke-dasharray="2 2" fill="none"/></svg>
<svg style="left:742px;top:379px;overflow:visible" width="34" height="33"><path d="M4 14 L14 2 L30 14 L20 26" fill="none" stroke="url(#pgr)" stroke-width="6"/><path d="M14 28 L30 16" stroke="#80a8e8" stroke-width="3" stroke-dasharray="2 2"/></svg>
<svg style="left:829.5px;top:376px;overflow:visible" width="32" height="32"><circle cx="12" cy="12" r="10" fill="none" stroke="url(#pk)" stroke-width="2.5"/><path d="M6 12 H18 M12 6 V18" stroke="url(#pk)" stroke-width="3"/><path d="M19 19 L29 29" stroke="#0000e0" stroke-width="2.5" stroke-dasharray="2.5 1.5"/></svg>
<svg style="left:877px;top:376px;overflow:visible" width="32" height="32"><circle cx="12" cy="12" r="10" fill="none" stroke="url(#pk)" stroke-width="2.5"/><path d="M6 12 H18" stroke="url(#pk)" stroke-width="3"/><path d="M19 19 L29 29" stroke="#0000e0" stroke-width="2.5" stroke-dasharray="2.5 1.5"/></svg>
<svg style="left:925.5px;top:376px;overflow:visible" width="32" height="32"><circle cx="12" cy="12" r="10" fill="url(#pbn)" stroke="url(#pk)" stroke-width="2.5"/><path d="M19 19 L29 29" stroke="#0000e0" stroke-width="2.5" stroke-dasharray="2.5 1.5"/></svg>
<svg style="left:972px;top:376px;overflow:visible" width="34" height="32"><path d="M12 2 V22" stroke="#f0c000" stroke-width="2.5" stroke-dasharray="2 2"/><rect x="1" y="22" width="22" height="9" rx="4.5" fill="none" stroke="url(#py)" stroke-width="3"/><rect x="3" y="25" width="18" height="4" fill="url(#pbr)"/><path d="M24 2 L32 10 L24 16 L18 10 Z" fill="url(#pgr)"/><path d="M30 12 L32 16" stroke="#00f" stroke-width="2"/></svg>
<svg style="left:1019.5px;top:376px;overflow:visible" width="34" height="32"><path d="M12 2 V22" stroke="#f0c000" stroke-width="2.5" stroke-dasharray="2 2"/><rect x="1" y="22" width="22" height="9" rx="4.5" fill="none" stroke="url(#py)" stroke-width="3"/><rect x="3" y="25" width="18" height="4" fill="url(#pbr)"/><path d="M26 10 V22" stroke="#f0c000" stroke-width="2.5" stroke-dasharray="2 2"/><rect x="15" y="22" width="18" height="9" rx="4.5" fill="none" stroke="url(#py)" stroke-width="3"/><path d="M24 2 L32 10 L24 16 L18 10 Z" fill="url(#pgr)"/><path d="M30 12 L32 16" stroke="#00f" stroke-width="2"/></svg>
<svg style="left:1068px;top:376px;overflow:visible" width="32" height="32"><rect x="2" y="2" width="18" height="18" fill="none" stroke="#0000a0" stroke-width="2" stroke-dasharray="2 2"/><path d="M10 10 L26 24" stroke="url(#pgr)" stroke-width="7"/><path d="M24 24 L30 30" stroke="#00f" stroke-width="3" stroke-dasharray="2 2"/></svg>
<div style="left:1150px;top:374px;width:36px;height:36px;box-sizing:border-box;border:2px solid;border-color:#e2e2e2 #9c9c9c #9c9c9c #e2e2e2"></div>
<div style="left:1198px;top:374px;width:36px;height:36px;box-sizing:border-box;border:2px solid;border-color:#e2e2e2 #9c9c9c #9c9c9c #e2e2e2"></div>
<div style="left:1246px;top:374px;width:36px;height:36px;box-sizing:border-box;border:2px solid;border-color:#e2e2e2 #9c9c9c #9c9c9c #e2e2e2"></div>
<svg style="left:1154px;top:378px;overflow:visible" width="28" height="28"><path d="M14 2 V24 M2 24 H26" stroke="#008000" stroke-width="2" stroke-dasharray="2 2"/></svg>
<svg style="left:1202px;top:378px;overflow:visible" width="28" height="28"><rect x="8" y="2" width="12" height="22" fill="url(#pbn)"/><path d="M14 2 V24 M2 24 H26" stroke="#008000" stroke-width="2" stroke-dasharray="2 2"/></svg>
<svg style="left:1250px;top:378px;overflow:visible" width="28" height="28"><rect x="2" y="2" width="24" height="24" fill="url(#pgd)"/></svg>
<svg style="left:1302px;top:380px;overflow:visible" width="2" height="30"><line x1="1" y1="0" x2="1" y2="30" stroke="#000" stroke-width="2" stroke-dasharray="2 2"/></svg>
<svg style="left:1321px;top:375px;overflow:visible" width="34" height="33"><rect x="1" y="1" width="32" height="31" fill="url(#pbn)"/></svg>
<svg style="left:1371px;top:375px;overflow:visible" width="30" height="33"><rect x="6" y="1" width="10" height="31" fill="url(#pbn)"/><path d="M1 30 H8 V2 H22 M10 2 V30" stroke="#008000" stroke-width="2" stroke-dasharray="2 2" fill="none"/><path d="M8 2 V30" stroke="#ee0" stroke-width="2" stroke-dasharray="2 2"/></svg>
<svg style="left:1420px;top:375px;overflow:visible" width="30" height="33"><path d="M1 30 H10 V2 H28" stroke="#008000" stroke-width="2" stroke-dasharray="2 2" fill="none"/></svg>
<svg style="left:1468px;top:375px;overflow:visible" width="30" height="33"><path d="M1 30 H10 V2 H28" stroke="#008000" stroke-width="2" stroke-dasharray="2 2" fill="none"/><path d="M10 2 V30" stroke="#ee0" stroke-width="2" stroke-dasharray="2 2"/></svg>
<svg style="left:47px;top:441px;overflow:visible" width="30" height="30"><path d="M2 2 L18 28 M18 2 L2 28" stroke="#800000" stroke-width="2.5" stroke-dasharray="3 1"/><path d="M28 6 L20 15 L28 24 Z" fill="url(#pk)"/></svg>
<svg style="left:93px;top:441px;overflow:visible" width="30" height="30"><path d="M12 2 L28 28 M28 2 L12 28" stroke="#800000" stroke-width="2.5" stroke-dasharray="3 1"/><path d="M2 6 L10 15 L2 24 Z" fill="url(#pk)"/></svg>
<div style="left:141px;top:439px;width:35px;height:35px;box-sizing:border-box;border:2px solid;border-color:#e2e2e2 #9c9c9c #9c9c9c #e2e2e2"></div>
<svg style="left:146px;top:443px;overflow:visible" width="24" height="28"><path d="M2 2 H14 L20 8 V26 H2 Z" fill="none" stroke="#000" stroke-width="2" stroke-dasharray="2 2"/><circle cx="8" cy="10" r="1.5" fill="#f00"/><circle cx="15" cy="14" r="1.5" fill="#f00"/><circle cx="10" cy="20" r="1.5" fill="#f00"/></svg>
<svg style="left:197px;top:441px;overflow:visible" width="26" height="31"><path d="M2 14 L20 2 M2 2 L14 14" stroke="#800000" stroke-width="2.5" stroke-dasharray="3 1"/><path d="M2 2 L18 16" stroke="#888" stroke-width="2"/><ellipse cx="16" cy="21" rx="7" ry="9" fill="url(#pb)" transform="rotate(-30 16 21)"/></svg>
<svg style="left:0;top:0" width="0" height="0"><defs>
<linearGradient id="gexp" x1="0" y1="0" x2="0" y2="1"><stop offset="0" stop-color="#ffffff"/><stop offset="0.5" stop-color="#f0f0f8"/><stop offset="1" stop-color="#b8bcd4"/></linearGradient>
</defs></svg>
<div style="left:12px;top:491px;width:1600px;height:647px;background:#d9d9d9"></div>
<div style="left:13px;top:493px;width:241px;height:585px;box-sizing:border-box;border:2px solid;border-color:#9c9c9c #9c9c9c #9c9c9c #9c9c9c;background:#fff"></div>
<div style="left:15px;top:495px;width:237px;height:38px;background:#fff"></div>
<div style="left:15px;top:533px;width:237px;height:2px;background:#9c9c9c"></div>
<svg style="left:18px;top:498px;overflow:visible" width="32" height="32"><path d="M2 2 H8 M2 6 H8 M1 10 H7 M1 14 H6 M1 18 H5" stroke="#7878b8" stroke-width="2"/><path d="M12 1 H27 L31 7 V14 L27 26 H8 L11 14 Z" fill="#f4fcfc" stroke="#000" stroke-width="2.2"/><path d="M15 5 H25 M14 9 H25 M13 13 H24 M12 17 H23 M12 21 H22" stroke="#202060" stroke-width="2" stroke-dasharray="3 1"/><circle cx="7" cy="25" r="6" fill="#d80020" stroke="#000" stroke-width="2"/><path d="M7 20 V30 M2 25 H12" stroke="#000" stroke-width="1"/><circle cx="27" cy="27" r="4.5" fill="#d80020" stroke="#000" stroke-width="2"/></svg>
<div class="t" style="left:60.10px;top:500.41px;font:25.5px/25.5px 'Liberation Sans', sans-serif;color:#000;letter-spacing:0.496px;transform:scaleX(1.1500);transform-origin:0 0;">ult</div>
<div style="left:56px;top:510px;width:2px;height:12px;background:#000"></div>
<svg style="left:100px;top:508px;overflow:visible" width="40" height="16"><rect x="0" y="0" width="2" height="2" fill="#000"/><rect x="6" y="0" width="2" height="2" fill="#000"/><rect x="12" y="0" width="2" height="2" fill="#000"/><rect x="18" y="0" width="2" height="2" fill="#000"/><rect x="24" y="0" width="2" height="2" fill="#000"/><rect x="30" y="0" width="2" height="2" fill="#000"/><rect x="3" y="6" width="2" height="2" fill="#000"/><rect x="9" y="6" width="2" height="2" fill="#000"/><rect x="15" y="6" width="2" height="2" fill="#000"/><rect x="21" y="6" width="2" height="2" fill="#000"/><rect x="27" y="6" width="2" height="2" fill="#000"/><rect x="33" y="6" width="2" height="2" fill="#000"/><rect x="0" y="12" width="2" height="2" fill="#000"/><rect x="6" y="12" width="2" height="2" fill="#000"/><rect x="12" y="12" width="2" height="2" fill="#000"/><rect x="18" y="12" width="2" height="2" fill="#000"/><rect x="24" y="12" width="2" height="2" fill="#000"/><rect x="30" y="12" width="2" height="2" fill="#000"/></svg>
<div style="left:144px;top:500px;width:24px;height:26px;box-sizing:border-box;border:2px solid;border-color:#e2e2e2 #9c9c9c #9c9c9c #e2e2e2"></div>
<svg style="left:144px;top:500px;overflow:visible" width="24" height="26"><path d="M12 5.0 V21.0 M4 13.0 H20" stroke="#000" stroke-width="3.5"/></svg>
<div style="left:180px;top:500px;width:24px;height:26px;box-sizing:border-box;border:2px solid;border-color:#e2e2e2 #9c9c9c #9c9c9c #e2e2e2"></div>
<svg style="left:180px;top:500px;overflow:visible" width="24" height="26"><rect x="5" y="12.0" width="8" height="8" fill="none" stroke="#000" stroke-width="2.2"/><rect x="8" y="15.0" width="2" height="2" fill="#000"/><path d="M9 16.0 L18 7.0" stroke="#000" stroke-width="2.5"/><path d="M12 5.0 H19 V12.0" fill="none" stroke="#000" stroke-width="2.5"/></svg>
<div style="left:216px;top:500px;width:24px;height:26px;box-sizing:border-box;border:2px solid;border-color:#e2e2e2 #9c9c9c #9c9c9c #e2e2e2"></div>
<svg style="left:216px;top:500px;overflow:visible" width="24" height="26"><path d="M5 6.0 L19 20.0 M19 6.0 L5 20.0" stroke="#000" stroke-width="3"/></svg>
<div style="left:16px;top:535px;width:236px;height:540px;box-sizing:border-box;border-style:solid;border-width:2px 2px 0 2px;border-color:#9c9c9c #e2e2e2 #e2e2e2 #9c9c9c;background:#fff"></div>
<div style="left:20px;top:537px;width:24px;height:30px;box-sizing:border-box;border:2px solid;border-color:#e2e2e2 #9c9c9c #9c9c9c #e2e2e2"></div>
<svg style="left:24px;top:544px;overflow:visible" width="16" height="14"><path d="M0 0 H16 L8 14 Z" fill="#888"/><path d="M4 2 H12 L8 10 Z" fill="#444"/></svg>
<div style="left:47px;top:567px;width:201px;height:2px;background:#9c9c9c"></div>
<div style="left:47px;top:537px;width:2px;height:30px;background:#e8e8e8"></div>
<div class="t" style="left:49.43px;top:539.21px;font:25.5px/25.5px 'Liberation Sans', sans-serif;color:#000;letter-spacing:0.000px;transform:scaleX(1.0923);transform-origin:0 0;">Instance</div>
<div style="left:18px;top:576px;width:230px;height:32px;background:#e0e0e0"></div>
<svg style="left:74px;top:604px;overflow:visible" width="2" height="91"><path d="M1 0 V91" stroke="#888" stroke-width="1.5" stroke-dasharray="2 2"/></svg>
<svg style="left:75px;top:694px;overflow:visible" width="21" height="2"><path d="M0 1 H21" stroke="#888" stroke-width="1.5" stroke-dasharray="2 2"/></svg>
<svg style="left:49px;top:591px;overflow:visible" width="13" height="2"><path d="M0 1 H13" stroke="#888" stroke-width="1.5" stroke-dasharray="2 2"/></svg>
<svg style="left:28px;top:582px;overflow:visible" width="22" height="22"><rect x="1" y="1" width="20" height="20" rx="3" fill="url(#gexp)" stroke="#9098b0" stroke-width="1.5"/><path d="M5.0 11.0 H17.0" stroke="#000" stroke-width="2.2"/></svg>
<svg style="left:62px;top:580px;overflow:visible" width="24" height="24"><path d="M0 0 H24 L0 24 Z" fill="#a6e8f8"/><path d="M24 0 V24 H0 Z" fill="#0f6a90"/><rect x="6.0" y="6.0" width="12.0" height="12.0" fill="#00c2f0"/><path d="M0 24 L6.0 18.0 M18.0 6.0 L24 0" stroke="#000" stroke-width="2"/></svg>
<div class="t" style="left:100.08px;top:577.91px;font:25.5px/25.5px 'Liberation Sans', sans-serif;color:#000;letter-spacing:0.000px;transform:scaleX(1.0772);transform-origin:0 0;">tb_de1_gui</div>
<svg style="left:85px;top:625px;overflow:visible" width="13" height="2"><path d="M0 1 H13" stroke="#888" stroke-width="1.5" stroke-dasharray="2 2"/></svg>
<svg style="left:64px;top:616px;overflow:visible" width="22" height="22"><rect x="1" y="1" width="20" height="20" rx="3" fill="url(#gexp)" stroke="#9098b0" stroke-width="1.5"/><path d="M5.0 11.0 H17.0" stroke="#000" stroke-width="2.2"/><path d="M11.0 5.0 V17.0" stroke="#000" stroke-width="2.2"/></svg>
<svg style="left:98px;top:614px;overflow:visible" width="24" height="24"><path d="M0 0 H24 L0 24 Z" fill="#a6e8f8"/><path d="M24 0 V24 H0 Z" fill="#0f6a90"/><rect x="6.0" y="6.0" width="12.0" height="12.0" fill="#00c2f0"/><path d="M0 24 L6.0 18.0 M18.0 6.0 L24 0" stroke="#000" stroke-width="2"/></svg>
<div class="t" style="left:135.27px;top:611.91px;font:25.5px/25.5px 'Liberation Sans', sans-serif;color:#000;letter-spacing:0.901px;transform:scaleX(1.1500);transform-origin:0 0;">gui</div>
<svg style="left:85px;top:659px;overflow:visible" width="13" height="2"><path d="M0 1 H13" stroke="#888" stroke-width="1.5" stroke-dasharray="2 2"/></svg>
<svg style="left:64px;top:650px;overflow:visible" width="22" height="22"><rect x="1" y="1" width="20" height="20" rx="3" fill="url(#gexp)" stroke="#9098b0" stroke-width="1.5"/><path d="M5.0 11.0 H17.0" stroke="#000" stroke-width="2.2"/><path d="M11.0 5.0 V17.0" stroke="#000" stroke-width="2.2"/></svg>
<svg style="left:98px;top:648px;overflow:visible" width="24" height="24"><path d="M0 0 H24 L0 24 Z" fill="#a6e8f8"/><path d="M24 0 V24 H0 Z" fill="#0f6a90"/><rect x="6.0" y="6.0" width="12.0" height="12.0" fill="#00c2f0"/><path d="M0 24 L6.0 18.0 M18.0 6.0 L24 0" stroke="#000" stroke-width="2"/></svg>
<div class="t" style="left:135.27px;top:645.91px;font:25.5px/25.5px 'Liberation Sans', sans-serif;color:#000;letter-spacing:0.946px;transform:scaleX(1.1500);transform-origin:0 0;">dut</div>
<svg style="left:96px;top:680px;overflow:visible" width="26" height="26"><defs><radialGradient id="gball" cx="0.35" cy="0.3" r="0.7"><stop offset="0" stop-color="#e0f8ff"/><stop offset="0.3" stop-color="#40c0f0"/><stop offset="1" stop-color="#1080a8"/></radialGradient></defs><circle cx="13" cy="13" r="12.5" fill="url(#gball)"/></svg>
<div style="left:0;top:0;width:1624px;height:1402px;clip-path:inset(570px 1376px 362px 18px)">
<div class="t" style="left:135.88px;top:679.91px;font:25.5px/25.5px 'Liberation Sans', sans-serif;color:#000;letter-spacing:0.000px;transform:scaleX(1.0505);transform-origin:0 0;">#INITIAL</div>
<div class="t" style="left:241.89px;top:679.91px;font:25.5px/25.5px 'Liberation Sans', sans-serif;color:#000;letter-spacing:0.000px;">#</div>
</div>
<svg style="left:49px;top:727px;overflow:visible" width="13" height="2"><path d="M0 1 H13" stroke="#888" stroke-width="1.5" stroke-dasharray="2 2"/></svg>
<svg style="left:28px;top:718px;overflow:visible" width="22" height="22"><rect x="1" y="1" width="20" height="20" rx="3" fill="url(#gexp)" stroke="#9098b0" stroke-width="1.5"/><path d="M5.0 11.0 H17.0" stroke="#000" stroke-width="2.2"/><path d="M11.0 5.0 V17.0" stroke="#000" stroke-width="2.2"/></svg>
<svg style="left:62px;top:716px;overflow:visible" width="24" height="24"><path d="M0 0 H24 L0 24 Z" fill="#a6e8f8"/><path d="M24 0 V24 H0 Z" fill="#0f6a90"/><rect x="6.0" y="6.0" width="12.0" height="12.0" fill="#00c2f0"/><path d="M0 24 L6.0 18.0 M18.0 6.0 L24 0" stroke="#000" stroke-width="2"/></svg>
<div class="t" style="left:99.70px;top:713.91px;font:25.5px/25.5px 'Liberation Sans', sans-serif;color:#000;letter-spacing:0.000px;transform:scaleX(1.1238);transform-origin:0 0;">std</div>
<svg style="left:49px;top:761px;overflow:visible" width="13" height="2"><path d="M0 1 H13" stroke="#888" stroke-width="1.5" stroke-dasharray="2 2"/></svg>
<svg style="left:28px;top:752px;overflow:visible" width="22" height="22"><rect x="1" y="1" width="20" height="20" rx="3" fill="url(#gexp)" stroke="#9098b0" stroke-width="1.5"/><path d="M5.0 11.0 H17.0" stroke="#000" stroke-width="2.2"/><path d="M11.0 5.0 V17.0" stroke="#000" stroke-width="2.2"/></svg>
<svg style="left:62px;top:750px;overflow:visible" width="24" height="24"><path d="M0 0 H24 L0 24 Z" fill="#a6e8f8"/><path d="M24 0 V24 H0 Z" fill="#0f6a90"/><rect x="6.0" y="6.0" width="12.0" height="12.0" fill="#00c2f0"/><path d="M0 24 L6.0 18.0 M18.0 6.0 L24 0" stroke="#000" stroke-width="2"/></svg>
<div class="t" style="left:98.59px;top:747.91px;font:25.5px/25.5px 'Liberation Sans', sans-serif;color:#000;letter-spacing:0.000px;transform:scaleX(1.1285);transform-origin:0 0;">mti_fli</div>
<svg style="left:58px;top:780px;overflow:visible" width="32" height="32"><path d="M1 0 V31 H32" fill="none" stroke="#1030d0" stroke-width="2.5"/><path d="M6 14 Q17 2 28 14" fill="none" stroke="#e02020" stroke-width="4"/><path d="M12 6 L24 14 M24 6 L14 14" stroke="#20a8e0" stroke-width="3"/><path d="M6 27 Q17 15 28 27" fill="none" stroke="#30b030" stroke-width="4"/></svg>
<div style="left:0;top:0;width:1624px;height:1402px;clip-path:inset(570px 1376px 362px 18px)">
<div class="t" style="left:102.18px;top:781.91px;font:25.5px/25.5px 'Liberation Sans', sans-serif;color:#000;letter-spacing:0.000px;transform:scaleX(1.0451);transform-origin:0 0;">#vsim_capa</div>
<div class="t" style="left:245.92px;top:781.91px;font:25.5px/25.5px 'Liberation Sans', sans-serif;color:#000;letter-spacing:0.000px;">c</div>
</div>
<div style="left:248px;top:576px;width:2px;height:464px;background:#fff"></div>
<div style="left:250px;top:535px;width:2px;height:541px;background:#e2e2e2"></div>
<div style="left:16px;top:1041px;width:236px;height:7px;background:#fff"></div>
<div style="left:17px;top:1048px;width:233px;height:26px;background:#bebebe;box-sizing:border-box;border-top:2px solid #9c9c9c;border-left:2px solid #9c9c9c"></div>
<svg style="left:19px;top:1050px;overflow:visible" width="22" height="22"><path d="M20 2 L2 11.0 L20 20 Z" fill="#fff"/><path d="M2 11.0 L20 20 V2" fill="none" stroke="#9c9c9c" stroke-width="2"/></svg>
<svg style="left:226px;top:1050px;overflow:visible" width="22" height="22"><path d="M2 2 L20 11.0 L2 20 Z" fill="#fff"/><path d="M20 11.0 L2 20" fill="none" stroke="#8a8a8a" stroke-width="2"/></svg>
<div style="left:43px;top:1051px;width:20px;height:21px;background:#fff;box-sizing:border-box;border-right:2px solid #9c9c9c;border-bottom:2px solid #9c9c9c"></div>
<div style="left:12px;top:1078px;width:242px;height:44px;background:#d9d9d9"></div>
<div style="left:12px;top:1079px;width:62px;height:42px;box-sizing:border-box;border-top:2px solid #000;border-right:2px solid #000;border-bottom:2px solid #000;background:#d9d9d9"></div>
<div class="t" style="left:11.42px;top:1084.41px;font:25.5px/25.5px 'Liberation Sans', sans-serif;color:#333;letter-spacing:0.000px;">ct</div>
<svg style="left:48px;top:1090px;overflow:visible" width="16" height="16"><path d="M2 2 L14 14 M14 2 L2 14" stroke="#bbb" stroke-width="3"/></svg>
<div style="left:72px;top:1078px;width:132px;height:43px;box-sizing:border-box;border-left:2px solid #000;border-right:2px solid #000;border-bottom:2px solid #000;border-radius:0 0 4px 4px;background:#fff"></div>
<div style="left:202px;top:1078px;width:8px;height:2px;background:#000"></div>
<svg style="left:84px;top:1082px;overflow:visible" width="32" height="32"><path d="M2 2 H8 M2 6 H8 M1 10 H7 M1 14 H6 M1 18 H5" stroke="#7878b8" stroke-width="2"/><path d="M12 1 H27 L31 7 V14 L27 26 H8 L11 14 Z" fill="#f4fcfc" stroke="#000" stroke-width="2.2"/><path d="M15 5 H25 M14 9 H25 M13 13 H24 M12 17 H23 M12 21 H22" stroke="#202060" stroke-width="2" stroke-dasharray="3 1"/><circle cx="7" cy="25" r="6" fill="#d80020" stroke="#000" stroke-width="2"/><path d="M7 20 V30 M2 25 H12" stroke="#000" stroke-width="1"/><circle cx="27" cy="27" r="4.5" fill="#d80020" stroke="#000" stroke-width="2"/></svg>
<div class="t" style="left:123.75px;top:1084.41px;font:25.5px/25.5px 'Liberation Sans', sans-serif;color:#000;letter-spacing:0.000px;transform:scaleX(1.0542);transform-origin:0 0;">sim</div>
<svg style="left:177px;top:1090px;overflow:visible" width="16" height="16"><path d="M2 2 L14 14 M14 2 L2 14" stroke="#bbb" stroke-width="3"/></svg>
<div style="left:212px;top:1081px;width:18px;height:29px;background:#fff"></div>
<div style="left:234px;top:1081px;width:19px;height:29px;background:#fff"></div>
<div style="left:212px;top:1081px;width:18px;height:29px;box-sizing:border-box;border:2px solid;border-color:#e2e2e2 #9c9c9c #9c9c9c #e2e2e2"></div>
<div style="left:234px;top:1081px;width:19px;height:29px;box-sizing:border-box;border:2px solid;border-color:#e2e2e2 #9c9c9c #9c9c9c #e2e2e2"></div>
<svg style="left:216px;top:1089px;overflow:visible" width="10" height="14"><path d="M10 0 V14 L0 7 Z" fill="#000"/></svg>
<svg style="left:239px;top:1090px;overflow:visible" width="8" height="12"><path d="M1 1 L6 6 L1 11 M3 1 L8 6 L3 11" fill="none" stroke="#000" stroke-width="1.5"/></svg>
<div style="left:266px;top:493px;width:291px;height:307px;box-sizing:border-box;border:2px solid #9c9c9c;background:#fff"></div>
<div style="left:268px;top:532px;width:287px;height:2px;background:#9c9c9c"></div>
<svg style="left:272px;top:498px;overflow:visible" width="32" height="32"><path d="M2 8 L10 0 L16 6 V10 H2 Z" fill="#b030e0"/><path d="M0 22 L9 13 L18 22 L9 31 Z" fill="#0a50e8"/><rect x="16" y="12" width="16" height="14" fill="#20a040"/><ellipse cx="16" cy="12" rx="8" ry="6" fill="#20d8f8" stroke="#5090a0" stroke-width="1.5"/></svg>
<div class="t" style="left:303.71px;top:499.91px;font:25.5px/25.5px 'Liberation Sans', sans-serif;color:#000;letter-spacing:0.000px;transform:scaleX(1.0721);transform-origin:0 0;">Objects</div>
<div style="left:304px;top:500px;width:6.5px;height:28px;background:#fff"></div>
<svg style="left:404px;top:508px;overflow:visible" width="40" height="16"><rect x="0" y="0" width="2" height="2" fill="#000"/><rect x="6" y="0" width="2" height="2" fill="#000"/><rect x="12" y="0" width="2" height="2" fill="#000"/><rect x="18" y="0" width="2" height="2" fill="#000"/><rect x="24" y="0" width="2" height="2" fill="#000"/><rect x="30" y="0" width="2" height="2" fill="#000"/><rect x="3" y="6" width="2" height="2" fill="#000"/><rect x="9" y="6" width="2" height="2" fill="#000"/><rect x="15" y="6" width="2" height="2" fill="#000"/><rect x="21" y="6" width="2" height="2" fill="#000"/><rect x="27" y="6" width="2" height="2" fill="#000"/><rect x="33" y="6" width="2" height="2" fill="#000"/><rect x="0" y="12" width="2" height="2" fill="#000"/><rect x="6" y="12" width="2" height="2" fill="#000"/><rect x="12" y="12" width="2" height="2" fill="#000"/><rect x="18" y="12" width="2" height="2" fill="#000"/><rect x="24" y="12" width="2" height="2" fill="#000"/><rect x="30" y="12" width="2" height="2" fill="#000"/></svg>
<div style="left:449px;top:501px;width:24px;height:24px;box-sizing:border-box;border:2px solid;border-color:#e2e2e2 #9c9c9c #9c9c9c #e2e2e2"></div>
<svg style="left:449px;top:501px;overflow:visible" width="24" height="24"><path d="M12 4.0 V20.0 M4 12.0 H20" stroke="#000" stroke-width="3.5"/></svg>
<div style="left:485px;top:501px;width:24px;height:24px;box-sizing:border-box;border:2px solid;border-color:#e2e2e2 #9c9c9c #9c9c9c #e2e2e2"></div>
<svg style="left:485px;top:501px;overflow:visible" width="24" height="24"><rect x="5" y="11.0" width="8" height="8" fill="none" stroke="#000" stroke-width="2.2"/><rect x="8" y="14.0" width="2" height="2" fill="#000"/><path d="M9 15.0 L18 6.0" stroke="#000" stroke-width="2.5"/><path d="M12 4.0 H19 V11.0" fill="none" stroke="#000" stroke-width="2.5"/></svg>
<div style="left:522px;top:501px;width:24px;height:24px;box-sizing:border-box;border:2px solid;border-color:#e2e2e2 #9c9c9c #9c9c9c #e2e2e2"></div>
<svg style="left:522px;top:501px;overflow:visible" width="24" height="24"><path d="M5 5.0 L19 19.0 M19 5.0 L5 19.0" stroke="#000" stroke-width="3"/></svg>
<div style="left:271px;top:535px;width:251px;height:234px;background:#fff"></div>
<div style="left:275px;top:537px;width:23px;height:30px;box-sizing:border-box;border:2px solid;border-color:#e2e2e2 #9c9c9c #9c9c9c #e2e2e2"></div>
<svg style="left:279px;top:544px;overflow:visible" width="16" height="14"><path d="M0 0 H16 L8 14 Z" fill="#888"/><path d="M4 2 H12 L8 10 Z" fill="#444"/></svg>
<div class="t" style="left:303.31px;top:537.91px;font:25.5px/25.5px 'Liberation Sans', sans-serif;color:#000;letter-spacing:0.000px;">Na</div>
<div style="left:332px;top:536px;width:162px;height:32px;background:#9c9c9c"></div>
<div style="left:334px;top:538px;width:36px;height:28px;background:#fff"></div>
<div style="left:336px;top:540px;width:32px;height:24px;background:#e2ebe2"></div>
<div style="left:372px;top:538px;width:82px;height:28px;background:#e2ebe2"></div>
<div style="left:456px;top:538px;width:36px;height:28px;background:#fff"></div>
<div style="left:458px;top:540px;width:32px;height:24px;background:#e2ebe2"></div>
<svg style="left:342px;top:541px;overflow:visible" width="24" height="22"><path d="M1 1 H5 V21 H14" fill="none" stroke="#000" stroke-width="2"/><path d="M8 9 L15 2 V6 H23 V12 H15 V16 Z" fill="#777"/></svg>
<div style="left:382px;top:545px;width:16px;height:14px;background:#ff8000;border:2px solid #000;box-sizing:border-box"></div>
<div class="t" style="left:404.82px;top:537.91px;font:25.5px/25.5px 'Liberation Sans', sans-serif;color:#888;letter-spacing:-0.022px;transform:scaleX(0.8500);transform-origin:0 0;">Now</div>
<svg style="left:462px;top:541px;overflow:visible" width="26" height="22"><path d="M24 1 H18 V21 H8" fill="none" stroke="#000" stroke-width="2"/><path d="M16 9 L9 2 V6 H1 V12 H9 V16 Z" fill="#777"/></svg>
<svg style="left:506px;top:545px;overflow:visible" width="9" height="17"><path d="M0 0 L9 8.5 L0 17 Z" fill="#000"/></svg>
<div style="left:271px;top:567px;width:251px;height:2px;background:#9c9c9c"></div>
<div style="left:271px;top:569px;width:250px;height:7px;background:#4a5590"></div>
<div style="left:271px;top:576px;width:250px;height:33px;background:#e0e0e0"></div>
<div style="left:271px;top:609px;width:250px;height:1px;background:#4a5a98"></div>
<div style="left:271px;top:610px;width:250px;height:33px;background:#e0e0e0"></div>
<div style="left:271px;top:643px;width:250px;height:1px;background:#4a5a98"></div>
<div style="left:271px;top:644px;width:250px;height:33px;background:#e0e0e0"></div>
<div style="left:271px;top:677px;width:250px;height:1px;background:#4a5a98"></div>
<div style="left:271px;top:678px;width:250px;height:33px;background:#e0e0e0"></div>
<div style="left:271px;top:711px;width:250px;height:1px;background:#4a5a98"></div>
<div style="left:271px;top:712px;width:250px;height:33px;background:#e0e0e0"></div>
<div style="left:271px;top:745px;width:250px;height:1px;background:#4a5a98"></div>
<div style="left:271px;top:746px;width:250px;height:17px;background:#e0e0e0"></div>
<div style="left:271px;top:779px;width:250px;height:1px;background:#4a5a98"></div>
<div style="left:271px;top:576px;width:250px;height:188px;overflow:hidden"></div>
<svg style="left:312px;top:576px;overflow:visible" width="30" height="30"><path d="M15.0 0 L30 15.0 L15.0 15.0 Z" fill="#1aa0e0"/><path d="M15.0 0 L0 15.0 L15.0 15.0 Z" fill="#8ee0fa"/><path d="M0 15.0 L15.0 30 L15.0 15.0 Z" fill="#1888c8"/><path d="M30 15.0 L15.0 30 L15.0 15.0 Z" fill="#0e5e90"/><path d="M15.0 6.6 L23.400000000000002 15.0 L15.0 23.400000000000002 L6.6 15.0 Z" fill="#12c0f4"/></svg>
<div class="t" style="left:351.19px;top:578.41px;font:25.5px/25.5px 'Liberation Sans', sans-serif;color:#000;letter-spacing:0.000px;transform:scaleX(0.9349);transform-origin:0 0;">CLK</div>
<svg style="left:282px;top:616px;overflow:visible" width="22" height="22"><rect x="1" y="1" width="20" height="20" rx="3" fill="url(#gexp)" stroke="#9098b0" stroke-width="1.5"/><path d="M5.0 11.0 H17.0" stroke="#000" stroke-width="2.2"/><path d="M11.0 5.0 V17.0" stroke="#000" stroke-width="2.2"/></svg>
<svg style="left:312px;top:610px;overflow:visible" width="30" height="30"><path d="M15.0 0 L30 15.0 L15.0 15.0 Z" fill="#1aa0e0"/><path d="M15.0 0 L0 15.0 L15.0 15.0 Z" fill="#8ee0fa"/><path d="M0 15.0 L15.0 30 L15.0 15.0 Z" fill="#1888c8"/><path d="M30 15.0 L15.0 30 L15.0 15.0 Z" fill="#0e5e90"/><path d="M15.0 6.6 L23.400000000000002 15.0 L15.0 23.400000000000002 L6.6 15.0 Z" fill="#12c0f4"/></svg>
<div class="t" style="left:350.41px;top:612.41px;font:25.5px/25.5px 'Liberation Sans', sans-serif;color:#000;letter-spacing:0.000px;transform:scaleX(0.9508);transform-origin:0 0;">KEY</div>
<svg style="left:282px;top:650px;overflow:visible" width="22" height="22"><rect x="1" y="1" width="20" height="20" rx="3" fill="url(#gexp)" stroke="#9098b0" stroke-width="1.5"/><path d="M5.0 11.0 H17.0" stroke="#000" stroke-width="2.2"/><path d="M11.0 5.0 V17.0" stroke="#000" stroke-width="2.2"/></svg>
<svg style="left:312px;top:644px;overflow:visible" width="30" height="30"><path d="M15.0 0 L30 15.0 L15.0 15.0 Z" fill="#1aa0e0"/><path d="M15.0 0 L0 15.0 L15.0 15.0 Z" fill="#8ee0fa"/><path d="M0 15.0 L15.0 30 L15.0 15.0 Z" fill="#1888c8"/><path d="M30 15.0 L15.0 30 L15.0 15.0 Z" fill="#0e5e90"/><path d="M15.0 6.6 L23.400000000000002 15.0 L15.0 23.400000000000002 L6.6 15.0 Z" fill="#12c0f4"/></svg>
<div class="t" style="left:351.28px;top:646.41px;font:25.5px/25.5px 'Liberation Sans', sans-serif;color:#000;letter-spacing:0.000px;transform:scaleX(0.9690);transform-origin:0 0;">SW</div>
<svg style="left:282px;top:684px;overflow:visible" width="22" height="22"><rect x="1" y="1" width="20" height="20" rx="3" fill="url(#gexp)" stroke="#9098b0" stroke-width="1.5"/><path d="M5.0 11.0 H17.0" stroke="#000" stroke-width="2.2"/><path d="M11.0 5.0 V17.0" stroke="#000" stroke-width="2.2"/></svg>
<svg style="left:312px;top:678px;overflow:visible" width="30" height="30"><path d="M15.0 0 L30 15.0 L15.0 15.0 Z" fill="#1aa0e0"/><path d="M15.0 0 L0 15.0 L15.0 15.0 Z" fill="#8ee0fa"/><path d="M0 15.0 L15.0 30 L15.0 15.0 Z" fill="#1888c8"/><path d="M30 15.0 L15.0 30 L15.0 15.0 Z" fill="#0e5e90"/><path d="M15.0 6.6 L23.400000000000002 15.0 L15.0 23.400000000000002 L6.6 15.0 Z" fill="#12c0f4"/></svg>
<div class="t" style="left:350.37px;top:680.41px;font:25.5px/25.5px 'Liberation Sans', sans-serif;color:#000;letter-spacing:0.000px;transform:scaleX(0.9713);transform-origin:0 0;">LEDR</div>
<svg style="left:282px;top:718px;overflow:visible" width="22" height="22"><rect x="1" y="1" width="20" height="20" rx="3" fill="url(#gexp)" stroke="#9098b0" stroke-width="1.5"/><path d="M5.0 11.0 H17.0" stroke="#000" stroke-width="2.2"/><path d="M11.0 5.0 V17.0" stroke="#000" stroke-width="2.2"/></svg>
<svg style="left:312px;top:712px;overflow:visible" width="30" height="30"><path d="M15.0 0 L30 15.0 L15.0 15.0 Z" fill="#1aa0e0"/><path d="M15.0 0 L0 15.0 L15.0 15.0 Z" fill="#8ee0fa"/><path d="M0 15.0 L15.0 30 L15.0 15.0 Z" fill="#1888c8"/><path d="M30 15.0 L15.0 30 L15.0 15.0 Z" fill="#0e5e90"/><path d="M15.0 6.6 L23.400000000000002 15.0 L15.0 23.400000000000002 L6.6 15.0 Z" fill="#12c0f4"/></svg>
<div class="t" style="left:350.29px;top:714.41px;font:25.5px/25.5px 'Liberation Sans', sans-serif;color:#000;letter-spacing:0.000px;transform:scaleX(1.0073);transform-origin:0 0;">HEX0</div>
<div style="left:271px;top:745px;width:250px;height:17px;overflow:hidden"><svg style="left:11px;top:12px" width="22" height="21"><rect x="1" y="1" width="20" height="19" rx="3" fill="url(#gexp)" stroke="#9098b0" stroke-width="1.5"/><path d="M5 10.5 H17 M11 4.5 V16.5" stroke="#000" stroke-width="2.2"/></svg><svg style="left:41px;top:0px" width="30" height="30"><path d="M15 0 L30 15 L15 15 Z" fill="#1aa0e0"/><path d="M15 0 L0 15 L15 15 Z" fill="#8ee0fa"/><path d="M15 6.6 L23.4 15 L6.6 15 Z" fill="#12c0f4"/></svg><div class="t" style="left:81px;top:4px;font:25.5px/25.5px 'Liberation Sans';color:#000">HEX1</div></div>
<div style="left:271px;top:762px;width:250px;height:2px;background:#4a5a98"></div>
<div style="left:271px;top:764px;width:251px;height:8px;background:#fff"></div>
<div style="left:271px;top:773px;width:251px;height:24px;background:#bebebe;box-sizing:border-box;border-top:2px solid #9c9c9c;border-left:2px solid #9c9c9c"></div>
<svg style="left:273px;top:775px;overflow:visible" width="22" height="20"><path d="M20 2 L2 10.0 L20 18 Z" fill="#fff"/><path d="M2 10.0 L20 18 V2" fill="none" stroke="#9c9c9c" stroke-width="2"/></svg>
<svg style="left:498px;top:775px;overflow:visible" width="22" height="20"><path d="M2 2 L20 10.0 L2 18 Z" fill="#fff"/><path d="M20 10.0 L2 18" fill="none" stroke="#8a8a8a" stroke-width="2"/></svg>
<div style="left:297px;top:776px;width:40px;height:19px;background:#fff;box-sizing:border-box;border-right:2px solid #9c9c9c;border-bottom:2px solid #9c9c9c"></div>
<div style="left:528px;top:535px;width:26px;height:231px;background:#bebebe;box-sizing:border-box;border-top:2px solid #9c9c9c;border-left:2px solid #9c9c9c"></div>
<svg style="left:530px;top:537px;overflow:visible" width="22" height="22"><path d="M2 20 L11.0 2 L20 20 Z" fill="#fff"/><path d="M20 20 H2" stroke="#9c9c9c" stroke-width="2"/></svg>
<svg style="left:530px;top:742px;overflow:visible" width="22" height="22"><path d="M2 2 L11.0 20 L20 2 Z" fill="#fff"/><path d="M11.0 20 L20 2" stroke="#8a8a8a" stroke-width="2"/></svg>
<div style="left:531px;top:561px;width:21px;height:94px;background:#fff;box-sizing:border-box;border-right:2px solid #9c9c9c;border-bottom:2px solid #9c9c9c"></div>
<div style="left:266px;top:815px;width:291px;height:307px;box-sizing:border-box;border:2px solid #9c9c9c;background:#fff"></div>
<div style="left:268px;top:854px;width:287px;height:2px;background:#9c9c9c"></div>
<svg style="left:272px;top:820px;overflow:visible" width="32" height="32"><g transform="translate(16 16)"><rect x="-3.5" y="-16" width="7" height="8" fill="#3a6a98" transform="rotate(0)"/><rect x="-3.5" y="-16" width="7" height="8" fill="#3a6a98" transform="rotate(45)"/><rect x="-3.5" y="-16" width="7" height="8" fill="#3a6a98" transform="rotate(90)"/><rect x="-3.5" y="-16" width="7" height="8" fill="#3a6a98" transform="rotate(135)"/><rect x="-3.5" y="-16" width="7" height="8" fill="#3a6a98" transform="rotate(180)"/><rect x="-3.5" y="-16" width="7" height="8" fill="#3a6a98" transform="rotate(225)"/><rect x="-3.5" y="-16" width="7" height="8" fill="#3a6a98" transform="rotate(270)"/><rect x="-3.5" y="-16" width="7" height="8" fill="#3a6a98" transform="rotate(315)"/><circle r="11" fill="#3a6a98"/><circle r="9" fill="#5a8ab8"/><circle r="4" fill="#fff"/></g></svg>
<div class="t" style="left:313.65px;top:821.91px;font:25.5px/25.5px 'Liberation Sans', sans-serif;color:#000;letter-spacing:0.000px;transform:scaleX(1.0471);transform-origin:0 0;">Active)</div>
<svg style="left:404px;top:830px;overflow:visible" width="40" height="16"><rect x="0" y="0" width="2" height="2" fill="#000"/><rect x="6" y="0" width="2" height="2" fill="#000"/><rect x="12" y="0" width="2" height="2" fill="#000"/><rect x="18" y="0" width="2" height="2" fill="#000"/><rect x="24" y="0" width="2" height="2" fill="#000"/><rect x="30" y="0" width="2" height="2" fill="#000"/><rect x="3" y="6" width="2" height="2" fill="#000"/><rect x="9" y="6" width="2" height="2" fill="#000"/><rect x="15" y="6" width="2" height="2" fill="#000"/><rect x="21" y="6" width="2" height="2" fill="#000"/><rect x="27" y="6" width="2" height="2" fill="#000"/><rect x="33" y="6" width="2" height="2" fill="#000"/><rect x="0" y="12" width="2" height="2" fill="#000"/><rect x="6" y="12" width="2" height="2" fill="#000"/><rect x="12" y="12" width="2" height="2" fill="#000"/><rect x="18" y="12" width="2" height="2" fill="#000"/><rect x="24" y="12" width="2" height="2" fill="#000"/><rect x="30" y="12" width="2" height="2" fill="#000"/></svg>
<div style="left:449px;top:823px;width:24px;height:24px;box-sizing:border-box;border:2px solid;border-color:#e2e2e2 #9c9c9c #9c9c9c #e2e2e2"></div>
<svg style="left:449px;top:823px;overflow:visible" width="24" height="24"><path d="M12 4.0 V20.0 M4 12.0 H20" stroke="#000" stroke-width="3.5"/></svg>
<div style="left:485px;top:823px;width:24px;height:24px;box-sizing:border-box;border:2px solid;border-color:#e2e2e2 #9c9c9c #9c9c9c #e2e2e2"></div>
<svg style="left:485px;top:823px;overflow:visible" width="24" height="24"><rect x="5" y="11.0" width="8" height="8" fill="none" stroke="#000" stroke-width="2.2"/><rect x="8" y="14.0" width="2" height="2" fill="#000"/><path d="M9 15.0 L18 6.0" stroke="#000" stroke-width="2.5"/><path d="M12 4.0 H19 V11.0" fill="none" stroke="#000" stroke-width="2.5"/></svg>
<div style="left:522px;top:823px;width:24px;height:24px;box-sizing:border-box;border:2px solid;border-color:#e2e2e2 #9c9c9c #9c9c9c #e2e2e2"></div>
<svg style="left:522px;top:823px;overflow:visible" width="24" height="24"><path d="M5 5.0 L19 19.0 M19 5.0 L5 19.0" stroke="#000" stroke-width="3"/></svg>
<div style="left:271px;top:857px;width:251px;height:236px;background:#fff"></div>
<div style="left:275px;top:859px;width:23px;height:30px;box-sizing:border-box;border:2px solid;border-color:#e2e2e2 #9c9c9c #9c9c9c #e2e2e2"></div>
<svg style="left:279px;top:866px;overflow:visible" width="16" height="14"><path d="M0 0 H16 L8 14 Z" fill="#888"/><path d="M4 2 H12 L8 10 Z" fill="#444"/></svg>
<div class="t" style="left:303.22px;top:859.91px;font:25.5px/25.5px 'Liberation Sans', sans-serif;color:#000;letter-spacing:0.000px;transform:scaleX(1.0431);transform-origin:0 0;">Name</div>
<div style="left:271px;top:889px;width:250px;height:3px;background:#9c9c9c"></div>
<div style="left:271px;top:892px;width:250px;height:194px;background:#8aa2fc"></div>
<div style="left:271px;top:1094px;width:251px;height:25px;background:#bebebe;box-sizing:border-box;border-top:2px solid #9c9c9c;border-left:2px solid #9c9c9c"></div>
<svg style="left:273px;top:1096px;overflow:visible" width="22" height="21"><path d="M20 2 L2 10.5 L20 19 Z" fill="#fff"/><path d="M2 10.5 L20 19 V2" fill="none" stroke="#9c9c9c" stroke-width="2"/></svg>
<svg style="left:498px;top:1096px;overflow:visible" width="22" height="21"><path d="M2 2 L20 10.5 L2 19 Z" fill="#fff"/><path d="M20 10.5 L2 19" fill="none" stroke="#8a8a8a" stroke-width="2"/></svg>
<div style="left:297px;top:1097px;width:23px;height:20px;background:#fff;box-sizing:border-box;border-right:2px solid #9c9c9c;border-bottom:2px solid #9c9c9c"></div>
<div style="left:528px;top:859px;width:26px;height:228px;background:#bebebe;box-sizing:border-box;border-top:2px solid #9c9c9c;border-left:2px solid #9c9c9c"></div>
<svg style="left:530px;top:861px;overflow:visible" width="22" height="22"><path d="M2 20 L11.0 2 L20 20 Z" fill="#fff"/><path d="M20 20 H2" stroke="#9c9c9c" stroke-width="2"/></svg>
<svg style="left:530px;top:1063px;overflow:visible" width="22" height="22"><path d="M2 2 L11.0 20 L20 2 Z" fill="#fff"/><path d="M11.0 20 L20 2" stroke="#8a8a8a" stroke-width="2"/></svg>
<div style="left:531px;top:884px;width:21px;height:178px;background:#fff;box-sizing:border-box;border-right:2px solid #9c9c9c;border-bottom:2px solid #9c9c9c"></div>
<div style="left:571px;top:493px;width:1041px;height:629px;box-sizing:border-box;border:2px solid #9c9c9c;background:#fff"></div>
<svg style="left:578px;top:500px;overflow:visible" width="30" height="30"><rect x="1" y="1" width="28" height="28" fill="#fff" stroke="#000" stroke-width="2"/><rect x="2" y="2" width="26" height="5" fill="#fff"/><rect x="2" y="7" width="26" height="2" fill="#888"/><rect x="3" y="10" width="24" height="17" fill="#000"/><path d="M3 20 H7 V14 H13 V20 H18 V14 H26" fill="none" stroke="#0c0" stroke-width="2"/><path d="M12 10 V27" stroke="#20e0e0" stroke-width="2"/><path d="M14 24 H27" stroke="#6020e0" stroke-width="2"/></svg>
<div class="t" style="left:616.88px;top:499.91px;font:25.5px/25.5px 'Liberation Sans', sans-serif;color:#000;letter-spacing:0.000px;transform:scaleX(1.0394);transform-origin:0 0;">Wave - Default</div>
<div style="left:803px;top:506px;width:323px;height:2px;background:#e6e6e6"></div>
<div style="left:804px;top:510px;width:322px;height:2px;background:#8e8e8e"></div>
<div style="left:803px;top:516px;width:323px;height:2px;background:#e6e6e6"></div>
<div style="left:804px;top:520px;width:322px;height:2px;background:#8e8e8e"></div>
<div style="left:1170px;top:506px;width:322px;height:2px;background:#e6e6e6"></div>
<div style="left:1171px;top:510px;width:321px;height:2px;background:#8e8e8e"></div>
<div style="left:1170px;top:516px;width:322px;height:2px;background:#e6e6e6"></div>
<div style="left:1171px;top:520px;width:321px;height:2px;background:#8e8e8e"></div>
<svg style="left:1132px;top:507px;overflow:visible" width="40" height="16"><rect x="0" y="0" width="2" height="2" fill="#000"/><rect x="6" y="0" width="2" height="2" fill="#000"/><rect x="12" y="0" width="2" height="2" fill="#000"/><rect x="18" y="0" width="2" height="2" fill="#000"/><rect x="24" y="0" width="2" height="2" fill="#000"/><rect x="30" y="0" width="2" height="2" fill="#000"/><rect x="3" y="6" width="2" height="2" fill="#000"/><rect x="9" y="6" width="2" height="2" fill="#000"/><rect x="15" y="6" width="2" height="2" fill="#000"/><rect x="21" y="6" width="2" height="2" fill="#000"/><rect x="27" y="6" width="2" height="2" fill="#000"/><rect x="33" y="6" width="2" height="2" fill="#000"/><rect x="0" y="12" width="2" height="2" fill="#000"/><rect x="6" y="12" width="2" height="2" fill="#000"/><rect x="12" y="12" width="2" height="2" fill="#000"/><rect x="18" y="12" width="2" height="2" fill="#000"/><rect x="24" y="12" width="2" height="2" fill="#000"/><rect x="30" y="12" width="2" height="2" fill="#000"/></svg>
<div style="left:1503px;top:501px;width:24px;height:25px;box-sizing:border-box;border:2px solid;border-color:#e2e2e2 #9c9c9c #9c9c9c #e2e2e2"></div>
<svg style="left:1503px;top:501px;overflow:visible" width="24" height="25"><path d="M12 4.5 V20.5 M4 12.5 H20" stroke="#000" stroke-width="3.5"/></svg>
<div style="left:1539px;top:501px;width:24px;height:25px;box-sizing:border-box;border:2px solid;border-color:#e2e2e2 #9c9c9c #9c9c9c #e2e2e2"></div>
<svg style="left:1539px;top:501px;overflow:visible" width="24" height="25"><rect x="5" y="11.5" width="8" height="8" fill="none" stroke="#000" stroke-width="2.2"/><rect x="8" y="14.5" width="2" height="2" fill="#000"/><path d="M9 15.5 L18 6.5" stroke="#000" stroke-width="2.5"/><path d="M12 4.5 H19 V11.5" fill="none" stroke="#000" stroke-width="2.5"/></svg>
<div style="left:1577px;top:501px;width:24px;height:25px;box-sizing:border-box;border:2px solid;border-color:#e2e2e2 #9c9c9c #9c9c9c #e2e2e2"></div>
<svg style="left:1577px;top:501px;overflow:visible" width="24" height="25"><path d="M5 5.5 L19 19.5 M19 5.5 L5 19.5" stroke="#000" stroke-width="3"/></svg>
<div style="left:573px;top:533px;width:1037px;height:2px;background:#9c9c9c"></div>
<div style="left:577px;top:535px;width:317px;height:37px;background:#808080"></div>
<div style="left:594px;top:536px;width:62px;height:36px;box-sizing:border-box;border:2px solid #fff;border-bottom:none;background:#808080"></div>
<svg style="left:602px;top:538px;overflow:visible" width="32" height="32"><path d="M2 8 L10 0 L16 6 V10 H2 Z" fill="#b030e0"/><path d="M0 22 L9 13 L18 22 L9 31 Z" fill="#0a50e8"/><rect x="16" y="12" width="16" height="14" fill="#20a040"/><ellipse cx="16" cy="12" rx="8" ry="6" fill="#20d8f8" stroke="#5090a0" stroke-width="1.5"/></svg>
<svg style="left:642px;top:563px;overflow:visible" width="10" height="5"><path d="M0 0 H10 L5.0 5 Z" fill="#000"/></svg>
<div style="left:577px;top:572px;width:317px;height:5px;background:#fff"></div>
<div style="left:577px;top:572px;width:317px;height:2px;background:#ececec"></div>
<div style="left:594px;top:577px;width:300px;height:7px;background:#808080"></div>
<div style="left:577px;top:577px;width:17px;height:419px;background:#fff"></div>
<div style="left:594px;top:584px;width:300px;height:33px;background:#e0e0e0"></div>
<div style="left:900px;top:584px;width:200px;height:33px;background:#e0e0e0"></div>
<div style="left:594px;top:617px;width:300px;height:3px;background:#8a8a8a"></div>
<div style="left:900px;top:617px;width:200px;height:3px;background:#8a8a8a"></div>
<svg style="left:634px;top:586px;overflow:visible" width="30" height="30"><path d="M15.0 0 L30 15.0 L15.0 15.0 Z" fill="#1aa0e0"/><path d="M15.0 0 L0 15.0 L15.0 15.0 Z" fill="#8ee0fa"/><path d="M0 15.0 L15.0 30 L15.0 15.0 Z" fill="#1888c8"/><path d="M30 15.0 L15.0 30 L15.0 15.0 Z" fill="#0e5e90"/><path d="M15.0 6.6 L23.400000000000002 15.0 L15.0 23.400000000000002 L6.6 15.0 Z" fill="#12c0f4"/></svg>
<div class="t" style="left:673.40px;top:589.21px;font:25.5px/25.5px 'Liberation Sans', sans-serif;color:#000;letter-spacing:0.000px;transform:scaleX(1.0353);transform-origin:0 0;">/tb_de1_gui/CLK</div>
<div class="t" style="left:904.00px;top:589.21px;font:25.5px/25.5px 'Liberation Sans', sans-serif;color:#000;letter-spacing:0.000px;">0</div>
<div style="left:594px;top:620px;width:300px;height:33px;background:#e0e0e0"></div>
<div style="left:900px;top:620px;width:200px;height:33px;background:#e0e0e0"></div>
<div style="left:594px;top:653px;width:300px;height:3px;background:#8a8a8a"></div>
<div style="left:900px;top:653px;width:200px;height:3px;background:#8a8a8a"></div>
<svg style="left:604px;top:628px;overflow:visible" width="22" height="22"><rect x="1" y="1" width="20" height="20" rx="3" fill="url(#gexp)" stroke="#9098b0" stroke-width="1.5"/><path d="M5.0 11.0 H17.0" stroke="#000" stroke-width="2.2"/><path d="M11.0 5.0 V17.0" stroke="#000" stroke-width="2.2"/></svg>
<svg style="left:634px;top:622px;overflow:visible" width="30" height="30"><path d="M15.0 0 L30 15.0 L15.0 15.0 Z" fill="#1aa0e0"/><path d="M15.0 0 L0 15.0 L15.0 15.0 Z" fill="#8ee0fa"/><path d="M0 15.0 L15.0 30 L15.0 15.0 Z" fill="#1888c8"/><path d="M30 15.0 L15.0 30 L15.0 15.0 Z" fill="#0e5e90"/><path d="M15.0 6.6 L23.400000000000002 15.0 L15.0 23.400000000000002 L6.6 15.0 Z" fill="#12c0f4"/></svg>
<div class="t" style="left:673.40px;top:625.21px;font:25.5px/25.5px 'Liberation Sans', sans-serif;color:#000;letter-spacing:0.000px;transform:scaleX(1.0291);transform-origin:0 0;">/tb_de1_gui/KEY</div>
<div class="t" style="left:903.06px;top:625.21px;font:25.5px/25.5px 'Liberation Sans', sans-serif;color:#000;letter-spacing:3.836px;">1111</div>
<div style="left:594px;top:656px;width:300px;height:33px;background:#e0e0e0"></div>
<div style="left:900px;top:656px;width:200px;height:33px;background:#e0e0e0"></div>
<div style="left:594px;top:689px;width:300px;height:3px;background:#8a8a8a"></div>
<div style="left:900px;top:689px;width:200px;height:3px;background:#8a8a8a"></div>
<svg style="left:604px;top:664px;overflow:visible" width="22" height="22"><rect x="1" y="1" width="20" height="20" rx="3" fill="url(#gexp)" stroke="#9098b0" stroke-width="1.5"/><path d="M5.0 11.0 H17.0" stroke="#000" stroke-width="2.2"/><path d="M11.0 5.0 V17.0" stroke="#000" stroke-width="2.2"/></svg>
<svg style="left:634px;top:658px;overflow:visible" width="30" height="30"><path d="M15.0 0 L30 15.0 L15.0 15.0 Z" fill="#1aa0e0"/><path d="M15.0 0 L0 15.0 L15.0 15.0 Z" fill="#8ee0fa"/><path d="M0 15.0 L15.0 30 L15.0 15.0 Z" fill="#1888c8"/><path d="M30 15.0 L15.0 30 L15.0 15.0 Z" fill="#0e5e90"/><path d="M15.0 6.6 L23.400000000000002 15.0 L15.0 23.400000000000002 L6.6 15.0 Z" fill="#12c0f4"/></svg>
<div class="t" style="left:673.40px;top:661.21px;font:25.5px/25.5px 'Liberation Sans', sans-serif;color:#000;letter-spacing:0.000px;transform:scaleX(1.0421);transform-origin:0 0;">/tb_de1_gui/SW</div>
<div class="t" style="left:904.00px;top:661.21px;font:25.5px/25.5px 'Liberation Sans', sans-serif;color:#000;letter-spacing:2.007px;">0000000000</div>
<div style="left:594px;top:692px;width:300px;height:33px;background:#e0e0e0"></div>
<div style="left:900px;top:692px;width:200px;height:33px;background:#e0e0e0"></div>
<div style="left:594px;top:725px;width:300px;height:3px;background:#8a8a8a"></div>
<div style="left:900px;top:725px;width:200px;height:3px;background:#8a8a8a"></div>
<svg style="left:604px;top:700px;overflow:visible" width="22" height="22"><rect x="1" y="1" width="20" height="20" rx="3" fill="url(#gexp)" stroke="#9098b0" stroke-width="1.5"/><path d="M5.0 11.0 H17.0" stroke="#000" stroke-width="2.2"/><path d="M11.0 5.0 V17.0" stroke="#000" stroke-width="2.2"/></svg>
<svg style="left:634px;top:694px;overflow:visible" width="30" height="30"><path d="M15.0 0 L30 15.0 L15.0 15.0 Z" fill="#1aa0e0"/><path d="M15.0 0 L0 15.0 L15.0 15.0 Z" fill="#8ee0fa"/><path d="M0 15.0 L15.0 30 L15.0 15.0 Z" fill="#1888c8"/><path d="M30 15.0 L15.0 30 L15.0 15.0 Z" fill="#0e5e90"/><path d="M15.0 6.6 L23.400000000000002 15.0 L15.0 23.400000000000002 L6.6 15.0 Z" fill="#12c0f4"/></svg>
<div class="t" style="left:673.40px;top:697.21px;font:25.5px/25.5px 'Liberation Sans', sans-serif;color:#000;letter-spacing:0.000px;transform:scaleX(1.0346);transform-origin:0 0;">/tb_de1_gui/LEDR</div>
<div class="t" style="left:904.00px;top:697.21px;font:25.5px/25.5px 'Liberation Sans', sans-serif;color:#000;letter-spacing:2.007px;">0000000000</div>
<div style="left:594px;top:728px;width:300px;height:33px;background:#e0e0e0"></div>
<div style="left:900px;top:728px;width:200px;height:33px;background:#e0e0e0"></div>
<div style="left:594px;top:761px;width:300px;height:3px;background:#8a8a8a"></div>
<div style="left:900px;top:761px;width:200px;height:3px;background:#8a8a8a"></div>
<svg style="left:604px;top:736px;overflow:visible" width="22" height="22"><rect x="1" y="1" width="20" height="20" rx="3" fill="url(#gexp)" stroke="#9098b0" stroke-width="1.5"/><path d="M5.0 11.0 H17.0" stroke="#000" stroke-width="2.2"/><path d="M11.0 5.0 V17.0" stroke="#000" stroke-width="2.2"/></svg>
<svg style="left:634px;top:730px;overflow:visible" width="30" height="30"><path d="M15.0 0 L30 15.0 L15.0 15.0 Z" fill="#1aa0e0"/><path d="M15.0 0 L0 15.0 L15.0 15.0 Z" fill="#8ee0fa"/><path d="M0 15.0 L15.0 30 L15.0 15.0 Z" fill="#1888c8"/><path d="M30 15.0 L15.0 30 L15.0 15.0 Z" fill="#0e5e90"/><path d="M15.0 6.6 L23.400000000000002 15.0 L15.0 23.400000000000002 L6.6 15.0 Z" fill="#12c0f4"/></svg>
<div class="t" style="left:673.40px;top:733.21px;font:25.5px/25.5px 'Liberation Sans', sans-serif;color:#000;letter-spacing:0.000px;transform:scaleX(1.0408);transform-origin:0 0;">/tb_de1_gui/HEX0</div>
<div class="t" style="left:903.06px;top:733.21px;font:25.5px/25.5px 'Liberation Sans', sans-serif;color:#000;letter-spacing:3.608px;">1111110</div>
<div style="left:594px;top:764px;width:300px;height:33px;background:#e0e0e0"></div>
<div style="left:900px;top:764px;width:200px;height:33px;background:#e0e0e0"></div>
<div style="left:594px;top:797px;width:300px;height:3px;background:#8a8a8a"></div>
<div style="left:900px;top:797px;width:200px;height:3px;background:#8a8a8a"></div>
<svg style="left:604px;top:772px;overflow:visible" width="22" height="22"><rect x="1" y="1" width="20" height="20" rx="3" fill="url(#gexp)" stroke="#9098b0" stroke-width="1.5"/><path d="M5.0 11.0 H17.0" stroke="#000" stroke-width="2.2"/><path d="M11.0 5.0 V17.0" stroke="#000" stroke-width="2.2"/></svg>
<svg style="left:634px;top:766px;overflow:visible" width="30" height="30"><path d="M15.0 0 L30 15.0 L15.0 15.0 Z" fill="#1aa0e0"/><path d="M15.0 0 L0 15.0 L15.0 15.0 Z" fill="#8ee0fa"/><path d="M0 15.0 L15.0 30 L15.0 15.0 Z" fill="#1888c8"/><path d="M30 15.0 L15.0 30 L15.0 15.0 Z" fill="#0e5e90"/><path d="M15.0 6.6 L23.400000000000002 15.0 L15.0 23.400000000000002 L6.6 15.0 Z" fill="#12c0f4"/></svg>
<div class="t" style="left:673.40px;top:769.21px;font:25.5px/25.5px 'Liberation Sans', sans-serif;color:#000;letter-spacing:0.000px;transform:scaleX(1.0372);transform-origin:0 0;">/tb_de1_gui/HEX1</div>
<div class="t" style="left:903.06px;top:769.21px;font:25.5px/25.5px 'Liberation Sans', sans-serif;color:#000;letter-spacing:3.950px;">1111111</div>
<div style="left:594px;top:800px;width:300px;height:33px;background:#e0e0e0"></div>
<div style="left:900px;top:800px;width:200px;height:33px;background:#e0e0e0"></div>
<div style="left:594px;top:833px;width:300px;height:3px;background:#8a8a8a"></div>
<div style="left:900px;top:833px;width:200px;height:3px;background:#8a8a8a"></div>
<svg style="left:604px;top:808px;overflow:visible" width="22" height="22"><rect x="1" y="1" width="20" height="20" rx="3" fill="url(#gexp)" stroke="#9098b0" stroke-width="1.5"/><path d="M5.0 11.0 H17.0" stroke="#000" stroke-width="2.2"/><path d="M11.0 5.0 V17.0" stroke="#000" stroke-width="2.2"/></svg>
<svg style="left:634px;top:802px;overflow:visible" width="30" height="30"><path d="M15.0 0 L30 15.0 L15.0 15.0 Z" fill="#1aa0e0"/><path d="M15.0 0 L0 15.0 L15.0 15.0 Z" fill="#8ee0fa"/><path d="M0 15.0 L15.0 30 L15.0 15.0 Z" fill="#1888c8"/><path d="M30 15.0 L15.0 30 L15.0 15.0 Z" fill="#0e5e90"/><path d="M15.0 6.6 L23.400000000000002 15.0 L15.0 23.400000000000002 L6.6 15.0 Z" fill="#12c0f4"/></svg>
<div class="t" style="left:673.40px;top:805.21px;font:25.5px/25.5px 'Liberation Sans', sans-serif;color:#000;letter-spacing:0.000px;transform:scaleX(1.0422);transform-origin:0 0;">/tb_de1_gui/HEX2</div>
<div class="t" style="left:903.06px;top:805.21px;font:25.5px/25.5px 'Liberation Sans', sans-serif;color:#000;letter-spacing:2.076px;">1001000</div>
<div style="left:594px;top:836px;width:300px;height:33px;background:#e0e0e0"></div>
<div style="left:900px;top:836px;width:200px;height:33px;background:#e0e0e0"></div>
<div style="left:594px;top:869px;width:300px;height:3px;background:#8a8a8a"></div>
<div style="left:900px;top:869px;width:200px;height:3px;background:#8a8a8a"></div>
<svg style="left:604px;top:844px;overflow:visible" width="22" height="22"><rect x="1" y="1" width="20" height="20" rx="3" fill="url(#gexp)" stroke="#9098b0" stroke-width="1.5"/><path d="M5.0 11.0 H17.0" stroke="#000" stroke-width="2.2"/><path d="M11.0 5.0 V17.0" stroke="#000" stroke-width="2.2"/></svg>
<svg style="left:634px;top:838px;overflow:visible" width="30" height="30"><path d="M15.0 0 L30 15.0 L15.0 15.0 Z" fill="#1aa0e0"/><path d="M15.0 0 L0 15.0 L15.0 15.0 Z" fill="#8ee0fa"/><path d="M0 15.0 L15.0 30 L15.0 15.0 Z" fill="#1888c8"/><path d="M30 15.0 L15.0 30 L15.0 15.0 Z" fill="#0e5e90"/><path d="M15.0 6.6 L23.400000000000002 15.0 L15.0 23.400000000000002 L6.6 15.0 Z" fill="#12c0f4"/></svg>
<div class="t" style="left:673.40px;top:841.21px;font:25.5px/25.5px 'Liberation Sans', sans-serif;color:#000;letter-spacing:0.000px;transform:scaleX(1.0414);transform-origin:0 0;">/tb_de1_gui/HEX3</div>
<div class="t" style="left:904.00px;top:841.21px;font:25.5px/25.5px 'Liberation Sans', sans-serif;color:#000;letter-spacing:2.227px;">0000110</div>
<div style="left:594px;top:872px;width:300px;height:33px;background:#e0e0e0"></div>
<div style="left:900px;top:872px;width:200px;height:33px;background:#e0e0e0"></div>
<div style="left:594px;top:905px;width:300px;height:3px;background:#8a8a8a"></div>
<div style="left:900px;top:905px;width:200px;height:3px;background:#8a8a8a"></div>
<svg style="left:604px;top:880px;overflow:visible" width="22" height="22"><rect x="1" y="1" width="20" height="20" rx="3" fill="url(#gexp)" stroke="#9098b0" stroke-width="1.5"/><path d="M5.0 11.0 H17.0" stroke="#000" stroke-width="2.2"/><path d="M11.0 5.0 V17.0" stroke="#000" stroke-width="2.2"/></svg>
<svg style="left:634px;top:874px;overflow:visible" width="30" height="30"><path d="M15.0 0 L30 15.0 L15.0 15.0 Z" fill="#1aa0e0"/><path d="M15.0 0 L0 15.0 L15.0 15.0 Z" fill="#8ee0fa"/><path d="M0 15.0 L15.0 30 L15.0 15.0 Z" fill="#1888c8"/><path d="M30 15.0 L15.0 30 L15.0 15.0 Z" fill="#0e5e90"/><path d="M15.0 6.6 L23.400000000000002 15.0 L15.0 23.400000000000002 L6.6 15.0 Z" fill="#12c0f4"/></svg>
<div class="t" style="left:673.40px;top:877.21px;font:25.5px/25.5px 'Liberation Sans', sans-serif;color:#000;letter-spacing:0.000px;transform:scaleX(1.0395);transform-origin:0 0;">/tb_de1_gui/HEX4</div>
<div class="t" style="left:904.00px;top:877.21px;font:25.5px/25.5px 'Liberation Sans', sans-serif;color:#000;letter-spacing:2.227px;">0001100</div>
<div style="left:594px;top:908px;width:300px;height:33px;background:#e0e0e0"></div>
<div style="left:900px;top:908px;width:200px;height:33px;background:#e0e0e0"></div>
<svg style="left:604px;top:916px;overflow:visible" width="22" height="22"><rect x="1" y="1" width="20" height="20" rx="3" fill="url(#gexp)" stroke="#9098b0" stroke-width="1.5"/><path d="M5.0 11.0 H17.0" stroke="#000" stroke-width="2.2"/><path d="M11.0 5.0 V17.0" stroke="#000" stroke-width="2.2"/></svg>
<svg style="left:634px;top:910px;overflow:visible" width="30" height="30"><path d="M15.0 0 L30 15.0 L15.0 15.0 Z" fill="#1aa0e0"/><path d="M15.0 0 L0 15.0 L15.0 15.0 Z" fill="#8ee0fa"/><path d="M0 15.0 L15.0 30 L15.0 15.0 Z" fill="#1888c8"/><path d="M30 15.0 L15.0 30 L15.0 15.0 Z" fill="#0e5e90"/><path d="M15.0 6.6 L23.400000000000002 15.0 L15.0 23.400000000000002 L6.6 15.0 Z" fill="#12c0f4"/></svg>
<div class="t" style="left:673.40px;top:913.21px;font:25.5px/25.5px 'Liberation Sans', sans-serif;color:#000;letter-spacing:0.000px;transform:scaleX(1.0411);transform-origin:0 0;">/tb_de1_gui/HEX5</div>
<div class="t" style="left:903.06px;top:913.21px;font:25.5px/25.5px 'Liberation Sans', sans-serif;color:#000;letter-spacing:2.382px;">1000110</div>
<div style="left:597px;top:941px;width:292px;height:2px;background:#000"></div>
<div style="left:594px;top:943px;width:300px;height:53px;background:#808080"></div>
<div style="left:904px;top:941px;width:190px;height:2px;background:#000"></div>
<div style="left:900px;top:943px;width:200px;height:53px;background:#808080"></div>
<svg style="left:596px;top:934px;overflow:visible" width="8" height="14"><path d="M1 1 L7 7 L1 13" fill="none" stroke="#000" stroke-width="2"/></svg>
<div style="left:894px;top:535px;width:6px;height:585px;background:#fff"></div>
<div style="left:894px;top:535px;width:2px;height:585px;background:#9c9c9c"></div>
<div style="left:896px;top:535px;width:2px;height:585px;background:#dcdcdc"></div>
<div style="left:900px;top:536px;width:200px;height:36px;box-sizing:border-box;border:2px solid #fff;background:#808080"></div>
<div class="t" style="left:1033.98px;top:542.41px;font:25.5px/25.5px 'Liberation Sans', sans-serif;color:#dcdcdc;letter-spacing:0.000px;">Msgs</div>
<div style="left:900px;top:572px;width:200px;height:5px;background:#fff"></div>
<div style="left:900px;top:577px;width:200px;height:7px;background:#808080"></div>
<div style="left:1100px;top:535px;width:6px;height:585px;background:#fff"></div>
<div style="left:1100px;top:535px;width:2px;height:585px;background:#9c9c9c"></div>
<div style="left:577px;top:996px;width:317px;height:6px;background:#fff"></div>
<div style="left:577px;top:996px;width:317px;height:2px;background:#9c9c9c"></div>
<div style="left:900px;top:996px;width:200px;height:6px;background:#fff"></div>
<div style="left:900px;top:996px;width:200px;height:2px;background:#9c9c9c"></div>
<div style="left:578px;top:1002px;width:316px;height:82px;background:#808080"></div>
<div style="left:678px;top:1002px;width:216px;height:46px;background:#fff"></div>
<div style="left:900px;top:1002px;width:200px;height:46px;background:#fff"></div>
<div style="left:900px;top:1048px;width:200px;height:36px;background:#808080"></div>
<div class="t" style="left:827.10px;top:1011.91px;font:25.5px/25.5px 'Liberation Sans', sans-serif;color:#000;letter-spacing:0.000px;transform:scaleX(1.0023);transform-origin:0 0;">Now</div>
<div class="t" style="left:777.04px;top:1053.91px;font:25.5px/25.5px 'Liberation Sans', sans-serif;color:#dcdcdc;letter-spacing:0.000px;transform:scaleX(1.0489);transform-origin:0 0;">Cursor 1</div>
<div class="t" style="left:1002.43px;top:1012.41px;font:25.5px/25.5px 'Liberation Sans', sans-serif;color:#000;letter-spacing:0.000px;transform:scaleX(1.1049);transform-origin:0 0;">300 ps</div>
<div class="t" style="left:1034.31px;top:1053.91px;font:25.5px/25.5px 'Liberation Sans', sans-serif;color:#dcdcdc;letter-spacing:0.000px;transform:scaleX(1.0932);transform-origin:0 0;">0 ps</div>
<svg style="left:598px;top:1015px;overflow:visible" width="23" height="20"><path d="M2 12 L6 4 L10 8 L14 2 L18 6 V12 Z" fill="#aaa"/><rect x="12" y="8" width="6" height="5" fill="#222"/><path d="M2 16 H20 M3 13 V19 M19 13 V19" stroke="#3a8af0" stroke-width="2"/></svg>
<svg style="left:626px;top:1015px;overflow:visible" width="24" height="23"><rect x="1" y="1" width="22" height="19" fill="#d8d8e0" stroke="#7090c8" stroke-width="1.5"/><rect x="1" y="1" width="22" height="4" fill="#6a98e0"/><rect x="4" y="8" width="5" height="3" fill="#6a98e0"/><rect x="4" y="14" width="5" height="3" fill="#6a98e0"/><path d="M8 22 L14 14" stroke="#90b0e8" stroke-width="4"/></svg>
<svg style="left:656px;top:1016px;overflow:visible" width="21" height="21"><circle cx="10.5" cy="10.5" r="10" fill="#5ab05a"/><circle cx="10.5" cy="10.5" r="7.5" fill="#80c880"/><path d="M10.5 6 V15 M6 10.5 H15" stroke="#e8f8e8" stroke-width="3"/></svg>
<svg style="left:596px;top:1054px;overflow:visible" width="23" height="25"><path d="M5 10 V6 Q11 0 17 6 V10" fill="none" stroke="#bbb" stroke-width="2.5"/><rect x="1" y="9" width="21" height="15" fill="#f0c850" stroke="#d89020" stroke-width="1.5"/><rect x="10" y="14" width="3" height="4" fill="#a06010"/></svg>
<svg style="left:626px;top:1056px;overflow:visible" width="24" height="25"><path d="M2 22 L14 10" stroke="#6a98e0" stroke-width="6"/><path d="M14 10 L18 4 M16 2 L22 8" stroke="#bbb" stroke-width="3"/></svg>
<svg style="left:656px;top:1058px;overflow:visible" width="21" height="21"><circle cx="10.5" cy="10.5" r="10" fill="#e05a4a"/><circle cx="10.5" cy="10.5" r="7.5" fill="#f08070"/><path d="M5 10.5 H16" stroke="#fff" stroke-width="4"/></svg>
<div style="left:577px;top:1084px;width:317px;height:6px;background:#fff"></div>
<div style="left:577px;top:1084px;width:317px;height:2px;background:#9c9c9c"></div>
<div style="left:900px;top:1084px;width:200px;height:6px;background:#fff"></div>
<div style="left:900px;top:1084px;width:200px;height:2px;background:#9c9c9c"></div>
<div style="left:578px;top:1090px;width:16px;height:26px;background:#808080"></div>
<div style="left:594px;top:1090px;width:300px;height:26px;background:#bebebe;box-sizing:border-box;border-top:2px solid #9c9c9c;border-left:2px solid #9c9c9c"></div>
<svg style="left:596px;top:1092px;overflow:visible" width="22" height="22"><path d="M20 2 L2 11.0 L20 20 Z" fill="#fff"/><path d="M2 11.0 L20 20 V2" fill="none" stroke="#9c9c9c" stroke-width="2"/></svg>
<svg style="left:870px;top:1092px;overflow:visible" width="22" height="22"><path d="M2 2 L20 11.0 L2 20 Z" fill="#fff"/><path d="M20 11.0 L2 20" fill="none" stroke="#8a8a8a" stroke-width="2"/></svg>
<div style="left:620px;top:1093px;width:242px;height:21px;background:#fff;box-sizing:border-box;border-right:2px solid #9c9c9c;border-bottom:2px solid #9c9c9c"></div>
<div style="left:900px;top:1090px;width:200px;height:26px;background:#bebebe;box-sizing:border-box;border-top:2px solid #9c9c9c;border-left:2px solid #9c9c9c"></div>
<svg style="left:902px;top:1092px;overflow:visible" width="22" height="22"><path d="M20 2 L2 11.0 L20 20 Z" fill="#fff"/><path d="M2 11.0 L20 20 V2" fill="none" stroke="#9c9c9c" stroke-width="2"/></svg>
<svg style="left:1076px;top:1092px;overflow:visible" width="22" height="22"><path d="M2 2 L20 11.0 L2 20 Z" fill="#fff"/><path d="M20 11.0 L2 20" fill="none" stroke="#8a8a8a" stroke-width="2"/></svg>
<div style="left:927px;top:1093px;width:148px;height:21px;background:#fff;box-sizing:border-box;border-right:2px solid #9c9c9c;border-bottom:2px solid #9c9c9c"></div>
<div style="left:1106px;top:535px;width:466px;height:37px;background:#000"></div>
<div style="left:1106px;top:572px;width:466px;height:2px;background:#9c9c9c"></div>
<div style="left:1106px;top:574px;width:466px;height:4px;background:#fff"></div>
<div style="left:1106px;top:578px;width:466px;height:418px;background:#000"></div>
<div style="left:1572px;top:535px;width:6px;height:585px;background:#fff"></div>
<div style="left:1572px;top:535px;width:2px;height:585px;background:#9c9c9c"></div>
<div style="left:1578px;top:535px;width:2px;height:585px;background:#9c9c9c"></div>
<div style="left:1580px;top:536px;width:24px;height:36px;background:#808080"></div>
<div style="left:1580px;top:578px;width:24px;height:419px;background:#bebebe;box-sizing:border-box;border-top:2px solid #9c9c9c;border-left:2px solid #9c9c9c"></div>
<svg style="left:1582px;top:580px;overflow:visible" width="20" height="22"><path d="M2 20 L10.0 2 L18 20 Z" fill="#fff"/><path d="M18 20 H2" stroke="#9c9c9c" stroke-width="2"/></svg>
<svg style="left:1582px;top:973px;overflow:visible" width="20" height="22"><path d="M2 2 L10.0 20 L18 2 Z" fill="#fff"/><path d="M10.0 20 L18 2" stroke="#8a8a8a" stroke-width="2"/></svg>
<div style="left:1583px;top:605px;width:19px;height:365px;background:#fff;box-sizing:border-box;border-right:2px solid #9c9c9c;border-bottom:2px solid #9c9c9c"></div>
<div style="left:1106px;top:996px;width:466px;height:6px;background:#fff"></div>
<div style="left:1106px;top:996px;width:466px;height:2px;background:#9c9c9c"></div>
<div style="left:1106px;top:1002px;width:466px;height:82px;background:#000"></div>
<div style="left:1580px;top:1002px;width:24px;height:82px;background:#808080"></div>
<div style="left:1106px;top:1084px;width:466px;height:6px;background:#fff"></div>
<div style="left:1106px;top:1084px;width:466px;height:2px;background:#9c9c9c"></div>
<div style="left:1106px;top:1090px;width:466px;height:26px;background:#bebebe;box-sizing:border-box;border-top:2px solid #9c9c9c;border-left:2px solid #9c9c9c"></div>
<svg style="left:1108px;top:1092px;overflow:visible" width="22" height="22"><path d="M20 2 L2 11.0 L20 20 Z" fill="#fff"/><path d="M2 11.0 L20 20 V2" fill="none" stroke="#9c9c9c" stroke-width="2"/></svg>
<svg style="left:1548px;top:1092px;overflow:visible" width="22" height="22"><path d="M2 2 L20 11.0 L2 20 Z" fill="#fff"/><path d="M20 11.0 L2 20" fill="none" stroke="#8a8a8a" stroke-width="2"/></svg>
<div style="left:1130px;top:1093px;width:418px;height:21px;background:#fff;box-sizing:border-box;border-right:2px solid #9c9c9c;border-bottom:2px solid #9c9c9c"></div>
<div style="left:1580px;top:1090px;width:24px;height:26px;background:#808080"></div>
<div style="left:1604px;top:535px;width:6px;height:585px;background:#fff"></div>
<div style="left:1606px;top:535px;width:2px;height:585px;background:#e0e0e0"></div>
<svg style="left:1106px;top:578px;overflow:visible" width="466" height="418"><path d="M131.5 0 V418" stroke="#8c8c8c" stroke-width="1.5"/><path d="M255.5 0 V418" stroke="#8c8c8c" stroke-width="1.5"/><path d="M379.5 0 V418" stroke="#8c8c8c" stroke-width="1.5"/><path d="M7 35 H12.9 V11 H19.1 V35 H25.3 V11 H31.5 V35 H37.7 V11 H43.9 V35 H50.1 V11 H56.3 V35 H62.5 V11 H68.7 V35 H74.9 V11 H81.1 V35 H87.3 V11 H93.5 V35 H99.7 V11 H105.9 V35 H112.1 V11 H118.3 V35 H124.5 V11 H130.7 V35 H136.9 V11 H143.1 V35 H149.3 V11 H155.5 V35 H161.7 V11 H167.9 V35 H174.1 V11 H180.3 V35 H186.5 V11 H192.7 V35 H198.9 V11 H205.1 V35 H211.3 V11 H217.5 V35 H223.7 V11 H229.9 V35 H236.1 V11 H242.3 V35 H248.5 V11 H254.7 V35 H260.9 V11 H267.1 V35 H273.3 V11 H279.5 V35 H285.7 V11 H291.9 V35 H298.1 V11 H304.3 V35 H310.5 V11 H316.7 V35 H322.9 V11 H329.1 V35 H335.3 V11 H341.5 V35 H347.7 V11 H353.9 V35 H360.1 V11 H366.3 V35 H372.5 V11 H378.7 V35 H379" fill="none" stroke="#00f000" stroke-width="2.4"/><path d="M8 45 H131 M8 70 H131" stroke="#a8f0a8" stroke-width="2"/><path d="M134 45 H253 M134 70 H253 M258 45 H379 M258 70 H379" stroke="#a8f0a8" stroke-width="2"/><path d="M130 45 L132 49 L134 45 M130 70 L132 66 L134 70" stroke="#a8f0a8" stroke-width="2" fill="none"/><path d="M253 45 L255.5 49 L258 45 M253 70 L255.5 66 L258 70" stroke="#a8f0a8" stroke-width="2" fill="none"/><path d="M8 81 H379 M8 106 H379" stroke="#a8f0a8" stroke-width="2"/><path d="M8 117 H379 M8 142 H379" stroke="#a8f0a8" stroke-width="2"/><path d="M8 153 H131 V178 H8" stroke="#f00000" stroke-width="2.5" fill="none"/><rect x="130" y="153" width="4" height="4" fill="#f00"/><rect x="130" y="174" width="4" height="4" fill="#f00"/><path d="M137 153 H253 M137 178 H253 M137 153 L134 157 V174 L137 178" stroke="#a8f0a8" stroke-width="2" fill="none"/><path d="M258 153 H379 M258 178 H379" stroke="#a8f0a8" stroke-width="2"/><path d="M253 153 L255.5 157 L258 153 M253 178 L255.5 174 L258 178" stroke="#a8f0a8" stroke-width="2" fill="none"/><path d="M134 165 H138" stroke="#f00" stroke-width="2"/><path d="M8 201.5 H137" stroke="#f00000" stroke-width="2.5"/><path d="M142 189 H379 M142 214 H379 M142 189 L137 193 V210 L142 214" stroke="#a8f0a8" stroke-width="2" fill="none"/><path d="M8 237.5 H137" stroke="#f00000" stroke-width="2.5"/><path d="M142 225 H379 M142 250 H379 M142 225 L137 229 V246 L142 250" stroke="#a8f0a8" stroke-width="2" fill="none"/><path d="M8 273.5 H137" stroke="#f00000" stroke-width="2.5"/><path d="M142 261 H379 M142 286 H379 M142 261 L137 265 V282 L142 286" stroke="#a8f0a8" stroke-width="2" fill="none"/><path d="M8 309.5 H137" stroke="#f00000" stroke-width="2.5"/><path d="M142 297 H379 M142 322 H379 M142 297 L137 301 V318 L142 322" stroke="#a8f0a8" stroke-width="2" fill="none"/><path d="M8 345.5 H137" stroke="#f00000" stroke-width="2.5"/><path d="M142 333 H379 M142 358 H379 M142 333 L137 337 V354 L142 358" stroke="#a8f0a8" stroke-width="2" fill="none"/><path d="M7 0 V418" stroke="#f0d000" stroke-width="2"/><path d="M7 22 V38" stroke="#f00" stroke-width="2"/><path d="M7 50 V66" stroke="#4030c0" stroke-width="2"/><path d="M7 86 V102" stroke="#4030c0" stroke-width="2"/><path d="M7 122 V138" stroke="#4030c0" stroke-width="2"/><path d="M7 158 V174" stroke="#4030c0" stroke-width="2"/></svg>
<div style="left:1112px;top:538px;width:2px;height:34px;background:#f0d000"></div>
<div class="t" style="left:1121.06px;top:624.91px;font:25.5px/25.5px 'Liberation Sans', sans-serif;color:#e0e0e0;letter-spacing:4.202px;">1111</div>
<div class="t" style="left:1251.06px;top:624.91px;font:25.5px/25.5px 'Liberation Sans', sans-serif;color:#e0e0e0;letter-spacing:3.530px;">1110</div>
<div class="t" style="left:1370.06px;top:624.91px;font:25.5px/25.5px 'Liberation Sans', sans-serif;color:#e0e0e0;letter-spacing:4.202px;">1111</div>
<div class="t" style="left:1122.00px;top:660.91px;font:25.5px/25.5px 'Liberation Sans', sans-serif;color:#e0e0e0;letter-spacing:1.907px;">0000000000</div>
<div class="t" style="left:1122.00px;top:696.91px;font:25.5px/25.5px 'Liberation Sans', sans-serif;color:#e0e0e0;letter-spacing:1.907px;">0000000000</div>
<div class="t" style="left:1122.67px;top:732.91px;font:25.5px/25.5px 'Liberation Sans', sans-serif;color:#e0e0e0;letter-spacing:0.051px;transform:scaleX(1.1500);transform-origin:0 0;">x11x1...</div>
<div class="t" style="left:1251.06px;top:732.91px;font:25.5px/25.5px 'Liberation Sans', sans-serif;color:#e0e0e0;letter-spacing:2.875px;">1111...</div>
<div class="t" style="left:1370.06px;top:732.91px;font:25.5px/25.5px 'Liberation Sans', sans-serif;color:#e0e0e0;letter-spacing:2.904px;">11111...</div>
<div class="t" style="left:1251.06px;top:768.91px;font:25.5px/25.5px 'Liberation Sans', sans-serif;color:#e0e0e0;letter-spacing:3.817px;">1111111</div>
<div class="t" style="left:1251.06px;top:804.91px;font:25.5px/25.5px 'Liberation Sans', sans-serif;color:#e0e0e0;letter-spacing:1.943px;">1001000</div>
<div class="t" style="left:1252.00px;top:840.91px;font:25.5px/25.5px 'Liberation Sans', sans-serif;color:#e0e0e0;letter-spacing:2.094px;">0000110</div>
<div class="t" style="left:1252.00px;top:876.91px;font:25.5px/25.5px 'Liberation Sans', sans-serif;color:#e0e0e0;letter-spacing:2.094px;">0001100</div>
<div class="t" style="left:1251.06px;top:912.91px;font:25.5px/25.5px 'Liberation Sans', sans-serif;color:#e0e0e0;letter-spacing:2.249px;">1000110</div>
<svg style="left:1106px;top:1002px;overflow:visible" width="466" height="82"><rect x="6.0" y="0" width="2.5" height="17" fill="#00e000"/><rect x="18.4" y="6" width="2.5" height="10" fill="#00e000"/><rect x="30.8" y="6" width="2.5" height="10" fill="#00e000"/><rect x="43.2" y="6" width="2.5" height="10" fill="#00e000"/><rect x="55.6" y="6" width="2.5" height="10" fill="#00e000"/><rect x="68.0" y="6" width="2.5" height="10" fill="#00e000"/><rect x="80.4" y="6" width="2.5" height="10" fill="#00e000"/><rect x="92.8" y="6" width="2.5" height="10" fill="#00e000"/><rect x="105.2" y="6" width="2.5" height="10" fill="#00e000"/><rect x="117.6" y="6" width="2.5" height="10" fill="#00e000"/><rect x="130.0" y="0" width="2.5" height="17" fill="#00e000"/><rect x="142.4" y="6" width="2.5" height="10" fill="#00e000"/><rect x="154.8" y="6" width="2.5" height="10" fill="#00e000"/><rect x="167.2" y="6" width="2.5" height="10" fill="#00e000"/><rect x="179.6" y="6" width="2.5" height="10" fill="#00e000"/><rect x="192.0" y="6" width="2.5" height="10" fill="#00e000"/><rect x="204.4" y="6" width="2.5" height="10" fill="#00e000"/><rect x="216.8" y="6" width="2.5" height="10" fill="#00e000"/><rect x="229.2" y="6" width="2.5" height="10" fill="#00e000"/><rect x="241.6" y="6" width="2.5" height="10" fill="#00e000"/><rect x="254.0" y="0" width="2.5" height="17" fill="#00e000"/><rect x="266.4" y="6" width="2.5" height="10" fill="#00e000"/><rect x="278.8" y="6" width="2.5" height="10" fill="#00e000"/><rect x="291.2" y="6" width="2.5" height="10" fill="#00e000"/><rect x="303.6" y="6" width="2.5" height="10" fill="#00e000"/><rect x="316.0" y="6" width="2.5" height="10" fill="#00e000"/><rect x="328.4" y="6" width="2.5" height="10" fill="#00e000"/><rect x="340.8" y="6" width="2.5" height="10" fill="#00e000"/><rect x="353.2" y="6" width="2.5" height="10" fill="#00e000"/><rect x="365.6" y="6" width="2.5" height="10" fill="#00e000"/><rect x="378.0" y="0" width="2.5" height="17" fill="#00e000"/><rect x="390.4" y="6" width="2.5" height="10" fill="#00e000"/><rect x="402.8" y="6" width="2.5" height="10" fill="#00e000"/><rect x="415.2" y="6" width="2.5" height="10" fill="#00e000"/><rect x="427.6" y="6" width="2.5" height="10" fill="#00e000"/><rect x="440.0" y="6" width="2.5" height="10" fill="#00e000"/><rect x="452.4" y="6" width="2.5" height="10" fill="#00e000"/><rect x="7" y="46" width="453" height="2" fill="#8c8c8c"/><rect x="6" y="0" width="2" height="82" fill="#f0d000"/><rect x="6" y="24" width="2" height="20" fill="#f00"/><rect x="8" y="49" width="62" height="33" fill="none" stroke="#f0c800" stroke-width="2.5"/></svg>
<div style="left:1106px;top:1002px;width:466px;height:82px;overflow:hidden">
</div>
<div class="t" style="left:1111.27px;top:1020.91px;font:25.5px/25.5px 'Liberation Sans', sans-serif;color:#00d800;letter-spacing:0.000px;transform:scaleX(1.0545);transform-origin:0 0;">ps</div>
<div class="t" style="left:1317.17px;top:1020.91px;font:25.5px/25.5px 'Liberation Sans', sans-serif;color:#00d800;letter-spacing:0.000px;transform:scaleX(1.1189);transform-origin:0 0;">200 ps</div>
<div class="t" style="left:1118.52px;top:1055.41px;font:25.5px/25.5px 'Liberation Sans', sans-serif;color:#f0c800;letter-spacing:0.000px;transform:scaleX(1.0889);transform-origin:0 0;">0 ps</div>
<div style="left:12px;top:1122px;width:1600px;height:16px;background:#d9d9d9"></div>
<div style="left:14px;top:1136px;width:1598px;height:2px;background:#9c9c9c"></div>
<div style="left:14px;top:1138px;width:1598px;height:196px;box-sizing:border-box;border:2px solid #9c9c9c;border-top:none;background:#fff"></div>
<div style="left:16px;top:1140px;width:1592px;height:34px;background:#6270b4"></div>
<div style="left:14px;top:1138px;width:2px;height:196px;background:#e0e0e0"></div>
<svg style="left:20px;top:1142px;overflow:visible" width="26" height="28"><path d="M3 28 V8 Q13 -2 23 8 V28" fill="none" stroke="#222" stroke-width="2"/><path d="M5 28 V9 Q13 1 21 9 V28 Z" fill="#9a8a8a"/><path d="M8 26 V10 Q13 5 18 10 V26 Z" fill="#c8c0c0"/><rect x="9" y="8" width="8" height="8" fill="#fff"/></svg>
<div class="t" style="left:55.38px;top:1142.41px;font:25.5px/25.5px 'Liberation Sans', sans-serif;color:#eef0ff;letter-spacing:0.000px;transform:scaleX(1.0898);transform-origin:0 0;">Transcript</div>
<div style="left:188px;top:1148px;width:630px;height:3px;background:#aab4fa"></div>
<div style="left:190px;top:1151px;width:628px;height:2px;background:#404884"></div>
<div style="left:188px;top:1157px;width:630px;height:3px;background:#aab4fa"></div>
<div style="left:190px;top:1160px;width:628px;height:2px;background:#404884"></div>
<div style="left:862px;top:1148px;width:630px;height:3px;background:#aab4fa"></div>
<div style="left:864px;top:1151px;width:628px;height:2px;background:#404884"></div>
<div style="left:862px;top:1157px;width:630px;height:3px;background:#aab4fa"></div>
<div style="left:864px;top:1160px;width:628px;height:2px;background:#404884"></div>
<svg style="left:822px;top:1149px;overflow:visible" width="40" height="16"><rect x="0" y="0" width="2" height="2" fill="#dde0ff"/><rect x="6" y="0" width="2" height="2" fill="#dde0ff"/><rect x="12" y="0" width="2" height="2" fill="#dde0ff"/><rect x="18" y="0" width="2" height="2" fill="#dde0ff"/><rect x="24" y="0" width="2" height="2" fill="#dde0ff"/><rect x="30" y="0" width="2" height="2" fill="#dde0ff"/><rect x="3" y="6" width="2" height="2" fill="#dde0ff"/><rect x="9" y="6" width="2" height="2" fill="#dde0ff"/><rect x="15" y="6" width="2" height="2" fill="#dde0ff"/><rect x="21" y="6" width="2" height="2" fill="#dde0ff"/><rect x="27" y="6" width="2" height="2" fill="#dde0ff"/><rect x="33" y="6" width="2" height="2" fill="#dde0ff"/><rect x="0" y="12" width="2" height="2" fill="#dde0ff"/><rect x="6" y="12" width="2" height="2" fill="#dde0ff"/><rect x="12" y="12" width="2" height="2" fill="#dde0ff"/><rect x="18" y="12" width="2" height="2" fill="#dde0ff"/><rect x="24" y="12" width="2" height="2" fill="#dde0ff"/><rect x="30" y="12" width="2" height="2" fill="#dde0ff"/></svg>
<div style="left:1500px;top:1142px;width:28px;height:30px;background:#fff;border:2px solid;border-color:#f0f0f0 #9c9c9c #9c9c9c #f0f0f0;box-sizing:border-box"></div>
<div style="left:1536px;top:1142px;width:28px;height:30px;background:#fff;border:2px solid;border-color:#f0f0f0 #9c9c9c #9c9c9c #f0f0f0;box-sizing:border-box"></div>
<div style="left:1572px;top:1142px;width:28px;height:30px;background:#fff;border:2px solid;border-color:#f0f0f0 #9c9c9c #9c9c9c #f0f0f0;box-sizing:border-box"></div>
<svg style="left:1500px;top:1142px;overflow:visible" width="28" height="30"><path d="M14 7 V23 M6 15 H22" stroke="#000" stroke-width="3.5"/></svg>
<svg style="left:1536px;top:1142px;overflow:visible" width="28" height="30"><rect x="6" y="13" width="8" height="8" fill="none" stroke="#000" stroke-width="2.2"/><rect x="9" y="16" width="2" height="2" fill="#000"/><path d="M10 17 L20 7" stroke="#000" stroke-width="2.5"/><path d="M13 6 H21 V14" fill="none" stroke="#000" stroke-width="2.5"/></svg>
<svg style="left:1572px;top:1142px;overflow:visible" width="28" height="30"><path d="M7 8 L21 22 M21 8 L7 22" stroke="#000" stroke-width="3"/></svg>
<div style="left:16px;top:1174px;width:1592px;height:4px;background:#9c9c9c"></div>
<div style="left:20px;top:1174px;width:4px;height:158px;background:#9c9c9c"></div>
<div style="left:24px;top:1178px;width:1554px;height:152px;background:#fff"></div>
<div style="left:24px;top:1330px;width:1554px;height:2px;background:#e6e6e6"></div>
<div class="t" style="left:29.88px;top:1182.41px;font:25.5px/25.5px 'Liberation Sans', sans-serif;color:#1c1c8c;letter-spacing:0.000px;transform:scaleX(1.0447);transform-origin:0 0;">VSIM 4&gt;</div>
<div class="t" style="left:143.50px;top:1182.41px;font:25.5px/25.5px 'Liberation Sans', sans-serif;color:#000;letter-spacing:0.000px;transform:scaleX(1.1221);transform-origin:0 0;">run</div>
<div class="t" style="left:27.29px;top:1211.41px;font:25.5px/25.5px 'Liberation Sans', sans-serif;color:#000;letter-spacing:0.000px;transform:scaleX(1.1280);transform-origin:0 0;">run</div>
<div class="t" style="left:29.88px;top:1241.91px;font:25.5px/25.5px 'Liberation Sans', sans-serif;color:#1c1c8c;letter-spacing:0.000px;transform:scaleX(1.0447);transform-origin:0 0;">VSIM 5&gt;</div>
<div class="t" style="left:143.50px;top:1241.91px;font:25.5px/25.5px 'Liberation Sans', sans-serif;color:#000;letter-spacing:0.000px;transform:scaleX(1.1221);transform-origin:0 0;">run</div>
<div class="t" style="left:26.08px;top:1298.91px;font:25.5px/25.5px 'Liberation Sans', sans-serif;color:#1c1c8c;letter-spacing:0.000px;transform:scaleX(1.0457);transform-origin:0 0;">VSIM 5&gt;</div>
<div style="left:1582px;top:1176px;width:24px;height:156px;background:#bebebe;box-sizing:border-box;border-top:2px solid #9c9c9c;border-left:2px solid #9c9c9c"></div>
<svg style="left:1584px;top:1178px;overflow:visible" width="20" height="22"><path d="M2 20 L10.0 2 L18 20 Z" fill="#fff"/><path d="M18 20 H2" stroke="#9c9c9c" stroke-width="2"/></svg>
<svg style="left:1584px;top:1308px;overflow:visible" width="20" height="22"><path d="M2 2 L10.0 20 L18 2 Z" fill="#fff"/><path d="M10.0 20 L18 2" stroke="#8a8a8a" stroke-width="2"/></svg>
<div style="left:1585px;top:1274px;width:19px;height:31px;background:#fff;box-sizing:border-box;border-right:2px solid #9c9c9c;border-bottom:2px solid #9c9c9c"></div>
<div style="left:12px;top:1336px;width:1600px;height:48px;background:#fff"></div>
<div style="left:17px;top:1340px;width:889px;height:40px;box-sizing:border-box;border:2px solid;border-color:#9c9c9c #e2e2e2 #e2e2e2 #9c9c9c"></div>
<div style="left:916px;top:1340px;width:203px;height:40px;box-sizing:border-box;border:2px solid;border-color:#9c9c9c #e2e2e2 #e2e2e2 #9c9c9c"></div>
<div style="left:1127px;top:1340px;width:449px;height:40px;box-sizing:border-box;border:2px solid;border-color:#9c9c9c #e2e2e2 #e2e2e2 #9c9c9c"></div>
<div class="t" style="left:920.75px;top:1345.91px;font:25.5px/25.5px 'Liberation Sans', sans-serif;color:#000;letter-spacing:0.000px;transform:scaleX(1.0780);transform-origin:0 0;">Project : guitest</div>
<div class="t" style="left:1131.14px;top:1345.91px;font:25.5px/25.5px 'Liberation Sans', sans-serif;color:#000;letter-spacing:0.000px;transform:scaleX(1.0783);transform-origin:0 0;">Now: 300 ps</div>
<div class="t" style="left:1306.35px;top:1345.91px;font:25.5px/25.5px 'Liberation Sans', sans-serif;color:#000;letter-spacing:0.000px;transform:scaleX(1.0767);transform-origin:0 0;">Delta: 2</div>
<div style="left:1582px;top:1354px;width:30px;height:30px;box-sizing:border-box;border-top:2px solid #e2e2e2;border-left:2px solid #e2e2e2"></div>
<svg style="left:1584px;top:1356px;overflow:visible" width="28" height="28"><path d="M25 4 L4 25 M25 12 L12 25 M25 20 L20 25" stroke="#888" stroke-width="2" stroke-dasharray="2 2"/></svg>
</body></html>
